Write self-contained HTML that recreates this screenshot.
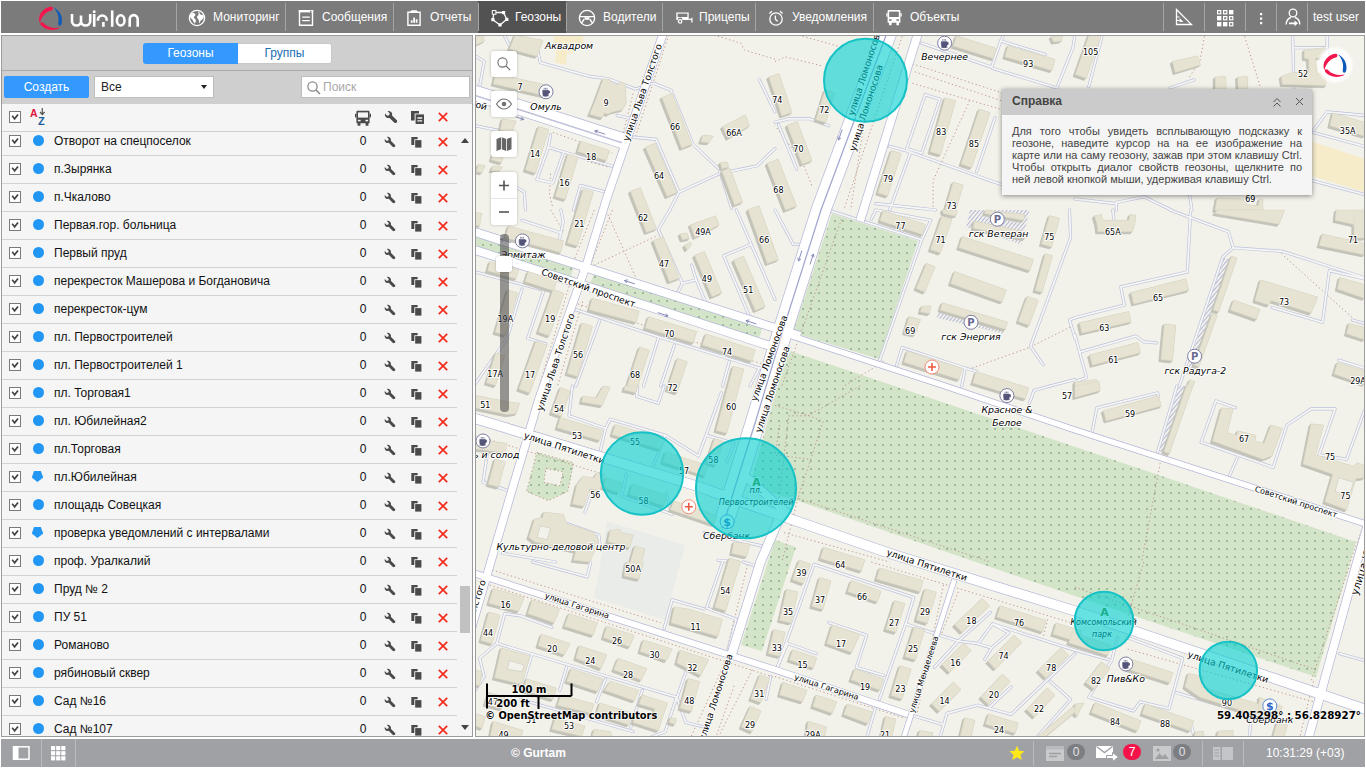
<!DOCTYPE html>
<html lang="ru">
<head>
<meta charset="utf-8">
<title>Wialon</title>
<style>
*{box-sizing:border-box;margin:0;padding:0}
html,body{width:1366px;height:768px;overflow:hidden;background:#fff;font-family:"Liberation Sans",sans-serif;font-size:13px;color:#222}
#top{position:absolute;left:1px;top:1px;width:1364px;height:32px;background:#7b7b7b;color:#fff}
#top .sep{position:absolute;top:2px;width:1px;height:28px;background:#a5a5a5}
#top .it{position:absolute;top:0;height:32px;line-height:32px;font-size:12px;color:#fff;white-space:nowrap}
#top .it svg{position:absolute;top:7.5px;left:12px}
#top .it span{position:absolute;left:37px;top:0}
#top .sel{background:#525252}
#left{position:absolute;left:1px;top:35px;width:472px;height:702px;background:#f5f5f5;border:1px solid #9b9b9b;overflow:hidden}
#lhead{position:absolute;left:0;top:0;width:470px;height:68px;background:#d0cfcf}
#lline{position:absolute;left:0;top:34px;width:470px;height:1px;background:#a9a9a9}
.tab{position:absolute;top:7px;height:21px;line-height:21px;text-align:center;font-size:12px}
#t1{left:141px;width:95px;background:#3399ff;color:#fff;border-radius:3px 0 0 3px}
#t2{left:236px;width:94px;background:#fff;color:#1a6fb5;border-radius:0 3px 3px 0;border:1px solid #c8c8c8;border-left:0;line-height:18px}
#create{position:absolute;left:2px;top:40px;width:85px;height:22px;background:#3399ff;color:#fff;border-radius:2px;text-align:center;line-height:22px;font-size:12px}
#sel{position:absolute;left:92px;top:40px;width:120px;height:22px;background:#fff;border:1px solid #bdbdbd;line-height:20px;padding-left:6px;font-size:12px;color:#222}
#sel i{position:absolute;right:6px;top:8px;border:3.5px solid transparent;border-top:4.5px solid #222;width:0;height:0}
#search{position:absolute;left:299px;top:40px;width:169px;height:22px;background:#fff;border:1px solid #bdbdbd;line-height:20px;padding-left:21px;font-size:12px;color:#a8a8a8}
#search svg{position:absolute;left:4px;top:3px}
#rows{position:absolute;left:0;top:68px;width:470px;height:633px}
.row{position:absolute;left:0;width:455px;height:28px;border-bottom:1px solid #d2d2d2}
.row .cb{position:absolute;left:7px;top:7px;width:12px;height:12px;border:1px solid #7a7a7a;background:#fff}
.row .cb svg{position:absolute;left:0;top:0}
.row .dot{position:absolute;left:31px;top:7px;width:11px;height:11px;border-radius:50%;background:#2196f3}
.row .nm{position:absolute;left:52px;top:0;line-height:27px;font-size:12px;color:#111;white-space:nowrap}
.row .z{position:absolute;left:355px;width:12px;text-align:center;top:0;line-height:27px;font-size:12px;color:#111}
.row svg.i1{position:absolute;left:381px;top:8px}
.row svg.i2{position:absolute;left:408px;top:8px}
.row svg.i3{position:absolute;left:435px;top:8px}
#map{position:absolute;left:475px;top:35px;width:890px;height:702px;border:1px solid #9b9b9b;overflow:hidden;background:#f3f2ea}
.mbtn{position:absolute;left:15px;width:26px;height:26px;background:#fff;border-radius:3px;box-shadow:0 0 3px rgba(0,0,0,.25)}
#bot{position:absolute;left:1px;top:739px;width:1364px;height:28px;background:#9fa1a5;color:#fff}
#dlg{position:absolute;left:526px;top:53px;width:310px;height:106px;background:#f5f5f5;box-shadow:0 1px 5px rgba(0,0,0,.45)}
#dlg .h{height:26px;background:#cbcbcb;font-weight:bold;font-size:12px;color:#444;line-height:25px;padding-left:10px}
#dlg .b{position:absolute;left:10px;top:36px;width:290px;font-size:11px;line-height:12px;color:#444;text-align:justify}
</style>
</head>
<body>
<div id="top">
<svg style="position:absolute;left:35px;top:3px" width="32" height="28" viewBox="36 4 32 28"><path d="M52.5 7.2C53.5 8.5 52.8 10.2 51 10.6C46 12 41.5 16.5 40 23C38.3 20 38.8 15 42 11.5C44.5 8.5 49.5 5.8 52.5 7.2Z" fill="#f5164e"/><path d="M40.2 22.8C41.5 21.8 43 22.3 44 23.5C47.5 27.5 54 28.8 60.5 27.5C57 30 50 30.8 45.5 28.6C42.5 27.2 40 25 40.2 22.8Z" fill="#f5164e"/><path d="M53.5 7.6C58 9.5 61.8 14 62 20C62 23 61.5 25.6 60 25.8C58.3 25.9 58 24 58.4 22C59.3 17 57.5 11.5 53.5 7.6Z" fill="#0f5ab8"/></svg>
<svg style="position:absolute;left:68px;top:7px" width="74" height="24" viewBox="69 8 74 24"><g fill="none" stroke="#fff" stroke-width="2.6" stroke-linejoin="round"><path d="M72 14V21.2a4.5 4.3 0 0 0 9 0V15.5M81 21.2a4.6 4.3 0 0 0 9.2 0V14"/><path d="M94.2 14V26.8M94.2 10.4V13"/><path d="M97.9 20.8V20a4.4 4.5 0 0 1 8.8 0V20.8"/><path d="M103.4 22V26.8"/><path d="M112.2 10.4V26.8"/><ellipse cx="120.7" cy="20.4" rx="3.8" ry="5.1"/><path d="M129.7 26.8V19.3a4 4.2 0 0 1 8 0V26.8"/></g></svg>
<div class="it" style="left:175px;width:109px"><svg width="18" height="18" viewBox="0 0 18 18" ><circle cx="9" cy="9" r="7.6" fill="none" stroke="#fff" stroke-width="1.4"/><path d="M4.2 4.2c1.5-.6 3 .2 3.2 1.3c.2 1.2-1.3 1.6-1.5 2.8c-.2 1.2 1.3 1.4 1.8 2.5c.5 1.2-.2 2.6-.9 3.6c-1.2-1-1.6-2.4-2.4-3.6c-.8-1.2-2.2-2-2.3-3.4c0-1.2.9-2.5 2.1-3.2z M10.5 2.2c1.4.9.8 2.3 1.8 3.1c1 .8 2.5.3 3.3 1.5c.4 1-.2 2.2-.8 3.1c-.7.9-1.7 1-2.4 2.1c-.4.8-.2 1.7-.9 2.3c-.6-1.1-.3-2.3-.8-3.4c-.5-1.1-1.8-1.6-1.7-2.9c.1-1.2 1.4-1.5 1.6-2.6c.2-1.1-.7-2.1-.1-3.2z" fill="#fff"/></svg><span>Мониторинг</span></div>
<div class="it" style="left:284px;width:108px"><svg width="18" height="18" viewBox="0 0 18 18" ><path d="M2.5 1.7h13v14.6h-13z" fill="none" stroke="#fff" stroke-width="1.4"/><rect x="1.8" y="1" width="14.4" height="2.4" fill="#fff"/><rect x="13" y="1.8" width="1.4" height="1.4" fill="#7b7b7b"/><path d="M5.2 8.2h7.6M5.2 11.6h7.6" stroke="#fff" stroke-width="1.3"/></svg><span>Сообщения</span></div>
<div class="it" style="left:392px;width:85px"><svg width="18" height="18" viewBox="0 0 18 18" ><path d="M2.9 3.2h12.2v13.1H2.9z" fill="none" stroke="#fff" stroke-width="1.4"/><path d="M5.4 3.2c0-1.4.8-2 1.8-2h3.6c1 0 1.8.6 1.8 2z" fill="#fff"/><path d="M5.8 13.8v-2.6h1.8v2.6zM8.2 13.8V8.6H10v5.2zM10.7 13.8v-3.6h1.8v3.6z" fill="#fff"/></svg><span>Отчеты</span></div>
<div class="it sel" style="left:477px;width:88px"><svg width="20" height="18" viewBox="0 0 20 18" ><path d="M4 3.5L13.5 3.5L16.8 10.3L10 16L2.8 10.7Z" fill="none" stroke="#fff" stroke-width="1.3"/><rect x="2.3" y="1.6" width="3.6" height="3.6" fill="#525252" stroke="#fff" stroke-width="1"/><rect x="12" y="2" width="3.2" height="3.2" fill="#fff"/><rect x="15.2" y="8.8" width="3.2" height="3.2" fill="#fff"/><rect x="8.4" y="14.3" width="3.2" height="3.2" fill="#fff"/><rect x="1.3" y="9" width="3.2" height="3.2" fill="#fff"/></svg><span>Геозоны</span></div>
<div class="it" style="left:565px;width:96px"><svg width="18" height="18" viewBox="0 0 18 18" ><circle cx="9" cy="9" r="7.6" fill="none" stroke="#fff" stroke-width="1.4"/><path d="M1.8 7.6h14.4M6.3 10l-2.8 4.2M11.7 10l2.8 4.2" stroke="#fff" stroke-width="1.4" fill="none"/><path d="M6.2 8.2h5.6l-1 2.6H7.2z" fill="#fff"/></svg><span>Водители</span></div>
<div class="it" style="left:661px;width:93px"><svg width="20" height="18" viewBox="0 0 20 18" ><path d="M2.3 3.4h12.4v7.6H8.5a2.4 2.4 0 0 0-4.8 0H2.3z" fill="#fff"/><rect x="3.6" y="4.6" width="9.8" height="3.4" fill="#7b7b7b"/><circle cx="6.1" cy="12.4" r="1.7" fill="none" stroke="#fff" stroke-width="1.3"/><path d="M14.7 10.3h3.2v-1.6M17.9 10.3v3.2" stroke="#fff" stroke-width="1.3" fill="none"/></svg><span>Прицепы</span></div>
<div class="it" style="left:754px;width:118px"><svg width="18" height="18" viewBox="0 0 18 18" ><circle cx="9" cy="10" r="6.2" fill="none" stroke="#fff" stroke-width="1.3"/><path d="M8.4 6.5v3.8l2.2 2M2.4 4.6l2.6-2.4M15.6 4.6L13 2.2" stroke="#fff" stroke-width="1.3" fill="none"/></svg><span>Уведомления</span></div>
<div class="it" style="left:872px;width:120px"><svg width="18" height="18" viewBox="0 0 18 18" ><path d="M2.6 2.2c0-.8.6-1.2 1.4-1.2h10c.8 0 1.4.4 1.4 1.2v11.6H14v2.4h-2.6v-2.4H6.6v2.4H4v-2.4H2.6z" fill="#fff"/><rect x="4.2" y="2.6" width="9.6" height="5.4" fill="#7b7b7b"/><rect x="4" y="10.3" width="2.6" height="1.5" fill="#7b7b7b"/><rect x="11.4" y="10.3" width="2.6" height="1.5" fill="#7b7b7b"/><rect x="1.3" y="4.2" width="1.3" height="3.4" fill="#fff"/><rect x="15.4" y="4.2" width="1.3" height="3.4" fill="#fff"/></svg><span>Объекты</span></div>
<div class="sep" style="left:175px"></div>
<div class="sep" style="left:284px"></div>
<div class="sep" style="left:392px"></div>
<div class="sep" style="left:477px"></div>
<div class="sep" style="left:565px"></div>
<div class="sep" style="left:661px"></div>
<div class="sep" style="left:754px"></div>
<div class="sep" style="left:872px"></div>
<div class="sep" style="left:1162px"></div>
<div class="sep" style="left:1203px"></div>
<div class="sep" style="left:1244px"></div>
<div class="sep" style="left:1275px"></div>
<div class="sep" style="left:1306px"></div>
<svg style="position:absolute;left:1173px;top:7px" width="20" height="18" viewBox="0 0 20 18"><path d="M2.5 1.5L17.5 16.5H2.5Z" fill="none" stroke="#fff" stroke-width="1.3"/><path d="M2.5 9h3M2.5 12.5h3" stroke="#fff" stroke-width="1"/><path d="M5.5 10l4 4h-4z" fill="#fff"/></svg>
<svg style="position:absolute;left:1215px;top:8px" width="18" height="18" viewBox="0 0 18 18"><rect x="1.6" y="1.6" width="3.2" height="3.2" fill="none" stroke="#fff" stroke-width="1.2"/><rect x="7.6" y="1.6" width="3.2" height="3.2" fill="none" stroke="#fff" stroke-width="1.2"/><rect x="13" y="1" width="4.4" height="4.4" fill="#fff"/><rect x="1" y="7" width="4.4" height="4.4" fill="#fff"/><rect x="7.6" y="7.6" width="3.2" height="3.2" fill="none" stroke="#fff" stroke-width="1.2"/><rect x="13.6" y="7.6" width="3.2" height="3.2" fill="none" stroke="#fff" stroke-width="1.2"/><rect x="1" y="13" width="4.4" height="4.4" fill="#fff"/><rect x="7" y="13" width="4.4" height="4.4" fill="#fff"/><rect x="13.6" y="13.6" width="3.2" height="3.2" fill="none" stroke="#fff" stroke-width="1.2"/></svg>
<svg style="position:absolute;left:1257px;top:11px" width="6" height="14" viewBox="0 0 6 14"><rect x="2" y="1" width="2.2" height="2.2" fill="#fff"/><rect x="2" y="5.5" width="2.2" height="2.2" fill="#fff"/><rect x="2" y="10" width="2.2" height="2.2" fill="#fff"/></svg>
<svg style="position:absolute;left:1282px;top:6px" width="20" height="20" viewBox="0 0 20 20"><circle cx="10" cy="6" r="3.8" fill="none" stroke="#fff" stroke-width="1.3"/><path d="M3.2 17.5c.2-4 2.5-6.4 4.8-7M16.8 17.5c-.2-4-2.5-6.4-4.8-7" fill="none" stroke="#fff" stroke-width="1.3"/><path d="M6 15.4h5.5v-2l3.5 2.9-3.5 2.9v-2H6z" fill="#fff"/></svg>
<div class="it" style="left:1312px"><span style="left:0">test user</span></div>
</div>
<div id="left">
<div id="lhead"></div><div id="lline"></div>
<div class="tab" id="t1">Геозоны</div><div class="tab" id="t2">Группы</div>
<div id="create">Создать</div>
<div id="sel">Все<i></i></div>
<div id="search"><svg width="16" height="16" viewBox="0 0 16 16"><circle cx="6.5" cy="6.5" r="4.6" fill="none" stroke="#8a8a8a" stroke-width="1.3"/><path d="M10 10l4 4" stroke="#8a8a8a" stroke-width="1.6"/></svg>Поиск</div>
<div id="rows">
<div class="row" style="top:24px"><div class="cb"><svg width="10" height="10" viewBox="0 0 10 10"><path d="M2.2 3.8l2.4 3L8 2.4" fill="none" stroke="#444" stroke-width="1.7"/></svg></div><div class="dot"></div><div class="nm">Отворот на спецпоселок</div><div class="z">0</div><svg class="i1" width="13" height="13" viewBox="0 0 14 14"><g transform="translate(14 0) scale(-1 1)"><path d="M9.8 1c-1.9-.6-3.9.5-4.3 2.4c-.1.6-.1 1.2.1 1.7L1.3 9.4c-.7.7-.7 1.7 0 2.3c.6.7 1.7.7 2.3 0l4.3-4.3c.6.2 1.2.2 1.8.1c1.9-.5 3-2.4 2.4-4.3L10 5.3 8.3 4.9 7.8 3.1z" fill="#4a4a4a"/></g></svg><svg class="i2" width="12.5" height="12.5" viewBox="0 0 14 14"><path d="M1.5 1h7v2.6H4.8v6.4H1.5z" fill="#4a4a4a"/><rect x="5.8" y="4.6" width="7" height="8.4" fill="#4a4a4a"/></svg><svg class="i3" width="12" height="12" viewBox="0 0 12 12"><path d="M1.8 1.8l8.4 8.4M10.2 1.8l-8.4 8.4" stroke="#f62a1c" stroke-width="1.7"/></svg></div>
<div class="row" style="top:52px"><div class="cb"><svg width="10" height="10" viewBox="0 0 10 10"><path d="M2.2 3.8l2.4 3L8 2.4" fill="none" stroke="#444" stroke-width="1.7"/></svg></div><div class="dot"></div><div class="nm">п.Зырянка</div><div class="z">0</div><svg class="i1" width="13" height="13" viewBox="0 0 14 14"><g transform="translate(14 0) scale(-1 1)"><path d="M9.8 1c-1.9-.6-3.9.5-4.3 2.4c-.1.6-.1 1.2.1 1.7L1.3 9.4c-.7.7-.7 1.7 0 2.3c.6.7 1.7.7 2.3 0l4.3-4.3c.6.2 1.2.2 1.8.1c1.9-.5 3-2.4 2.4-4.3L10 5.3 8.3 4.9 7.8 3.1z" fill="#4a4a4a"/></g></svg><svg class="i2" width="12.5" height="12.5" viewBox="0 0 14 14"><path d="M1.5 1h7v2.6H4.8v6.4H1.5z" fill="#4a4a4a"/><rect x="5.8" y="4.6" width="7" height="8.4" fill="#4a4a4a"/></svg><svg class="i3" width="12" height="12" viewBox="0 0 12 12"><path d="M1.8 1.8l8.4 8.4M10.2 1.8l-8.4 8.4" stroke="#f62a1c" stroke-width="1.7"/></svg></div>
<div class="row" style="top:80px"><div class="cb"><svg width="10" height="10" viewBox="0 0 10 10"><path d="M2.2 3.8l2.4 3L8 2.4" fill="none" stroke="#444" stroke-width="1.7"/></svg></div><div class="dot"></div><div class="nm">п.Чкалово</div><div class="z">0</div><svg class="i1" width="13" height="13" viewBox="0 0 14 14"><g transform="translate(14 0) scale(-1 1)"><path d="M9.8 1c-1.9-.6-3.9.5-4.3 2.4c-.1.6-.1 1.2.1 1.7L1.3 9.4c-.7.7-.7 1.7 0 2.3c.6.7 1.7.7 2.3 0l4.3-4.3c.6.2 1.2.2 1.8.1c1.9-.5 3-2.4 2.4-4.3L10 5.3 8.3 4.9 7.8 3.1z" fill="#4a4a4a"/></g></svg><svg class="i2" width="12.5" height="12.5" viewBox="0 0 14 14"><path d="M1.5 1h7v2.6H4.8v6.4H1.5z" fill="#4a4a4a"/><rect x="5.8" y="4.6" width="7" height="8.4" fill="#4a4a4a"/></svg><svg class="i3" width="12" height="12" viewBox="0 0 12 12"><path d="M1.8 1.8l8.4 8.4M10.2 1.8l-8.4 8.4" stroke="#f62a1c" stroke-width="1.7"/></svg></div>
<div class="row" style="top:108px"><div class="cb"><svg width="10" height="10" viewBox="0 0 10 10"><path d="M2.2 3.8l2.4 3L8 2.4" fill="none" stroke="#444" stroke-width="1.7"/></svg></div><div class="dot"></div><div class="nm">Первая.гор. больница</div><div class="z">0</div><svg class="i1" width="13" height="13" viewBox="0 0 14 14"><g transform="translate(14 0) scale(-1 1)"><path d="M9.8 1c-1.9-.6-3.9.5-4.3 2.4c-.1.6-.1 1.2.1 1.7L1.3 9.4c-.7.7-.7 1.7 0 2.3c.6.7 1.7.7 2.3 0l4.3-4.3c.6.2 1.2.2 1.8.1c1.9-.5 3-2.4 2.4-4.3L10 5.3 8.3 4.9 7.8 3.1z" fill="#4a4a4a"/></g></svg><svg class="i2" width="12.5" height="12.5" viewBox="0 0 14 14"><path d="M1.5 1h7v2.6H4.8v6.4H1.5z" fill="#4a4a4a"/><rect x="5.8" y="4.6" width="7" height="8.4" fill="#4a4a4a"/></svg><svg class="i3" width="12" height="12" viewBox="0 0 12 12"><path d="M1.8 1.8l8.4 8.4M10.2 1.8l-8.4 8.4" stroke="#f62a1c" stroke-width="1.7"/></svg></div>
<div class="row" style="top:136px"><div class="cb"><svg width="10" height="10" viewBox="0 0 10 10"><path d="M2.2 3.8l2.4 3L8 2.4" fill="none" stroke="#444" stroke-width="1.7"/></svg></div><div class="dot"></div><div class="nm">Первый пруд</div><div class="z">0</div><svg class="i1" width="13" height="13" viewBox="0 0 14 14"><g transform="translate(14 0) scale(-1 1)"><path d="M9.8 1c-1.9-.6-3.9.5-4.3 2.4c-.1.6-.1 1.2.1 1.7L1.3 9.4c-.7.7-.7 1.7 0 2.3c.6.7 1.7.7 2.3 0l4.3-4.3c.6.2 1.2.2 1.8.1c1.9-.5 3-2.4 2.4-4.3L10 5.3 8.3 4.9 7.8 3.1z" fill="#4a4a4a"/></g></svg><svg class="i2" width="12.5" height="12.5" viewBox="0 0 14 14"><path d="M1.5 1h7v2.6H4.8v6.4H1.5z" fill="#4a4a4a"/><rect x="5.8" y="4.6" width="7" height="8.4" fill="#4a4a4a"/></svg><svg class="i3" width="12" height="12" viewBox="0 0 12 12"><path d="M1.8 1.8l8.4 8.4M10.2 1.8l-8.4 8.4" stroke="#f62a1c" stroke-width="1.7"/></svg></div>
<div class="row" style="top:164px"><div class="cb"><svg width="10" height="10" viewBox="0 0 10 10"><path d="M2.2 3.8l2.4 3L8 2.4" fill="none" stroke="#444" stroke-width="1.7"/></svg></div><div class="dot"></div><div class="nm">перекресток Машерова и Богдановича</div><div class="z">0</div><svg class="i1" width="13" height="13" viewBox="0 0 14 14"><g transform="translate(14 0) scale(-1 1)"><path d="M9.8 1c-1.9-.6-3.9.5-4.3 2.4c-.1.6-.1 1.2.1 1.7L1.3 9.4c-.7.7-.7 1.7 0 2.3c.6.7 1.7.7 2.3 0l4.3-4.3c.6.2 1.2.2 1.8.1c1.9-.5 3-2.4 2.4-4.3L10 5.3 8.3 4.9 7.8 3.1z" fill="#4a4a4a"/></g></svg><svg class="i2" width="12.5" height="12.5" viewBox="0 0 14 14"><path d="M1.5 1h7v2.6H4.8v6.4H1.5z" fill="#4a4a4a"/><rect x="5.8" y="4.6" width="7" height="8.4" fill="#4a4a4a"/></svg><svg class="i3" width="12" height="12" viewBox="0 0 12 12"><path d="M1.8 1.8l8.4 8.4M10.2 1.8l-8.4 8.4" stroke="#f62a1c" stroke-width="1.7"/></svg></div>
<div class="row" style="top:192px"><div class="cb"><svg width="10" height="10" viewBox="0 0 10 10"><path d="M2.2 3.8l2.4 3L8 2.4" fill="none" stroke="#444" stroke-width="1.7"/></svg></div><div class="dot"></div><div class="nm">перекресток-цум</div><div class="z">0</div><svg class="i1" width="13" height="13" viewBox="0 0 14 14"><g transform="translate(14 0) scale(-1 1)"><path d="M9.8 1c-1.9-.6-3.9.5-4.3 2.4c-.1.6-.1 1.2.1 1.7L1.3 9.4c-.7.7-.7 1.7 0 2.3c.6.7 1.7.7 2.3 0l4.3-4.3c.6.2 1.2.2 1.8.1c1.9-.5 3-2.4 2.4-4.3L10 5.3 8.3 4.9 7.8 3.1z" fill="#4a4a4a"/></g></svg><svg class="i2" width="12.5" height="12.5" viewBox="0 0 14 14"><path d="M1.5 1h7v2.6H4.8v6.4H1.5z" fill="#4a4a4a"/><rect x="5.8" y="4.6" width="7" height="8.4" fill="#4a4a4a"/></svg><svg class="i3" width="12" height="12" viewBox="0 0 12 12"><path d="M1.8 1.8l8.4 8.4M10.2 1.8l-8.4 8.4" stroke="#f62a1c" stroke-width="1.7"/></svg></div>
<div class="row" style="top:220px"><div class="cb"><svg width="10" height="10" viewBox="0 0 10 10"><path d="M2.2 3.8l2.4 3L8 2.4" fill="none" stroke="#444" stroke-width="1.7"/></svg></div><div class="dot"></div><div class="nm">пл. Первостроителей</div><div class="z">0</div><svg class="i1" width="13" height="13" viewBox="0 0 14 14"><g transform="translate(14 0) scale(-1 1)"><path d="M9.8 1c-1.9-.6-3.9.5-4.3 2.4c-.1.6-.1 1.2.1 1.7L1.3 9.4c-.7.7-.7 1.7 0 2.3c.6.7 1.7.7 2.3 0l4.3-4.3c.6.2 1.2.2 1.8.1c1.9-.5 3-2.4 2.4-4.3L10 5.3 8.3 4.9 7.8 3.1z" fill="#4a4a4a"/></g></svg><svg class="i2" width="12.5" height="12.5" viewBox="0 0 14 14"><path d="M1.5 1h7v2.6H4.8v6.4H1.5z" fill="#4a4a4a"/><rect x="5.8" y="4.6" width="7" height="8.4" fill="#4a4a4a"/></svg><svg class="i3" width="12" height="12" viewBox="0 0 12 12"><path d="M1.8 1.8l8.4 8.4M10.2 1.8l-8.4 8.4" stroke="#f62a1c" stroke-width="1.7"/></svg></div>
<div class="row" style="top:248px"><div class="cb"><svg width="10" height="10" viewBox="0 0 10 10"><path d="M2.2 3.8l2.4 3L8 2.4" fill="none" stroke="#444" stroke-width="1.7"/></svg></div><div class="dot"></div><div class="nm">пл. Первостроителей 1</div><div class="z">0</div><svg class="i1" width="13" height="13" viewBox="0 0 14 14"><g transform="translate(14 0) scale(-1 1)"><path d="M9.8 1c-1.9-.6-3.9.5-4.3 2.4c-.1.6-.1 1.2.1 1.7L1.3 9.4c-.7.7-.7 1.7 0 2.3c.6.7 1.7.7 2.3 0l4.3-4.3c.6.2 1.2.2 1.8.1c1.9-.5 3-2.4 2.4-4.3L10 5.3 8.3 4.9 7.8 3.1z" fill="#4a4a4a"/></g></svg><svg class="i2" width="12.5" height="12.5" viewBox="0 0 14 14"><path d="M1.5 1h7v2.6H4.8v6.4H1.5z" fill="#4a4a4a"/><rect x="5.8" y="4.6" width="7" height="8.4" fill="#4a4a4a"/></svg><svg class="i3" width="12" height="12" viewBox="0 0 12 12"><path d="M1.8 1.8l8.4 8.4M10.2 1.8l-8.4 8.4" stroke="#f62a1c" stroke-width="1.7"/></svg></div>
<div class="row" style="top:276px"><div class="cb"><svg width="10" height="10" viewBox="0 0 10 10"><path d="M2.2 3.8l2.4 3L8 2.4" fill="none" stroke="#444" stroke-width="1.7"/></svg></div><div class="dot"></div><div class="nm">пл. Торговая1</div><div class="z">0</div><svg class="i1" width="13" height="13" viewBox="0 0 14 14"><g transform="translate(14 0) scale(-1 1)"><path d="M9.8 1c-1.9-.6-3.9.5-4.3 2.4c-.1.6-.1 1.2.1 1.7L1.3 9.4c-.7.7-.7 1.7 0 2.3c.6.7 1.7.7 2.3 0l4.3-4.3c.6.2 1.2.2 1.8.1c1.9-.5 3-2.4 2.4-4.3L10 5.3 8.3 4.9 7.8 3.1z" fill="#4a4a4a"/></g></svg><svg class="i2" width="12.5" height="12.5" viewBox="0 0 14 14"><path d="M1.5 1h7v2.6H4.8v6.4H1.5z" fill="#4a4a4a"/><rect x="5.8" y="4.6" width="7" height="8.4" fill="#4a4a4a"/></svg><svg class="i3" width="12" height="12" viewBox="0 0 12 12"><path d="M1.8 1.8l8.4 8.4M10.2 1.8l-8.4 8.4" stroke="#f62a1c" stroke-width="1.7"/></svg></div>
<div class="row" style="top:304px"><div class="cb"><svg width="10" height="10" viewBox="0 0 10 10"><path d="M2.2 3.8l2.4 3L8 2.4" fill="none" stroke="#444" stroke-width="1.7"/></svg></div><div class="dot"></div><div class="nm">пл. Юбилейная2</div><div class="z">0</div><svg class="i1" width="13" height="13" viewBox="0 0 14 14"><g transform="translate(14 0) scale(-1 1)"><path d="M9.8 1c-1.9-.6-3.9.5-4.3 2.4c-.1.6-.1 1.2.1 1.7L1.3 9.4c-.7.7-.7 1.7 0 2.3c.6.7 1.7.7 2.3 0l4.3-4.3c.6.2 1.2.2 1.8.1c1.9-.5 3-2.4 2.4-4.3L10 5.3 8.3 4.9 7.8 3.1z" fill="#4a4a4a"/></g></svg><svg class="i2" width="12.5" height="12.5" viewBox="0 0 14 14"><path d="M1.5 1h7v2.6H4.8v6.4H1.5z" fill="#4a4a4a"/><rect x="5.8" y="4.6" width="7" height="8.4" fill="#4a4a4a"/></svg><svg class="i3" width="12" height="12" viewBox="0 0 12 12"><path d="M1.8 1.8l8.4 8.4M10.2 1.8l-8.4 8.4" stroke="#f62a1c" stroke-width="1.7"/></svg></div>
<div class="row" style="top:332px"><div class="cb"><svg width="10" height="10" viewBox="0 0 10 10"><path d="M2.2 3.8l2.4 3L8 2.4" fill="none" stroke="#444" stroke-width="1.7"/></svg></div><div class="dot"></div><div class="nm">пл.Торговая</div><div class="z">0</div><svg class="i1" width="13" height="13" viewBox="0 0 14 14"><g transform="translate(14 0) scale(-1 1)"><path d="M9.8 1c-1.9-.6-3.9.5-4.3 2.4c-.1.6-.1 1.2.1 1.7L1.3 9.4c-.7.7-.7 1.7 0 2.3c.6.7 1.7.7 2.3 0l4.3-4.3c.6.2 1.2.2 1.8.1c1.9-.5 3-2.4 2.4-4.3L10 5.3 8.3 4.9 7.8 3.1z" fill="#4a4a4a"/></g></svg><svg class="i2" width="12.5" height="12.5" viewBox="0 0 14 14"><path d="M1.5 1h7v2.6H4.8v6.4H1.5z" fill="#4a4a4a"/><rect x="5.8" y="4.6" width="7" height="8.4" fill="#4a4a4a"/></svg><svg class="i3" width="12" height="12" viewBox="0 0 12 12"><path d="M1.8 1.8l8.4 8.4M10.2 1.8l-8.4 8.4" stroke="#f62a1c" stroke-width="1.7"/></svg></div>
<div class="row" style="top:360px"><div class="cb"><svg width="10" height="10" viewBox="0 0 10 10"><path d="M2.2 3.8l2.4 3L8 2.4" fill="none" stroke="#444" stroke-width="1.7"/></svg></div><svg style="position:absolute;left:29px;top:6px" width="13" height="13" viewBox="0 0 13 13"><path d="M3 1h6.8l2.4 6.6-5.8 4.4L0.8 7.6z" fill="#2196f3"/></svg><div class="nm">пл.Юбилейная</div><div class="z">0</div><svg class="i1" width="13" height="13" viewBox="0 0 14 14"><g transform="translate(14 0) scale(-1 1)"><path d="M9.8 1c-1.9-.6-3.9.5-4.3 2.4c-.1.6-.1 1.2.1 1.7L1.3 9.4c-.7.7-.7 1.7 0 2.3c.6.7 1.7.7 2.3 0l4.3-4.3c.6.2 1.2.2 1.8.1c1.9-.5 3-2.4 2.4-4.3L10 5.3 8.3 4.9 7.8 3.1z" fill="#4a4a4a"/></g></svg><svg class="i2" width="12.5" height="12.5" viewBox="0 0 14 14"><path d="M1.5 1h7v2.6H4.8v6.4H1.5z" fill="#4a4a4a"/><rect x="5.8" y="4.6" width="7" height="8.4" fill="#4a4a4a"/></svg><svg class="i3" width="12" height="12" viewBox="0 0 12 12"><path d="M1.8 1.8l8.4 8.4M10.2 1.8l-8.4 8.4" stroke="#f62a1c" stroke-width="1.7"/></svg></div>
<div class="row" style="top:388px"><div class="cb"><svg width="10" height="10" viewBox="0 0 10 10"><path d="M2.2 3.8l2.4 3L8 2.4" fill="none" stroke="#444" stroke-width="1.7"/></svg></div><div class="dot"></div><div class="nm">площадь Совецкая</div><div class="z">0</div><svg class="i1" width="13" height="13" viewBox="0 0 14 14"><g transform="translate(14 0) scale(-1 1)"><path d="M9.8 1c-1.9-.6-3.9.5-4.3 2.4c-.1.6-.1 1.2.1 1.7L1.3 9.4c-.7.7-.7 1.7 0 2.3c.6.7 1.7.7 2.3 0l4.3-4.3c.6.2 1.2.2 1.8.1c1.9-.5 3-2.4 2.4-4.3L10 5.3 8.3 4.9 7.8 3.1z" fill="#4a4a4a"/></g></svg><svg class="i2" width="12.5" height="12.5" viewBox="0 0 14 14"><path d="M1.5 1h7v2.6H4.8v6.4H1.5z" fill="#4a4a4a"/><rect x="5.8" y="4.6" width="7" height="8.4" fill="#4a4a4a"/></svg><svg class="i3" width="12" height="12" viewBox="0 0 12 12"><path d="M1.8 1.8l8.4 8.4M10.2 1.8l-8.4 8.4" stroke="#f62a1c" stroke-width="1.7"/></svg></div>
<div class="row" style="top:416px"><div class="cb"><svg width="10" height="10" viewBox="0 0 10 10"><path d="M2.2 3.8l2.4 3L8 2.4" fill="none" stroke="#444" stroke-width="1.7"/></svg></div><svg style="position:absolute;left:29px;top:6px" width="13" height="13" viewBox="0 0 13 13"><path d="M3 1h6.8l2.4 6.6-5.8 4.4L0.8 7.6z" fill="#2196f3"/></svg><div class="nm">проверка уведомлений с интервалами</div><div class="z">0</div><svg class="i1" width="13" height="13" viewBox="0 0 14 14"><g transform="translate(14 0) scale(-1 1)"><path d="M9.8 1c-1.9-.6-3.9.5-4.3 2.4c-.1.6-.1 1.2.1 1.7L1.3 9.4c-.7.7-.7 1.7 0 2.3c.6.7 1.7.7 2.3 0l4.3-4.3c.6.2 1.2.2 1.8.1c1.9-.5 3-2.4 2.4-4.3L10 5.3 8.3 4.9 7.8 3.1z" fill="#4a4a4a"/></g></svg><svg class="i2" width="12.5" height="12.5" viewBox="0 0 14 14"><path d="M1.5 1h7v2.6H4.8v6.4H1.5z" fill="#4a4a4a"/><rect x="5.8" y="4.6" width="7" height="8.4" fill="#4a4a4a"/></svg><svg class="i3" width="12" height="12" viewBox="0 0 12 12"><path d="M1.8 1.8l8.4 8.4M10.2 1.8l-8.4 8.4" stroke="#f62a1c" stroke-width="1.7"/></svg></div>
<div class="row" style="top:444px"><div class="cb"><svg width="10" height="10" viewBox="0 0 10 10"><path d="M2.2 3.8l2.4 3L8 2.4" fill="none" stroke="#444" stroke-width="1.7"/></svg></div><div class="dot"></div><div class="nm">проф. Уралкалий</div><div class="z">0</div><svg class="i1" width="13" height="13" viewBox="0 0 14 14"><g transform="translate(14 0) scale(-1 1)"><path d="M9.8 1c-1.9-.6-3.9.5-4.3 2.4c-.1.6-.1 1.2.1 1.7L1.3 9.4c-.7.7-.7 1.7 0 2.3c.6.7 1.7.7 2.3 0l4.3-4.3c.6.2 1.2.2 1.8.1c1.9-.5 3-2.4 2.4-4.3L10 5.3 8.3 4.9 7.8 3.1z" fill="#4a4a4a"/></g></svg><svg class="i2" width="12.5" height="12.5" viewBox="0 0 14 14"><path d="M1.5 1h7v2.6H4.8v6.4H1.5z" fill="#4a4a4a"/><rect x="5.8" y="4.6" width="7" height="8.4" fill="#4a4a4a"/></svg><svg class="i3" width="12" height="12" viewBox="0 0 12 12"><path d="M1.8 1.8l8.4 8.4M10.2 1.8l-8.4 8.4" stroke="#f62a1c" stroke-width="1.7"/></svg></div>
<div class="row" style="top:472px"><div class="cb"><svg width="10" height="10" viewBox="0 0 10 10"><path d="M2.2 3.8l2.4 3L8 2.4" fill="none" stroke="#444" stroke-width="1.7"/></svg></div><div class="dot"></div><div class="nm">Пруд № 2</div><div class="z">0</div><svg class="i1" width="13" height="13" viewBox="0 0 14 14"><g transform="translate(14 0) scale(-1 1)"><path d="M9.8 1c-1.9-.6-3.9.5-4.3 2.4c-.1.6-.1 1.2.1 1.7L1.3 9.4c-.7.7-.7 1.7 0 2.3c.6.7 1.7.7 2.3 0l4.3-4.3c.6.2 1.2.2 1.8.1c1.9-.5 3-2.4 2.4-4.3L10 5.3 8.3 4.9 7.8 3.1z" fill="#4a4a4a"/></g></svg><svg class="i2" width="12.5" height="12.5" viewBox="0 0 14 14"><path d="M1.5 1h7v2.6H4.8v6.4H1.5z" fill="#4a4a4a"/><rect x="5.8" y="4.6" width="7" height="8.4" fill="#4a4a4a"/></svg><svg class="i3" width="12" height="12" viewBox="0 0 12 12"><path d="M1.8 1.8l8.4 8.4M10.2 1.8l-8.4 8.4" stroke="#f62a1c" stroke-width="1.7"/></svg></div>
<div class="row" style="top:500px"><div class="cb"><svg width="10" height="10" viewBox="0 0 10 10"><path d="M2.2 3.8l2.4 3L8 2.4" fill="none" stroke="#444" stroke-width="1.7"/></svg></div><div class="dot"></div><div class="nm">ПУ 51</div><div class="z">0</div><svg class="i1" width="13" height="13" viewBox="0 0 14 14"><g transform="translate(14 0) scale(-1 1)"><path d="M9.8 1c-1.9-.6-3.9.5-4.3 2.4c-.1.6-.1 1.2.1 1.7L1.3 9.4c-.7.7-.7 1.7 0 2.3c.6.7 1.7.7 2.3 0l4.3-4.3c.6.2 1.2.2 1.8.1c1.9-.5 3-2.4 2.4-4.3L10 5.3 8.3 4.9 7.8 3.1z" fill="#4a4a4a"/></g></svg><svg class="i2" width="12.5" height="12.5" viewBox="0 0 14 14"><path d="M1.5 1h7v2.6H4.8v6.4H1.5z" fill="#4a4a4a"/><rect x="5.8" y="4.6" width="7" height="8.4" fill="#4a4a4a"/></svg><svg class="i3" width="12" height="12" viewBox="0 0 12 12"><path d="M1.8 1.8l8.4 8.4M10.2 1.8l-8.4 8.4" stroke="#f62a1c" stroke-width="1.7"/></svg></div>
<div class="row" style="top:528px"><div class="cb"><svg width="10" height="10" viewBox="0 0 10 10"><path d="M2.2 3.8l2.4 3L8 2.4" fill="none" stroke="#444" stroke-width="1.7"/></svg></div><div class="dot"></div><div class="nm">Романово</div><div class="z">0</div><svg class="i1" width="13" height="13" viewBox="0 0 14 14"><g transform="translate(14 0) scale(-1 1)"><path d="M9.8 1c-1.9-.6-3.9.5-4.3 2.4c-.1.6-.1 1.2.1 1.7L1.3 9.4c-.7.7-.7 1.7 0 2.3c.6.7 1.7.7 2.3 0l4.3-4.3c.6.2 1.2.2 1.8.1c1.9-.5 3-2.4 2.4-4.3L10 5.3 8.3 4.9 7.8 3.1z" fill="#4a4a4a"/></g></svg><svg class="i2" width="12.5" height="12.5" viewBox="0 0 14 14"><path d="M1.5 1h7v2.6H4.8v6.4H1.5z" fill="#4a4a4a"/><rect x="5.8" y="4.6" width="7" height="8.4" fill="#4a4a4a"/></svg><svg class="i3" width="12" height="12" viewBox="0 0 12 12"><path d="M1.8 1.8l8.4 8.4M10.2 1.8l-8.4 8.4" stroke="#f62a1c" stroke-width="1.7"/></svg></div>
<div class="row" style="top:556px"><div class="cb"><svg width="10" height="10" viewBox="0 0 10 10"><path d="M2.2 3.8l2.4 3L8 2.4" fill="none" stroke="#444" stroke-width="1.7"/></svg></div><div class="dot"></div><div class="nm">рябиновый сквер</div><div class="z">0</div><svg class="i1" width="13" height="13" viewBox="0 0 14 14"><g transform="translate(14 0) scale(-1 1)"><path d="M9.8 1c-1.9-.6-3.9.5-4.3 2.4c-.1.6-.1 1.2.1 1.7L1.3 9.4c-.7.7-.7 1.7 0 2.3c.6.7 1.7.7 2.3 0l4.3-4.3c.6.2 1.2.2 1.8.1c1.9-.5 3-2.4 2.4-4.3L10 5.3 8.3 4.9 7.8 3.1z" fill="#4a4a4a"/></g></svg><svg class="i2" width="12.5" height="12.5" viewBox="0 0 14 14"><path d="M1.5 1h7v2.6H4.8v6.4H1.5z" fill="#4a4a4a"/><rect x="5.8" y="4.6" width="7" height="8.4" fill="#4a4a4a"/></svg><svg class="i3" width="12" height="12" viewBox="0 0 12 12"><path d="M1.8 1.8l8.4 8.4M10.2 1.8l-8.4 8.4" stroke="#f62a1c" stroke-width="1.7"/></svg></div>
<div class="row" style="top:584px"><div class="cb"><svg width="10" height="10" viewBox="0 0 10 10"><path d="M2.2 3.8l2.4 3L8 2.4" fill="none" stroke="#444" stroke-width="1.7"/></svg></div><div class="dot"></div><div class="nm">Сад №16</div><div class="z">0</div><svg class="i1" width="13" height="13" viewBox="0 0 14 14"><g transform="translate(14 0) scale(-1 1)"><path d="M9.8 1c-1.9-.6-3.9.5-4.3 2.4c-.1.6-.1 1.2.1 1.7L1.3 9.4c-.7.7-.7 1.7 0 2.3c.6.7 1.7.7 2.3 0l4.3-4.3c.6.2 1.2.2 1.8.1c1.9-.5 3-2.4 2.4-4.3L10 5.3 8.3 4.9 7.8 3.1z" fill="#4a4a4a"/></g></svg><svg class="i2" width="12.5" height="12.5" viewBox="0 0 14 14"><path d="M1.5 1h7v2.6H4.8v6.4H1.5z" fill="#4a4a4a"/><rect x="5.8" y="4.6" width="7" height="8.4" fill="#4a4a4a"/></svg><svg class="i3" width="12" height="12" viewBox="0 0 12 12"><path d="M1.8 1.8l8.4 8.4M10.2 1.8l-8.4 8.4" stroke="#f62a1c" stroke-width="1.7"/></svg></div>
<div class="row" style="top:612px"><div class="cb"><svg width="10" height="10" viewBox="0 0 10 10"><path d="M2.2 3.8l2.4 3L8 2.4" fill="none" stroke="#444" stroke-width="1.7"/></svg></div><div class="dot"></div><div class="nm">Сад №107</div><div class="z">0</div><svg class="i1" width="13" height="13" viewBox="0 0 14 14"><g transform="translate(14 0) scale(-1 1)"><path d="M9.8 1c-1.9-.6-3.9.5-4.3 2.4c-.1.6-.1 1.2.1 1.7L1.3 9.4c-.7.7-.7 1.7 0 2.3c.6.7 1.7.7 2.3 0l4.3-4.3c.6.2 1.2.2 1.8.1c1.9-.5 3-2.4 2.4-4.3L10 5.3 8.3 4.9 7.8 3.1z" fill="#4a4a4a"/></g></svg><svg class="i2" width="12.5" height="12.5" viewBox="0 0 14 14"><path d="M1.5 1h7v2.6H4.8v6.4H1.5z" fill="#4a4a4a"/><rect x="5.8" y="4.6" width="7" height="8.4" fill="#4a4a4a"/></svg><svg class="i3" width="12" height="12" viewBox="0 0 12 12"><path d="M1.8 1.8l8.4 8.4M10.2 1.8l-8.4 8.4" stroke="#f62a1c" stroke-width="1.7"/></svg></div>
<div class="row" style="background:#f5f5f5;z-index:2;top:0;height:28px;width:470px;border-bottom:1px solid #d0d0d0"><div class="cb" style="top:7px"><svg width="10" height="10" viewBox="0 0 10 10"><path d="M2.2 3.8l2.4 3L8 2.4" fill="none" stroke="#444" stroke-width="1.7"/></svg></div><svg style="position:absolute;left:28px;top:3px" width="18" height="20" viewBox="0 0 18 20"><text x="0" y="10" font-family="Liberation Sans,sans-serif" font-weight="bold" font-size="10.5" fill="#e0143c">A</text><text x="8" y="18" font-family="Liberation Sans,sans-serif" font-weight="bold" font-size="11" fill="#1a5f9e">Z</text><path d="M12.3 1v6M10 5l2.3 2.6L14.6 5" fill="none" stroke="#555" stroke-width="1.2"/></svg><svg style="position:absolute;left:352px;top:6px" width="18" height="17" viewBox="0 0 18 17"><path d="M2.4 1.8c0-.7.5-1.1 1.2-1.1h10.8c.7 0 1.2.4 1.2 1.1v11.4H14.4v2.6h-2.8v-2.6H6.4v2.6H3.6v-2.6H2.4z" fill="#4a4a4a"/><rect x="4" y="2.4" width="10" height="5.2" fill="#f5f5f5"/><rect x="3.9" y="9.8" width="2.7" height="1.5" fill="#f5f5f5"/><rect x="11.4" y="9.8" width="2.7" height="1.5" fill="#f5f5f5"/><rect x="1" y="3.8" width="1.4" height="3.6" fill="#4a4a4a"/><rect x="15.6" y="3.8" width="1.4" height="3.6" fill="#4a4a4a"/></svg><svg class="i1" style="top:6px" width="15" height="15" viewBox="0 0 14 14"><g transform="translate(14 0) scale(-1 1)"><path d="M9.8 1c-1.9-.6-3.9.5-4.3 2.4c-.1.6-.1 1.2.1 1.7L1.3 9.4c-.7.7-.7 1.7 0 2.3c.6.7 1.7.7 2.3 0l4.3-4.3c.6.2 1.2.2 1.8.1c1.9-.5 3-2.4 2.4-4.3L10 5.3 8.3 4.9 7.8 3.1z" fill="#4a4a4a"/></g></svg><svg class="i2" style="top:6px" width="15" height="15" viewBox="0 0 15 15"><path d="M1 1h8v2.4H4.6v7.2H1z" fill="#4a4a4a"/><rect x="5.6" y="4.4" width="8.4" height="9.6" fill="#4a4a4a"/><path d="M7.4 8h4.8M7.4 10.8h4.8" stroke="#f5f5f5" stroke-width="1.3"/></svg><svg class="i3" style="top:7px" width="12" height="12" viewBox="0 0 12 12"><path d="M1.8 1.8l8.4 8.4M10.2 1.8l-8.4 8.4" stroke="#f62a1c" stroke-width="1.7"/></svg></div>
<div style="position:absolute;left:456px;top:28px;width:14px;height:605px;background:#f5f5f5"></div>
<div style="position:absolute;left:459px;top:34px;border:4px solid transparent;border-bottom:5px solid #444;border-top:0;width:0;height:0"></div>
<div style="position:absolute;left:459px;top:621px;border:4px solid transparent;border-top:5px solid #444;border-bottom:0;width:0;height:0"></div>
<div style="position:absolute;left:458px;top:482px;width:10px;height:47px;background:#c1c1c1"></div>
</div>
</div>
<div id="map">
<svg id="msvg" width="888" height="701" viewBox="476 36 888 701" style="position:absolute;left:0;top:0">
<defs><pattern id="dots" width="8" height="8" patternUnits="userSpaceOnUse"><rect x="2" y="4" width="2" height="2" fill="#9ebb9f"/></pattern><pattern id="hat" width="3" height="3" patternUnits="userSpaceOnUse" patternTransform="rotate(-50)"><rect width="3" height="1" fill="#b4b8d8"/></pattern></defs>
<rect x="476" y="36" width="888" height="701" fill="#f3f2ea"/>
<polygon points="554.1,35.8 583.2,35.8 583.2,43.2 574,52.8 566.7,53.7 565.8,64.9 555.2,62.6 556.4,47.8 552.9,43.2" fill="#f6ecca"/>
<polygon points="1312.4,141.7 1364.2,158.9 1364.2,192.1 1312.4,176.1" fill="#f6ecca"/>
<polygon points="607,521.5 685,545 665,620 593.6,597.7 598.7,574" fill="#e9ece8"/>
<polygon points="536.9,452.5 573.5,462.8 567.8,491.4 548.3,500.6 526.6,491.4" fill="#d3e4c9"/><polygon points="536.9,452.5 573.5,462.8 567.8,491.4 548.3,500.6 526.6,491.4" fill="url(#dots)"/>
<polygon points="787,350 1075,446.7 1356,542 1316,677 1075,596 797,500.6 750,486" fill="#d3e4c9"/><polygon points="787,350 1075,446.7 1356,542 1316,677 1075,596 797,500.6 750,486" fill="url(#dots)"/>
<polygon points="832,213.4 918,241 879,359 793,332.6" fill="#d3e4c9"/><polygon points="832,213.4 918,241 879,359 793,332.6" fill="url(#dots)"/>
<polygon points="775,540 796,547 762,651 741,645" fill="#d3e4c9"/><polygon points="775,540 796,547 762,651 741,645" fill="url(#dots)"/>
<polygon points="475,236 573,267.5 571,277.5 475,246" fill="#d3e4c9"/><polygon points="475,236 573,267.5 571,277.5 475,246" fill="url(#dots)"/>
<polygon points="594,274 762,328.5 759,338.5 590,284" fill="#d3e4c9"/><polygon points="594,274 762,328.5 759,338.5 590,284" fill="url(#dots)"/>
<polygon points="546,468.5 563.2,471.9 559.8,485.7 543.8,482.3" fill="#f3f2ea"/>
<polygon points="969.8,210 1029.4,210 1021.4,244.4 966.4,227.2" fill="url(#hat)"/>
<polygon points="938.9,312 1004.2,329.2 1003,333.8 936.6,317.7" fill="url(#hat)"/>
<polygon points="1222.8,258.1 1230.8,259.3 1194.2,375 1186.2,373.9" fill="url(#hat)"/>
<polygon points="1179.3,386 1187.3,386 1164.4,452.5 1157.5,451.3" fill="url(#hat)"/>
<g fill="none" stroke="#b98f86" stroke-width="0.9" stroke-dasharray="1.3 2.6">
<polyline points="516.3,109.6 621.7,134.8"/>
<polyline points="552.9,132.5 612.5,153.2"/>
<polyline points="633.1,93.6 603.3,210"/>
<polyline points="668.7,35.1 635.4,137.1"/>
<polyline points="717.9,36.3 740.9,43.2 744.3,50 775,59.2"/>
<polyline points="550.6,173.8 549.5,194.4 552.9,208.2"/>
<polyline points="587.3,161.2 607.9,166.9"/>
<polyline points="912.5,63.8 1004.2,93.6"/>
<polyline points="914.8,71.8 1004.2,101.6"/>
<polyline points="912.5,83.3 1001.9,109.6"/>
<polyline points="775,61.5 785.3,56.9 823.1,66.1"/>
<polyline points="802.5,36.3 843.8,47.8"/>
<polyline points="864.4,121.1 850.6,210"/>
<polyline points="902.2,36.3 843.8,210"/>
<polyline points="969.8,100.5 933.1,180.7 933.1,210"/>
<polyline points="811.7,185.3 802.5,162.3 775,125.7"/>
<polyline points="1204.5,36.3 1199.9,61.5 1188.4,78.7"/>
<polyline points="1244.6,36.3 1260.6,87.9"/>
<polyline points="607.9,214.6 635.4,276.5"/>
<polyline points="594.2,265 658.3,235.2"/>
<polyline points="550.6,210 564.4,232.9"/>
<polyline points="475,228.3 775,324.6"/>
<polyline points="578.1,304 775,368.1"/>
<polyline points="612.5,210 589.6,267.3"/>
<polyline points="594.2,210 571.3,267.3"/>
<polyline points="571.3,278.8 539.2,386"/>
<polyline points="582.7,301.7 557.5,386"/>
<polyline points="841.5,219.2 781.9,386"/>
<polyline points="882.7,362.4 843.8,386"/>
<polyline points="972.1,368.1 1029.4,347.5 1070.6,326.9"/>
<polyline points="1281.3,253.5 1352.3,317.7"/>
<polyline points="475,413.5 603.3,452.5"/>
<polyline points="475,435.3 603.3,474.2"/>
<polyline points="546,386 527.7,431.8"/>
<polyline points="523.1,461.6 493.3,562"/>
<polyline points="536.9,452.5 573.5,462.8 567.8,491.4 548.3,500.6 526.6,491.4 536.9,452.5"/>
<polyline points="546,468.5 563.2,471.9 559.8,485.7 543.8,482.3 546,468.5"/>
<polyline points="775,405.5 809.4,415.8 823.1,421.5 797.9,498.3 990.4,562"/>
<polyline points="859.8,386 808.2,415.8 788.8,415.8 775,532.7"/>
<polyline points="779.6,425 775,454.8 809.4,459.3"/>
<polyline points="797.9,498.3 781.9,562"/>
<polyline points="784.2,532.7 889.6,562"/>
<polyline points="1160.9,459.3 1141.5,562"/>
<polyline points="1364.2,523.5 1350,562"/>
<polyline points="492.2,570 660.6,622.7"/>
<polyline points="475,580.3 775,677.7"/>
<polyline points="747.7,564.3 727.1,649.1"/>
<polyline points="754.6,566.6 735.1,651.4"/>
<polyline points="726,660.5 690.4,738"/>
<polyline points="752.3,669.7 717.9,738"/>
<polyline points="734,685.8 715.6,738"/>
<polyline points="943.5,584.9 917.1,713.3"/>
<polyline points="958.3,591.8 940,637.6"/>
<polyline points="871.3,562 1075,623.9"/>
<polyline points="1047.7,619.3 1043.1,637.6"/>
<polyline points="775,676.6 903.3,717.8"/>
<polyline points="1143.8,562 1127.7,617"/>
<polyline points="1075,587.2 1315.6,669.7"/>
<polyline points="1127.7,649.1 1313.4,701.8"/>
<polyline points="1313.4,681.2 1299.6,738"/>
<polyline points="1350,564.3 1311.1,681.2"/>
</g>
<g fill="none" stroke="#bcc0dd" stroke-width="3.1" stroke-linejoin="round" stroke-linecap="round">
<polyline points="536.9,46.6 540.3,62.6 589.6,76.4 607.9,78.7 635.4,89 653.8,83.3 671,90.2 692.7,144 719.1,169.2 731.7,208.2"/>
<polyline points="633.1,137.1 656.1,139.4 679,192.1 669.8,210"/>
<polyline points="679,192.1 719.1,173.8 756.9,165.8 775,148.6"/>
<polyline points="759.2,79.8 775,111.9"/>
<polyline points="617.1,115.4 633.1,118.8"/>
<polyline points="475,55.8 484.2,61.5 479.6,86.7"/>
<polyline points="550.6,134.8 548.3,147.4 614.8,166.9"/>
<polyline points="548.3,147.4 536.9,179.5 552.9,183 563.2,153.2"/>
<polyline points="605.6,192.1 580.4,185.3 573.5,210"/>
<polyline points="475,125.7 497.9,130.3"/>
<polyline points="509.4,183 524.3,192.1 525.4,210"/>
<polyline points="503.6,34 509.4,45.5"/>
<polyline points="921.7,43.2 991.6,67.2 1000.7,40.9 1004.2,34"/>
<polyline points="992.7,68.4 1056.9,87.9 1072.9,47.8 1075,34"/>
<polyline points="1000.7,40.9 1045.4,54.6"/>
<polyline points="925.1,94.7 940,99.3 921.7,153.2 906.8,148.6 925.1,94.7"/>
<polyline points="775,122.2 788.8,118.8 809.4,118.8 828.9,125.7"/>
<polyline points="889.6,146.3 906.8,150.9 990.4,180.7 1004.2,185.3"/>
<polyline points="995,117.7 976.7,171.5"/>
<polyline points="910.2,153.2 889.6,210"/>
<polyline points="778.4,124.5 796.8,169.2"/>
<polyline points="875.8,203.6 935.4,210"/>
<polyline points="1102.5,34 1088.8,86.7"/>
<polyline points="1170.1,87.9 1194.2,79.8"/>
<polyline points="1292.7,36.3 1293.9,87.9"/>
<polyline points="1327.1,36.3 1327.1,47.8 1293.2,47.8"/>
<polyline points="1313.4,130.3 1327.1,111.9 1364.2,115.4"/>
<polyline points="1313.4,132.5 1364.2,146.3"/>
<polyline points="1312.4,180.7 1364.2,194.4"/>
<polyline points="1189.6,194.4 1191.9,210"/>
<polyline points="1075,199 1116.3,203.6 1116.3,210"/>
<polyline points="1116.3,202.5 1143.8,196.7 1171.3,210"/>
<polyline points="560.9,210 563.2,221.5 556.4,254.7"/>
<polyline points="669.8,210 658.3,229.5 682.4,283.3 676.7,294.8"/>
<polyline points="682.4,283.3 696.2,279.9 691.6,265"/>
<polyline points="696.2,279.9 705.3,301.7"/>
<polyline points="751.2,244.4 723.7,255.8 750,317.7"/>
<polyline points="736.3,210 775,299.4"/>
<polyline points="575.8,309.7 662.9,338.3 759.2,368.1 775,371.6"/>
<polyline points="599.9,320 575.8,386"/>
<polyline points="658.3,338.3 643.5,386"/>
<polyline points="674.4,345.2 660.6,386"/>
<polyline points="729.4,361.3 722.5,386"/>
<polyline points="759.2,368.1 750,386"/>
<polyline points="475,271.9 543.8,290.2 527.7,338.3 546,344.1"/>
<polyline points="522,289.1 507.1,338.3 475,384.2"/>
<polyline points="522,220.3 560.9,232.9"/>
<polyline points="831.2,211.1 921.7,239.8 879.3,361.3 882.7,362.4"/>
<polyline points="871.3,219.2 875.8,210 930.8,220.3 921.7,239.8"/>
<polyline points="1069.5,210 1070.6,237.5 1030.5,346.4 1043.1,364.7"/>
<polyline points="896.5,365.8 902.2,347.5 965.2,368.1 961.8,386"/>
<polyline points="965.2,368.1 976.7,371.6"/>
<polyline points="1075,317.7 1069.5,320 1075,338.3"/>
<polyline points="1050,386 1075,379.6"/>
<polyline points="775,210 793.3,244.4 800.2,244.4"/>
<polyline points="1112.8,210 1114,220.3"/>
<polyline points="1170.1,210 1228.6,231.8 1233.1,247.8 1222.8,257 1179.3,386"/>
<polyline points="1190.7,210 1187.3,271.9 1120.8,286.8 1124.3,305.1 1075,317.7"/>
<polyline points="1233.1,247.8 1282.4,251.3 1364.2,277.6"/>
<polyline points="1364.2,278.8 1329.4,270.7 1322.5,322.3 1272.1,307.4"/>
<polyline points="1075,334.9 1079.6,352.1 1135.7,336.1 1143.8,341.8 1156.4,342.9"/>
<polyline points="1079.6,352.1 1086.5,377.3 1075,381.9"/>
<polyline points="1352.3,320 1364.2,323.4"/>
<polyline points="1338.6,360.1 1364.2,368.1"/>
<polyline points="572.4,386 569,415.8 605.6,428.4 610.2,419.2 665.2,435.3 651.5,470.8 603.3,457"/>
<polyline points="605.6,428.4 599.9,452.5"/>
<polyline points="698.5,455.9 721.4,392.9"/>
<polyline points="665.2,435.3 698.5,455.9"/>
<polyline points="706.5,435.3 734,443.3 727.1,461.6"/>
<polyline points="637.7,386 636.6,396.3 658.3,403.2 664.1,386"/>
<polyline points="626.3,474.2 621.7,496 672.1,514.3 666.4,493.7"/>
<polyline points="475,438.7 488.8,443.3 483,482.3 507.1,490.3"/>
<polyline points="585,512.1 591.9,492.6"/>
<polyline points="502.5,553.3 555.2,562"/>
<polyline points="566.7,523.5 598.8,535 599.9,544.1"/>
<polyline points="717.9,560.2 738.6,562"/>
<polyline points="704.2,532.7 763.8,546.4"/>
<polyline points="1034,390.6 1029.4,403.2"/>
<polyline points="1034,390.6 1050,386"/>
<polyline points="1092.2,431.8 1096.8,407.8 1157.5,392.9 1158.7,396.3"/>
<polyline points="1177,386 1157.5,452.5"/>
<polyline points="1235.4,407.8 1215.9,400.9 1201.1,442.2 1273.2,467.4 1287,425 1311.1,408.9 1335.1,408.9 1319.1,454.8 1346.6,459.3 1364.2,411.2"/>
<polyline points="1237.7,457 1229.7,475.4"/>
<polyline points="532.3,562 587.3,576.9 590.7,562"/>
<polyline points="722.5,562 706.5,607.8 736.3,619.3 728.2,650.2"/>
<polyline points="704.2,609 672.1,599.8 664.1,628.5"/>
<polyline points="743.1,562 754.6,565.4"/>
<polyline points="551.8,627.3 520.8,615.9 504.8,613.6 496.8,643.4 676.7,697.2 685.8,722.4 704.2,727"/>
<polyline points="496.8,643.4 479.6,658.3 484.2,676.6 475,690.3"/>
<polyline points="532.3,653.7 524.3,678.9"/>
<polyline points="566.7,666.3 559.8,690.3"/>
<polyline points="605.6,678.9 596.5,701.8"/>
<polyline points="642.3,690.3 630.8,727"/>
<polyline points="676.7,697.2 665.2,731.6 649.2,738"/>
<polyline points="687,668.6 675.5,701.8"/>
<polyline points="520.8,699.5 633.1,731.6"/>
<polyline points="770.6,676.6 766.1,699.5"/>
<polyline points="777.3,667.4 814,564.3 913.7,597.5 905.6,623.9 879.3,699.5"/>
<polyline points="777.3,667.4 787.6,643.4 816.3,653.7"/>
<polyline points="828.9,622.7 866.7,635.3 856.4,667.4 883.9,675.4"/>
<polyline points="905.6,623.9 926.3,630.8 958.3,641.1 990.4,612.4"/>
<polyline points="958.3,641.1 976.7,643.4 991.6,647.9 1008.8,633 992.7,623.9 979,642.2"/>
<polyline points="991.6,647.9 984.7,659.4"/>
<polyline points="992.7,623.9 1075,650.2"/>
<polyline points="958.3,641.1 934.3,667.4"/>
<polyline points="1075,653.7 1011.1,714.4 977.8,705.2 946.9,713.3 940,738"/>
<polyline points="1011.1,686.9 989.3,707.5"/>
<polyline points="1050,681.2 1070.6,699.5 1036.3,738"/>
<polyline points="912.5,715.6 943.5,724.7"/>
<polyline points="875.8,706.4 866.7,738"/>
<polyline points="1075,650.2 1111.7,660.5 1117.4,637.6"/>
<polyline points="1111.7,660.5 1088.8,697.2 1133.4,711 1140.3,701.8 1169,708.7 1182.7,658.3 1127.7,637.6"/>
<polyline points="1175.8,692.6 1251.5,714.4 1256.1,706.4"/>
<polyline points="1251.5,714.4 1249.2,738"/>
<polyline points="1191.9,727 1194.2,738"/>
<polyline points="1327.1,694.9 1364.2,705.2"/>
<polyline points="1339.7,653.7 1364.2,660.5"/>
</g><g fill="none" stroke="#f6f6f2" stroke-width="1.8" stroke-linejoin="round" stroke-linecap="round">
<polyline points="536.9,46.6 540.3,62.6 589.6,76.4 607.9,78.7 635.4,89 653.8,83.3 671,90.2 692.7,144 719.1,169.2 731.7,208.2"/>
<polyline points="633.1,137.1 656.1,139.4 679,192.1 669.8,210"/>
<polyline points="679,192.1 719.1,173.8 756.9,165.8 775,148.6"/>
<polyline points="759.2,79.8 775,111.9"/>
<polyline points="617.1,115.4 633.1,118.8"/>
<polyline points="475,55.8 484.2,61.5 479.6,86.7"/>
<polyline points="550.6,134.8 548.3,147.4 614.8,166.9"/>
<polyline points="548.3,147.4 536.9,179.5 552.9,183 563.2,153.2"/>
<polyline points="605.6,192.1 580.4,185.3 573.5,210"/>
<polyline points="475,125.7 497.9,130.3"/>
<polyline points="509.4,183 524.3,192.1 525.4,210"/>
<polyline points="503.6,34 509.4,45.5"/>
<polyline points="921.7,43.2 991.6,67.2 1000.7,40.9 1004.2,34"/>
<polyline points="992.7,68.4 1056.9,87.9 1072.9,47.8 1075,34"/>
<polyline points="1000.7,40.9 1045.4,54.6"/>
<polyline points="925.1,94.7 940,99.3 921.7,153.2 906.8,148.6 925.1,94.7"/>
<polyline points="775,122.2 788.8,118.8 809.4,118.8 828.9,125.7"/>
<polyline points="889.6,146.3 906.8,150.9 990.4,180.7 1004.2,185.3"/>
<polyline points="995,117.7 976.7,171.5"/>
<polyline points="910.2,153.2 889.6,210"/>
<polyline points="778.4,124.5 796.8,169.2"/>
<polyline points="875.8,203.6 935.4,210"/>
<polyline points="1102.5,34 1088.8,86.7"/>
<polyline points="1170.1,87.9 1194.2,79.8"/>
<polyline points="1292.7,36.3 1293.9,87.9"/>
<polyline points="1327.1,36.3 1327.1,47.8 1293.2,47.8"/>
<polyline points="1313.4,130.3 1327.1,111.9 1364.2,115.4"/>
<polyline points="1313.4,132.5 1364.2,146.3"/>
<polyline points="1312.4,180.7 1364.2,194.4"/>
<polyline points="1189.6,194.4 1191.9,210"/>
<polyline points="1075,199 1116.3,203.6 1116.3,210"/>
<polyline points="1116.3,202.5 1143.8,196.7 1171.3,210"/>
<polyline points="560.9,210 563.2,221.5 556.4,254.7"/>
<polyline points="669.8,210 658.3,229.5 682.4,283.3 676.7,294.8"/>
<polyline points="682.4,283.3 696.2,279.9 691.6,265"/>
<polyline points="696.2,279.9 705.3,301.7"/>
<polyline points="751.2,244.4 723.7,255.8 750,317.7"/>
<polyline points="736.3,210 775,299.4"/>
<polyline points="575.8,309.7 662.9,338.3 759.2,368.1 775,371.6"/>
<polyline points="599.9,320 575.8,386"/>
<polyline points="658.3,338.3 643.5,386"/>
<polyline points="674.4,345.2 660.6,386"/>
<polyline points="729.4,361.3 722.5,386"/>
<polyline points="759.2,368.1 750,386"/>
<polyline points="475,271.9 543.8,290.2 527.7,338.3 546,344.1"/>
<polyline points="522,289.1 507.1,338.3 475,384.2"/>
<polyline points="522,220.3 560.9,232.9"/>
<polyline points="831.2,211.1 921.7,239.8 879.3,361.3 882.7,362.4"/>
<polyline points="871.3,219.2 875.8,210 930.8,220.3 921.7,239.8"/>
<polyline points="1069.5,210 1070.6,237.5 1030.5,346.4 1043.1,364.7"/>
<polyline points="896.5,365.8 902.2,347.5 965.2,368.1 961.8,386"/>
<polyline points="965.2,368.1 976.7,371.6"/>
<polyline points="1075,317.7 1069.5,320 1075,338.3"/>
<polyline points="1050,386 1075,379.6"/>
<polyline points="775,210 793.3,244.4 800.2,244.4"/>
<polyline points="1112.8,210 1114,220.3"/>
<polyline points="1170.1,210 1228.6,231.8 1233.1,247.8 1222.8,257 1179.3,386"/>
<polyline points="1190.7,210 1187.3,271.9 1120.8,286.8 1124.3,305.1 1075,317.7"/>
<polyline points="1233.1,247.8 1282.4,251.3 1364.2,277.6"/>
<polyline points="1364.2,278.8 1329.4,270.7 1322.5,322.3 1272.1,307.4"/>
<polyline points="1075,334.9 1079.6,352.1 1135.7,336.1 1143.8,341.8 1156.4,342.9"/>
<polyline points="1079.6,352.1 1086.5,377.3 1075,381.9"/>
<polyline points="1352.3,320 1364.2,323.4"/>
<polyline points="1338.6,360.1 1364.2,368.1"/>
<polyline points="572.4,386 569,415.8 605.6,428.4 610.2,419.2 665.2,435.3 651.5,470.8 603.3,457"/>
<polyline points="605.6,428.4 599.9,452.5"/>
<polyline points="698.5,455.9 721.4,392.9"/>
<polyline points="665.2,435.3 698.5,455.9"/>
<polyline points="706.5,435.3 734,443.3 727.1,461.6"/>
<polyline points="637.7,386 636.6,396.3 658.3,403.2 664.1,386"/>
<polyline points="626.3,474.2 621.7,496 672.1,514.3 666.4,493.7"/>
<polyline points="475,438.7 488.8,443.3 483,482.3 507.1,490.3"/>
<polyline points="585,512.1 591.9,492.6"/>
<polyline points="502.5,553.3 555.2,562"/>
<polyline points="566.7,523.5 598.8,535 599.9,544.1"/>
<polyline points="717.9,560.2 738.6,562"/>
<polyline points="704.2,532.7 763.8,546.4"/>
<polyline points="1034,390.6 1029.4,403.2"/>
<polyline points="1034,390.6 1050,386"/>
<polyline points="1092.2,431.8 1096.8,407.8 1157.5,392.9 1158.7,396.3"/>
<polyline points="1177,386 1157.5,452.5"/>
<polyline points="1235.4,407.8 1215.9,400.9 1201.1,442.2 1273.2,467.4 1287,425 1311.1,408.9 1335.1,408.9 1319.1,454.8 1346.6,459.3 1364.2,411.2"/>
<polyline points="1237.7,457 1229.7,475.4"/>
<polyline points="532.3,562 587.3,576.9 590.7,562"/>
<polyline points="722.5,562 706.5,607.8 736.3,619.3 728.2,650.2"/>
<polyline points="704.2,609 672.1,599.8 664.1,628.5"/>
<polyline points="743.1,562 754.6,565.4"/>
<polyline points="551.8,627.3 520.8,615.9 504.8,613.6 496.8,643.4 676.7,697.2 685.8,722.4 704.2,727"/>
<polyline points="496.8,643.4 479.6,658.3 484.2,676.6 475,690.3"/>
<polyline points="532.3,653.7 524.3,678.9"/>
<polyline points="566.7,666.3 559.8,690.3"/>
<polyline points="605.6,678.9 596.5,701.8"/>
<polyline points="642.3,690.3 630.8,727"/>
<polyline points="676.7,697.2 665.2,731.6 649.2,738"/>
<polyline points="687,668.6 675.5,701.8"/>
<polyline points="520.8,699.5 633.1,731.6"/>
<polyline points="770.6,676.6 766.1,699.5"/>
<polyline points="777.3,667.4 814,564.3 913.7,597.5 905.6,623.9 879.3,699.5"/>
<polyline points="777.3,667.4 787.6,643.4 816.3,653.7"/>
<polyline points="828.9,622.7 866.7,635.3 856.4,667.4 883.9,675.4"/>
<polyline points="905.6,623.9 926.3,630.8 958.3,641.1 990.4,612.4"/>
<polyline points="958.3,641.1 976.7,643.4 991.6,647.9 1008.8,633 992.7,623.9 979,642.2"/>
<polyline points="991.6,647.9 984.7,659.4"/>
<polyline points="992.7,623.9 1075,650.2"/>
<polyline points="958.3,641.1 934.3,667.4"/>
<polyline points="1075,653.7 1011.1,714.4 977.8,705.2 946.9,713.3 940,738"/>
<polyline points="1011.1,686.9 989.3,707.5"/>
<polyline points="1050,681.2 1070.6,699.5 1036.3,738"/>
<polyline points="912.5,715.6 943.5,724.7"/>
<polyline points="875.8,706.4 866.7,738"/>
<polyline points="1075,650.2 1111.7,660.5 1117.4,637.6"/>
<polyline points="1111.7,660.5 1088.8,697.2 1133.4,711 1140.3,701.8 1169,708.7 1182.7,658.3 1127.7,637.6"/>
<polyline points="1175.8,692.6 1251.5,714.4 1256.1,706.4"/>
<polyline points="1251.5,714.4 1249.2,738"/>
<polyline points="1191.9,727 1194.2,738"/>
<polyline points="1327.1,694.9 1364.2,705.2"/>
<polyline points="1339.7,653.7 1364.2,660.5"/>
</g>
<g fill="none" stroke="#b3b6d6" stroke-linejoin="round">
<polyline points="475,98.5 622,146" stroke-width="6"/>
<polyline points="475,90 624,138" stroke-width="10.4"/>
<polyline points="475,232 775,328 800,336" stroke-width="9.4"/>
<polyline points="475,250 775,347.5 790,352" stroke-width="9.4"/>
<polyline points="786,334 945,386 1075,430 1366,524" stroke-width="6.9"/>
<polyline points="919,30 860,221" stroke-width="9.4"/>
<polyline points="475,418.5 695,485.5 789,518.5 890,553.5 1075,611 1366,709.5" stroke-width="10.700000000000001"/>
<polyline points="778.5,520 760.5,562 730.5,658" stroke-width="10"/>
<polyline points="475,573.5 775,669.7 908,714.4" stroke-width="7.4"/>
<polyline points="954.3,580 903,740" stroke-width="6"/>
<polyline points="1368,524 1357,562 1308,740" stroke-width="9.4"/>
<polyline points="665,28 606.2,200 587,263 538.6,400 512,490 490.8,562 468,640" stroke-width="8.9"/>
<polyline points="745,476 789,515" stroke-width="9.4"/>
<polyline points="888,30 821,210 783,330 756,420 731,500 722,528" stroke-width="20.4"/>
</g><g fill="none" stroke="#ffffff" stroke-linejoin="round">
<polyline points="475,98.5 622,146" stroke-width="4.6"/>
<polyline points="475,90 624,138" stroke-width="9"/>
<polyline points="475,232 775,328 800,336" stroke-width="8"/>
<polyline points="475,250 775,347.5 790,352" stroke-width="8"/>
<polyline points="786,334 945,386 1075,430 1366,524" stroke-width="5.5"/>
<polyline points="919,30 860,221" stroke-width="8"/>
<polyline points="475,418.5 695,485.5 789,518.5 890,553.5 1075,611 1366,709.5" stroke-width="9.3"/>
<polyline points="778.5,520 760.5,562 730.5,658" stroke-width="8.6"/>
<polyline points="475,573.5 775,669.7 908,714.4" stroke-width="6"/>
<polyline points="954.3,580 903,740" stroke-width="4.6"/>
<polyline points="1368,524 1357,562 1308,740" stroke-width="8"/>
<polyline points="665,28 606.2,200 587,263 538.6,400 512,490 490.8,562 468,640" stroke-width="7.5"/>
<polyline points="745,476 789,515" stroke-width="8"/>
<polyline points="888,30 821,210 783,330 756,420 731,500 722,528" stroke-width="19"/>
</g><g fill="none" stroke="#a4a8d0" stroke-width="1.3">
<polyline points="888,30 821,210 783,330 756,420 731,500 722,528"/>
</g>
<g fill="none" stroke="#7b7fb0" stroke-width="0.9">
<path d="M605.1 134.2L594.7 130.8M598 130.1L594.7 130.8L596.9 133.3"/>
<path d="M513.3 116L523.7 119.4M520.4 120.1L523.7 119.4L521.5 116.9"/>
<path d="M842.1 129.6L838.5 140M837.9 136.7L838.5 140L841.1 137.8"/>
<path d="M511.1 242.6L500.7 239.2M504 238.5L500.7 239.2L502.9 241.7"/>
<path d="M634.9 283.9L624.5 280.5M627.8 279.8L624.5 280.5L626.7 283"/>
<path d="M657.7 312.6L668.1 316M664.8 316.7L668.1 316L665.9 313.5"/>
<path d="M756.4 324L746 320.6M749.3 319.9L746 320.6L748.2 323.1"/>
<path d="M801.9 250.6L798.5 261M797.8 257.7L798.5 261L801 258.8"/>
<path d="M810 264.5L813.4 254.1M814.1 257.4L813.4 254.1L810.9 256.3"/>
</g>
<g fill="#c4c3b9">
<polygon points="512.9,37.3 540.9,42.4 534.7,58.4 507.2,51.1" stroke="#c4c3b9" stroke-width="0.5"/>
<polygon points="515.1,35.1 543.1,40.2 540.9,42.4 512.9,37.3"/>
<polygon points="543.1,40.2 536.9,56.2 534.7,58.4 540.9,42.4"/>
<polygon points="536.9,56.2 509.4,48.9 507.2,51.1 534.7,58.4"/>
<polygon points="509.4,48.9 515.1,35.1 512.9,37.3 507.2,51.1"/>
<polygon points="472.8,39.6 480.8,37.3 482.4,43.1 472.8,47.7" stroke="#c4c3b9" stroke-width="0.5"/>
<polygon points="475,37.4 483,35.1 480.8,37.3 472.8,39.6"/>
<polygon points="483,35.1 484.6,40.9 482.4,43.1 480.8,37.3"/>
<polygon points="484.6,40.9 475,45.5 472.8,47.7 482.4,43.1"/>
<polygon points="475,45.5 475,37.4 472.8,39.6 472.8,47.7"/>
<polygon points="491.1,86.1 546.1,98.7 548.5,88.3 493.5,75.7" stroke="#c4c3b9" stroke-width="0.5"/>
<polygon points="493.3,83.9 548.3,96.5 546.1,98.7 491.1,86.1"/>
<polygon points="548.3,96.5 550.7,86.1 548.5,88.3 546.1,98.7"/>
<polygon points="550.7,86.1 495.7,73.5 493.5,75.7 548.5,88.3"/>
<polygon points="495.7,73.5 493.3,83.9 491.1,86.1 493.5,75.7"/>
<polygon points="601.1,80.9 608,82 609.2,85.5 616,87.1 618.3,84.3 622.9,85.5 624.1,105 620.6,111.8 610.3,114.1 605.7,116.4 602.3,115.3 600,119.9 587.4,116.4 593.1,102.7 597.7,90.1" stroke="#c4c3b9" stroke-width="0.5"/>
<polygon points="603.3,78.7 610.2,79.8 608,82 601.1,80.9"/>
<polygon points="610.2,79.8 611.4,83.3 609.2,85.5 608,82"/>
<polygon points="611.4,83.3 618.2,84.9 616,87.1 609.2,85.5"/>
<polygon points="618.2,84.9 620.5,82.1 618.3,84.3 616,87.1"/>
<polygon points="620.5,82.1 625.1,83.3 622.9,85.5 618.3,84.3"/>
<polygon points="625.1,83.3 626.3,102.8 624.1,105 622.9,85.5"/>
<polygon points="626.3,102.8 622.8,109.6 620.6,111.8 624.1,105"/>
<polygon points="622.8,109.6 612.5,111.9 610.3,114.1 620.6,111.8"/>
<polygon points="612.5,111.9 607.9,114.2 605.7,116.4 610.3,114.1"/>
<polygon points="607.9,114.2 604.5,113.1 602.3,115.3 605.7,116.4"/>
<polygon points="604.5,113.1 602.2,117.7 600,119.9 602.3,115.3"/>
<polygon points="602.2,117.7 589.6,114.2 587.4,116.4 600,119.9"/>
<polygon points="589.6,114.2 595.3,100.5 593.1,102.7 587.4,116.4"/>
<polygon points="595.3,100.5 599.9,87.9 597.7,90.1 593.1,102.7"/>
<polygon points="599.9,87.9 603.3,78.7 601.1,80.9 597.7,90.1"/>
<polygon points="659.7,99.6 679.6,150.5 690,146.5 670.1,95.6" stroke="#c4c3b9" stroke-width="0.5"/>
<polygon points="661.9,97.4 681.8,148.3 679.6,150.5 659.7,99.6"/>
<polygon points="681.8,148.3 692.2,144.3 690,146.5 679.6,150.5"/>
<polygon points="692.2,144.3 672.3,93.4 670.1,95.6 690,146.5"/>
<polygon points="672.3,93.4 661.9,97.4 659.7,99.6 670.1,95.6"/>
<polygon points="720.3,129 743.2,116.9 747.4,127.9 726,140.5" stroke="#c4c3b9" stroke-width="0.5"/>
<polygon points="722.5,126.8 745.4,114.7 743.2,116.9 720.3,129"/>
<polygon points="745.4,114.7 749.6,125.7 747.4,127.9 743.2,116.9"/>
<polygon points="749.6,125.7 728.2,138.3 726,140.5 747.4,127.9"/>
<polygon points="728.2,138.3 722.5,126.8 720.3,129 726,140.5"/>
<polygon points="700.8,137.5 711.2,138.2 706.6,145.1 698.5,143.9" stroke="#c4c3b9" stroke-width="0.5"/>
<polygon points="703,135.3 713.4,136 711.2,138.2 700.8,137.5"/>
<polygon points="713.4,136 708.8,142.9 706.6,145.1 711.2,138.2"/>
<polygon points="708.8,142.9 700.7,141.7 698.5,143.9 706.6,145.1"/>
<polygon points="700.7,141.7 703,135.3 700.8,137.5 698.5,143.9"/>
<polygon points="643.2,149.6 665,198.8 674.8,194.4 653,145.2" stroke="#c4c3b9" stroke-width="0.5"/>
<polygon points="645.4,147.4 667.2,196.6 665,198.8 643.2,149.6"/>
<polygon points="667.2,196.6 677,192.2 674.8,194.4 665,198.8"/>
<polygon points="677,192.2 655.2,143 653,145.2 674.8,194.4"/>
<polygon points="655.2,143 645.4,147.4 643.2,149.6 653,145.2"/>
<polygon points="536.5,128.6 523.2,172.1 533.4,175.3 546.7,131.8" stroke="#c4c3b9" stroke-width="0.5"/>
<polygon points="538.7,126.4 525.4,169.9 523.2,172.1 536.5,128.6"/>
<polygon points="525.4,169.9 535.6,173.1 533.4,175.3 523.2,172.1"/>
<polygon points="535.6,173.1 548.9,129.6 546.7,131.8 533.4,175.3"/>
<polygon points="548.9,129.6 538.7,126.4 536.5,128.6 546.7,131.8"/>
<polygon points="575.5,153.6 604.1,162.8 607.3,152.6 578.7,143.4" stroke="#c4c3b9" stroke-width="0.5"/>
<polygon points="577.7,151.4 606.3,160.6 604.1,162.8 575.5,153.6"/>
<polygon points="606.3,160.6 609.5,150.4 607.3,152.6 604.1,162.8"/>
<polygon points="609.5,150.4 580.9,141.2 578.7,143.4 607.3,152.6"/>
<polygon points="580.9,141.2 577.7,151.4 575.5,153.6 578.7,143.4"/>
<polygon points="565.8,156.2 553,198.6 563.2,201.6 576,159.2" stroke="#c4c3b9" stroke-width="0.5"/>
<polygon points="568,154 555.2,196.4 553,198.6 565.8,156.2"/>
<polygon points="555.2,196.4 565.4,199.4 563.2,201.6 553,198.6"/>
<polygon points="565.4,199.4 578.2,157 576,159.2 563.2,201.6"/>
<polygon points="578.2,157 568,154 565.8,156.2 576,159.2"/>
<polygon points="718,165 724.9,164.1 726.7,169.1 719.9,171" stroke="#c4c3b9" stroke-width="0.5"/>
<polygon points="720.2,162.8 727.1,161.9 724.9,164.1 718,165"/>
<polygon points="727.1,161.9 728.9,166.9 726.7,169.1 724.9,164.1"/>
<polygon points="728.9,166.9 722.1,168.8 719.9,171 726.7,169.1"/>
<polygon points="722.1,168.8 720.2,162.8 718,165 719.9,171"/>
<polygon points="719.8,173.4 732.4,207.3 740.4,204.3 727.8,170.4" stroke="#c4c3b9" stroke-width="0.5"/>
<polygon points="722,171.2 734.6,205.1 732.4,207.3 719.8,173.4"/>
<polygon points="734.6,205.1 742.6,202.1 740.4,204.3 732.4,207.3"/>
<polygon points="742.6,202.1 730,168.2 727.8,170.4 740.4,204.3"/>
<polygon points="730,168.2 722,171.2 719.8,173.4 727.8,170.4"/>
<polygon points="500.3,121 514.1,123.3 509.5,134.7 498,132.5" stroke="#c4c3b9" stroke-width="0.5"/>
<polygon points="502.5,118.8 516.3,121.1 514.1,123.3 500.3,121"/>
<polygon points="516.3,121.1 511.7,132.5 509.5,134.7 514.1,123.3"/>
<polygon points="511.7,132.5 500.2,130.3 498,132.5 509.5,134.7"/>
<polygon points="500.2,130.3 502.5,118.8 500.3,121 498,132.5"/>
<polygon points="476.2,166.8 483.1,168 479.7,174.9 473.9,173.7" stroke="#c4c3b9" stroke-width="0.5"/>
<polygon points="478.4,164.6 485.3,165.8 483.1,168 476.2,166.8"/>
<polygon points="485.3,165.8 481.9,172.7 479.7,174.9 483.1,168"/>
<polygon points="481.9,172.7 476.1,171.5 473.9,173.7 479.7,174.9"/>
<polygon points="476.1,171.5 478.4,164.6 476.2,166.8 473.9,173.7"/>
<polygon points="491.1,168 500.3,169.1 496.9,173.7 488.8,172.6" stroke="#c4c3b9" stroke-width="0.5"/>
<polygon points="493.3,165.8 502.5,166.9 500.3,169.1 491.1,168"/>
<polygon points="502.5,166.9 499.1,171.5 496.9,173.7 500.3,169.1"/>
<polygon points="499.1,171.5 491,170.4 488.8,172.6 496.9,173.7"/>
<polygon points="491,170.4 493.3,165.8 491.1,168 488.8,172.6"/>
<polygon points="489.1,161.9 499.4,164.9 501.2,158.7 490.9,155.7" stroke="#c4c3b9" stroke-width="0.5"/>
<polygon points="491.3,159.7 501.6,162.7 499.4,164.9 489.1,161.9"/>
<polygon points="501.6,162.7 503.4,156.5 501.2,158.7 499.4,164.9"/>
<polygon points="503.4,156.5 493.1,153.5 490.9,155.7 501.2,158.7"/>
<polygon points="493.1,153.5 491.3,159.7 489.1,161.9 490.9,155.7"/>
<polygon points="766.6,79.2 779.6,118.1 789.8,114.7 776.8,75.8" stroke="#c4c3b9" stroke-width="0.5"/>
<polygon points="768.8,77 781.8,115.9 779.6,118.1 766.6,79.2"/>
<polygon points="781.8,115.9 792,112.5 789.8,114.7 779.6,118.1"/>
<polygon points="792,112.5 779,73.6 776.8,75.8 789.8,114.7"/>
<polygon points="779,73.6 768.8,77 766.6,79.2 776.8,75.8"/>
<polygon points="822.9,92 813.7,121.8 823.5,124.8 832.7,95" stroke="#c4c3b9" stroke-width="0.5"/>
<polygon points="825.1,89.8 815.9,119.6 813.7,121.8 822.9,92"/>
<polygon points="815.9,119.6 825.7,122.6 823.5,124.8 813.7,121.8"/>
<polygon points="825.7,122.6 834.9,92.8 832.7,95 823.5,124.8"/>
<polygon points="834.9,92.8 825.1,89.8 822.9,92 832.7,95"/>
<polygon points="785,127.5 799.9,166.4 809.9,162.6 795,123.7" stroke="#c4c3b9" stroke-width="0.5"/>
<polygon points="787.2,125.3 802.1,164.2 799.9,166.4 785,127.5"/>
<polygon points="802.1,164.2 812.1,160.4 809.9,162.6 799.9,166.4"/>
<polygon points="812.1,160.4 797.2,121.5 795,123.7 809.9,162.6"/>
<polygon points="797.2,121.5 787.2,125.3 785,127.5 795,123.7"/>
<polygon points="765,165.5 783.3,212.5 794.3,208.3 776,161.3" stroke="#c4c3b9" stroke-width="0.5"/>
<polygon points="767.2,163.3 785.5,210.3 783.3,212.5 765,165.5"/>
<polygon points="785.5,210.3 796.5,206.1 794.3,208.3 783.3,212.5"/>
<polygon points="796.5,206.1 778.2,159.1 776,161.3 794.3,208.3"/>
<polygon points="778.2,159.1 767.2,163.3 765,165.5 776,161.3"/>
<polygon points="942.8,100 927.9,153.9 938.5,156.9 953.4,103" stroke="#c4c3b9" stroke-width="0.5"/>
<polygon points="945,97.8 930.1,151.7 927.9,153.9 942.8,100"/>
<polygon points="930.1,151.7 940.7,154.7 938.5,156.9 927.9,153.9"/>
<polygon points="940.7,154.7 955.6,100.8 953.4,103 938.5,156.9"/>
<polygon points="955.6,100.8 945,97.8 942.8,100 953.4,103"/>
<polygon points="977.2,111.3 958.9,166.3 969.5,169.7 987.8,114.7" stroke="#c4c3b9" stroke-width="0.5"/>
<polygon points="979.4,109.1 961.1,164.1 958.9,166.3 977.2,111.3"/>
<polygon points="961.1,164.1 971.7,167.5 969.5,169.7 958.9,166.3"/>
<polygon points="971.7,167.5 990,112.5 987.8,114.7 969.5,169.7"/>
<polygon points="990,112.5 979.4,109.1 977.2,111.3 987.8,114.7"/>
<polygon points="889.4,152.6 875.6,195 885.4,198.2 899.2,155.8" stroke="#c4c3b9" stroke-width="0.5"/>
<polygon points="891.6,150.4 877.8,192.8 875.6,195 889.4,152.6"/>
<polygon points="877.8,192.8 887.6,196 885.4,198.2 875.6,195"/>
<polygon points="887.6,196 901.4,153.6 899.2,155.8 885.4,198.2"/>
<polygon points="901.4,153.6 891.6,150.4 889.4,152.6 899.2,155.8"/>
<polygon points="951.1,48.2 991.2,60.8 994.4,50.6 954.3,38" stroke="#c4c3b9" stroke-width="0.5"/>
<polygon points="953.3,46 993.4,58.6 991.2,60.8 951.1,48.2"/>
<polygon points="993.4,58.6 996.6,48.4 994.4,50.6 991.2,60.8"/>
<polygon points="996.6,48.4 956.5,35.8 954.3,38 994.4,50.6"/>
<polygon points="956.5,35.8 953.3,46 951.1,48.2 954.3,38"/>
<polygon points="1002.7,59 1049.7,72.7 1052.9,61.5 1005.9,47.8" stroke="#c4c3b9" stroke-width="0.5"/>
<polygon points="1004.9,56.8 1051.9,70.5 1049.7,72.7 1002.7,59"/>
<polygon points="1051.9,70.5 1055.1,59.3 1052.9,61.5 1049.7,72.7"/>
<polygon points="1055.1,59.3 1008.1,45.6 1005.9,47.8 1052.9,61.5"/>
<polygon points="1008.1,45.6 1004.9,56.8 1002.7,59 1005.9,47.8"/>
<polygon points="1049,39 1060.4,37.3 1059.3,43.1 1051.3,44.2" stroke="#c4c3b9" stroke-width="0.5"/>
<polygon points="1051.2,36.8 1062.6,35.1 1060.4,37.3 1049,39"/>
<polygon points="1062.6,35.1 1061.5,40.9 1059.3,43.1 1060.4,37.3"/>
<polygon points="1061.5,40.9 1053.5,42 1051.3,44.2 1059.3,43.1"/>
<polygon points="1053.5,42 1051.2,36.8 1049,39 1051.3,44.2"/>
<polygon points="951.1,184.2 941.8,215.5 951.8,218.5 961.1,187.2" stroke="#c4c3b9" stroke-width="0.5"/>
<polygon points="953.3,182 944,213.3 941.8,215.5 951.1,184.2"/>
<polygon points="944,213.3 954,216.3 951.8,218.5 941.8,215.5"/>
<polygon points="954,216.3 963.3,185 961.1,187.2 951.8,218.5"/>
<polygon points="963.3,185 953.3,182 951.1,184.2 961.1,187.2"/>
<polygon points="1087.9,34.3 1073,76.7 1084,80.5 1098.9,38.1" stroke="#c4c3b9" stroke-width="0.5"/>
<polygon points="1090.1,32.1 1075.2,74.5 1073,76.7 1087.9,34.3"/>
<polygon points="1075.2,74.5 1086.2,78.3 1084,80.5 1073,76.7"/>
<polygon points="1086.2,78.3 1101.1,35.9 1098.9,38.1 1084,80.5"/>
<polygon points="1101.1,35.9 1090.1,32.1 1087.9,34.3 1098.9,38.1"/>
<polygon points="1170.2,63.7 1195.4,58 1198.4,67.1 1173,74.7" stroke="#c4c3b9" stroke-width="0.5"/>
<polygon points="1172.4,61.5 1197.6,55.8 1195.4,58 1170.2,63.7"/>
<polygon points="1197.6,55.8 1200.6,64.9 1198.4,67.1 1195.4,58"/>
<polygon points="1200.6,64.9 1175.2,72.5 1173,74.7 1198.4,67.1"/>
<polygon points="1175.2,72.5 1172.4,61.5 1170.2,63.7 1173,74.7"/>
<polygon points="1213.1,79.3 1223.6,78.6 1224.1,91.2 1213.1,91.2" stroke="#c4c3b9" stroke-width="0.5"/>
<polygon points="1215.3,77.1 1225.8,76.4 1223.6,78.6 1213.1,79.3"/>
<polygon points="1225.8,76.4 1226.3,89 1224.1,91.2 1223.6,78.6"/>
<polygon points="1226.3,89 1215.3,89 1213.1,91.2 1224.1,91.2"/>
<polygon points="1215.3,89 1215.3,77.1 1213.1,79.3 1213.1,91.2"/>
<polygon points="1235.5,79.3 1245.1,78.6 1245.8,91.2 1236,91.2" stroke="#c4c3b9" stroke-width="0.5"/>
<polygon points="1237.7,77.1 1247.3,76.4 1245.1,78.6 1235.5,79.3"/>
<polygon points="1247.3,76.4 1248,89 1245.8,91.2 1245.1,78.6"/>
<polygon points="1248,89 1238.2,89 1236,91.2 1245.8,91.2"/>
<polygon points="1238.2,89 1237.7,77.1 1235.5,79.3 1236,91.2"/>
<polygon points="1302,52.2 1322.6,50 1323.8,59.1 1313.4,60.3 1314.6,75.2 1323.8,76.3 1323.8,87.8 1280.2,86.6 1279.1,78.6 1288.2,75.2 1306.6,74 1306.6,61.4 1302,60.3" stroke="#c4c3b9" stroke-width="0.5"/>
<polygon points="1304.2,50 1324.8,47.8 1322.6,50 1302,52.2"/>
<polygon points="1324.8,47.8 1326,56.9 1323.8,59.1 1322.6,50"/>
<polygon points="1326,56.9 1315.6,58.1 1313.4,60.3 1323.8,59.1"/>
<polygon points="1315.6,58.1 1316.8,73 1314.6,75.2 1313.4,60.3"/>
<polygon points="1316.8,73 1326,74.1 1323.8,76.3 1314.6,75.2"/>
<polygon points="1326,74.1 1326,85.6 1323.8,87.8 1323.8,76.3"/>
<polygon points="1326,85.6 1282.4,84.4 1280.2,86.6 1323.8,87.8"/>
<polygon points="1282.4,84.4 1281.3,76.4 1279.1,78.6 1280.2,86.6"/>
<polygon points="1281.3,76.4 1290.4,73 1288.2,75.2 1279.1,78.6"/>
<polygon points="1290.4,73 1308.8,71.8 1306.6,74 1288.2,75.2"/>
<polygon points="1308.8,71.8 1308.8,59.2 1306.6,61.4 1306.6,74"/>
<polygon points="1308.8,59.2 1304.2,58.1 1302,60.3 1306.6,61.4"/>
<polygon points="1304.2,58.1 1304.2,50 1302,52.2 1302,60.3"/>
<polygon points="1330.6,115.3 1362,124.4 1362,138.2 1327.7,127.9" stroke="#c4c3b9" stroke-width="0.5"/>
<polygon points="1332.8,113.1 1364.2,122.2 1362,124.4 1330.6,115.3"/>
<polygon points="1364.2,122.2 1364.2,136 1362,138.2 1362,124.4"/>
<polygon points="1364.2,136 1329.9,125.7 1327.7,127.9 1362,138.2"/>
<polygon points="1329.9,125.7 1332.8,113.1 1330.6,115.3 1327.7,127.9"/>
<polygon points="1214.9,200.1 1243.5,201.2 1244.7,206.9 1256.1,207.6 1257.3,201.2 1260.7,201.2 1260.7,212.2 1212.6,212.2" stroke="#c4c3b9" stroke-width="0.5"/>
<polygon points="1217.1,197.9 1245.7,199 1243.5,201.2 1214.9,200.1"/>
<polygon points="1245.7,199 1246.9,204.7 1244.7,206.9 1243.5,201.2"/>
<polygon points="1246.9,204.7 1258.3,205.4 1256.1,207.6 1244.7,206.9"/>
<polygon points="1258.3,205.4 1259.5,199 1257.3,201.2 1256.1,207.6"/>
<polygon points="1259.5,199 1262.9,199 1260.7,201.2 1257.3,201.2"/>
<polygon points="1262.9,199 1262.9,210 1260.7,212.2 1260.7,201.2"/>
<polygon points="1262.9,210 1214.8,210 1212.6,212.2 1260.7,212.2"/>
<polygon points="1214.8,210 1217.1,197.9 1214.9,200.1 1212.6,212.2"/>
<polygon points="581.1,191.2 565.1,245.1 575.3,248.1 591.3,194.2" stroke="#c4c3b9" stroke-width="0.5"/>
<polygon points="583.3,189 567.3,242.9 565.1,245.1 581.1,191.2"/>
<polygon points="567.3,242.9 577.5,245.9 575.3,248.1 565.1,245.1"/>
<polygon points="577.5,245.9 593.5,192 591.3,194.2 575.3,248.1"/>
<polygon points="593.5,192 583.3,189 581.1,191.2 591.3,194.2"/>
<polygon points="628.2,193.5 644.3,234.7 654.3,230.9 638.2,189.7" stroke="#c4c3b9" stroke-width="0.5"/>
<polygon points="630.4,191.3 646.5,232.5 644.3,234.7 628.2,193.5"/>
<polygon points="646.5,232.5 656.5,228.7 654.3,230.9 644.3,234.7"/>
<polygon points="656.5,228.7 640.4,187.5 638.2,189.7 654.3,230.9"/>
<polygon points="640.4,187.5 630.4,191.3 628.2,193.5 638.2,189.7"/>
<polygon points="651.1,242.7 667.2,284 677.2,280.2 661.1,238.9" stroke="#c4c3b9" stroke-width="0.5"/>
<polygon points="653.3,240.5 669.4,281.8 667.2,284 651.1,242.7"/>
<polygon points="669.4,281.8 679.4,278 677.2,280.2 667.2,284"/>
<polygon points="679.4,278 663.3,236.7 661.1,238.9 677.2,280.2"/>
<polygon points="663.3,236.7 653.3,240.5 651.1,242.7 661.1,238.9"/>
<polygon points="688.2,227.1 713.4,217.9 716.9,227.1 692.8,239.7" stroke="#c4c3b9" stroke-width="0.5"/>
<polygon points="690.4,224.9 715.6,215.7 713.4,217.9 688.2,227.1"/>
<polygon points="715.6,215.7 719.1,224.9 716.9,227.1 713.4,217.9"/>
<polygon points="719.1,224.9 695,237.5 692.8,239.7 716.9,227.1"/>
<polygon points="695,237.5 690.4,224.9 688.2,227.1 692.8,239.7"/>
<polygon points="677.9,236.3 684.8,235.1 687.1,240.8 680.2,242" stroke="#c4c3b9" stroke-width="0.5"/>
<polygon points="680.1,234.1 687,232.9 684.8,235.1 677.9,236.3"/>
<polygon points="687,232.9 689.3,238.6 687.1,240.8 684.8,235.1"/>
<polygon points="689.3,238.6 682.4,239.8 680.2,242 687.1,240.8"/>
<polygon points="682.4,239.8 680.1,234.1 677.9,236.3 680.2,242"/>
<polygon points="682.5,247.7 688.2,244.3 689.4,246.6 684.8,252.3" stroke="#c4c3b9" stroke-width="0.5"/>
<polygon points="684.7,245.5 690.4,242.1 688.2,244.3 682.5,247.7"/>
<polygon points="690.4,242.1 691.6,244.4 689.4,246.6 688.2,244.3"/>
<polygon points="691.6,244.4 687,250.1 684.8,252.3 689.4,246.6"/>
<polygon points="687,250.1 684.7,245.5 682.5,247.7 684.8,252.3"/>
<polygon points="692.5,257.7 709.7,299 719.5,295 702.3,253.7" stroke="#c4c3b9" stroke-width="0.5"/>
<polygon points="694.7,255.5 711.9,296.8 709.7,299 692.5,257.7"/>
<polygon points="711.9,296.8 721.7,292.8 719.5,295 709.7,299"/>
<polygon points="721.7,292.8 704.5,251.5 702.3,253.7 719.5,295"/>
<polygon points="704.5,251.5 694.7,255.5 692.5,257.7 702.3,253.7"/>
<polygon points="731.5,262.4 753.2,312.8 763,308.6 741.3,258.2" stroke="#c4c3b9" stroke-width="0.5"/>
<polygon points="733.7,260.2 755.4,310.6 753.2,312.8 731.5,262.4"/>
<polygon points="755.4,310.6 765.2,306.4 763,308.6 753.2,312.8"/>
<polygon points="765.2,306.4 743.5,256 741.3,258.2 763,308.6"/>
<polygon points="743.5,256 733.7,260.2 731.5,262.4 741.3,258.2"/>
<polygon points="745.8,211.9 765.2,265.8 776.2,261.8 756.8,207.9" stroke="#c4c3b9" stroke-width="0.5"/>
<polygon points="748,209.7 767.4,263.6 765.2,265.8 745.8,211.9"/>
<polygon points="767.4,263.6 778.4,259.6 776.2,261.8 765.2,265.8"/>
<polygon points="778.4,259.6 759,205.7 756.8,207.9 776.2,261.8"/>
<polygon points="759,205.7 748,209.7 745.8,211.9 756.8,207.9"/>
<polygon points="503.4,239.7 558.4,254.6 561.4,243.2 506.4,228.3" stroke="#c4c3b9" stroke-width="0.5"/>
<polygon points="505.6,237.5 560.6,252.4 558.4,254.6 503.4,239.7"/>
<polygon points="560.6,252.4 563.6,241 561.4,243.2 558.4,254.6"/>
<polygon points="563.6,241 508.6,226.1 506.4,228.3 561.4,243.2"/>
<polygon points="508.6,226.1 505.6,237.5 503.4,239.7 506.4,228.3"/>
<polygon points="472.8,214.5 479.7,215.6 477.4,228.2 472.8,227.1" stroke="#c4c3b9" stroke-width="0.5"/>
<polygon points="475,212.3 481.9,213.4 479.7,215.6 472.8,214.5"/>
<polygon points="481.9,213.4 479.6,226 477.4,228.2 479.7,215.6"/>
<polygon points="479.6,226 475,224.9 472.8,227.1 477.4,228.2"/>
<polygon points="475,224.9 475,212.3 472.8,214.5 472.8,227.1"/>
<polygon points="485.3,273 513.9,281 516.5,271.8 487.9,263.8" stroke="#c4c3b9" stroke-width="0.5"/>
<polygon points="487.5,270.8 516.1,278.8 513.9,281 485.3,273"/>
<polygon points="516.1,278.8 518.7,269.6 516.5,271.8 513.9,281"/>
<polygon points="518.7,269.6 490.1,261.6 487.9,263.8 516.5,271.8"/>
<polygon points="490.1,261.6 487.5,270.8 485.3,273 487.9,263.8"/>
<polygon points="522.8,283.8 551.4,292.9 554.6,282.7 526,273.6" stroke="#c4c3b9" stroke-width="0.5"/>
<polygon points="525,281.6 553.6,290.7 551.4,292.9 522.8,283.8"/>
<polygon points="553.6,290.7 556.8,280.5 554.6,282.7 551.4,292.9"/>
<polygon points="556.8,280.5 528.2,271.4 526,273.6 554.6,282.7"/>
<polygon points="528.2,271.4 525,281.6 522.8,283.8 526,273.6"/>
<polygon points="551,291.7 536.1,334.1 547.1,337.9 562,295.5" stroke="#c4c3b9" stroke-width="0.5"/>
<polygon points="553.2,289.5 538.3,331.9 536.1,334.1 551,291.7"/>
<polygon points="538.3,331.9 549.3,335.7 547.1,337.9 536.1,334.1"/>
<polygon points="549.3,335.7 564.2,293.3 562,295.5 547.1,337.9"/>
<polygon points="564.2,293.3 553.2,289.5 551,291.7 562,295.5"/>
<polygon points="505.5,292.1 492.9,334.5 503.1,337.5 515.7,295.1" stroke="#c4c3b9" stroke-width="0.5"/>
<polygon points="507.7,289.9 495.1,332.3 492.9,334.5 505.5,292.1"/>
<polygon points="495.1,332.3 505.3,335.3 503.1,337.5 492.9,334.5"/>
<polygon points="505.3,335.3 517.9,292.9 515.7,295.1 503.1,337.5"/>
<polygon points="517.9,292.9 507.7,289.9 505.5,292.1 515.7,295.1"/>
<polygon points="533.8,343.1 516.6,391.3 527.6,395.3 544.8,347.1" stroke="#c4c3b9" stroke-width="0.5"/>
<polygon points="536,340.9 518.8,389.1 516.6,391.3 533.8,343.1"/>
<polygon points="518.8,389.1 529.8,393.1 527.6,395.3 516.6,391.3"/>
<polygon points="529.8,393.1 547,344.9 544.8,347.1 527.6,395.3"/>
<polygon points="547,344.9 536,340.9 533.8,343.1 544.8,347.1"/>
<polygon points="493.4,355.2 484.2,385 493.4,387.8 502.6,358" stroke="#c4c3b9" stroke-width="0.5"/>
<polygon points="495.6,353 486.4,382.8 484.2,385 493.4,355.2"/>
<polygon points="486.4,382.8 495.6,385.6 493.4,387.8 484.2,385"/>
<polygon points="495.6,385.6 504.8,355.8 502.6,358 493.4,387.8"/>
<polygon points="504.8,355.8 495.6,353 493.4,355.2 502.6,358"/>
<polygon points="587,311.9 634,324.5 637,313.1 590,300.5" stroke="#c4c3b9" stroke-width="0.5"/>
<polygon points="589.2,309.7 636.2,322.3 634,324.5 587,311.9"/>
<polygon points="636.2,322.3 639.2,310.9 637,313.1 634,324.5"/>
<polygon points="639.2,310.9 592.2,298.3 590,300.5 637,313.1"/>
<polygon points="592.2,298.3 589.2,309.7 587,311.9 590,300.5"/>
<polygon points="643,330.1 691.1,345 694.5,333.8 646.4,318.9" stroke="#c4c3b9" stroke-width="0.5"/>
<polygon points="645.2,327.9 693.3,342.8 691.1,345 643,330.1"/>
<polygon points="693.3,342.8 696.7,331.6 694.5,333.8 691.1,345"/>
<polygon points="696.7,331.6 648.6,316.7 646.4,318.9 694.5,333.8"/>
<polygon points="648.6,316.7 645.2,327.9 643,330.1 646.4,318.9"/>
<polygon points="700.2,347.3 749.5,363.3 753.1,352.1 703.8,336.1" stroke="#c4c3b9" stroke-width="0.5"/>
<polygon points="702.4,345.1 751.7,361.1 749.5,363.3 700.2,347.3"/>
<polygon points="751.7,361.1 755.3,349.9 753.1,352.1 749.5,363.3"/>
<polygon points="755.3,349.9 706,333.9 703.8,336.1 753.1,352.1"/>
<polygon points="706,333.9 702.4,345.1 700.2,347.3 703.8,336.1"/>
<polygon points="579.8,325.2 564.9,375.6 575.5,378.8 590.4,328.4" stroke="#c4c3b9" stroke-width="0.5"/>
<polygon points="582,323 567.1,373.4 564.9,375.6 579.8,325.2"/>
<polygon points="567.1,373.4 577.7,376.6 575.5,378.8 564.9,375.6"/>
<polygon points="577.7,376.6 592.6,326.2 590.4,328.4 575.5,378.8"/>
<polygon points="592.6,326.2 582,323 579.8,325.2 590.4,328.4"/>
<polygon points="637.5,349.3 623.7,391.7 633.5,394.9 647.3,352.5" stroke="#c4c3b9" stroke-width="0.5"/>
<polygon points="639.7,347.1 625.9,389.5 623.7,391.7 637.5,349.3"/>
<polygon points="625.9,389.5 635.7,392.7 633.5,394.9 623.7,391.7"/>
<polygon points="635.7,392.7 649.5,350.3 647.3,352.5 633.5,394.9"/>
<polygon points="649.5,350.3 639.7,347.1 637.5,349.3 647.3,352.5"/>
<polygon points="675.3,360.7 665,391.7 674.8,394.9 685.1,363.9" stroke="#c4c3b9" stroke-width="0.5"/>
<polygon points="677.5,358.5 667.2,389.5 665,391.7 675.3,360.7"/>
<polygon points="667.2,389.5 677,392.7 674.8,394.9 665,391.7"/>
<polygon points="677,392.7 687.3,361.7 685.1,363.9 674.8,394.9"/>
<polygon points="687.3,361.7 677.5,358.5 675.3,360.7 685.1,363.9"/>
<polygon points="877.8,223 920.2,236.8 923.4,226.6 881,212.8" stroke="#c4c3b9" stroke-width="0.5"/>
<polygon points="880,220.8 922.4,234.6 920.2,236.8 877.8,223"/>
<polygon points="922.4,234.6 925.6,224.4 923.4,226.6 920.2,236.8"/>
<polygon points="925.6,224.4 883.2,210.6 881,212.8 923.4,226.6"/>
<polygon points="883.2,210.6 880,220.8 877.8,223 881,212.8"/>
<polygon points="940.1,212.2 955,212.2 953.9,217.9 941.3,215.6" stroke="#c4c3b9" stroke-width="0.5"/>
<polygon points="942.3,210 957.2,210 955,212.2 940.1,212.2"/>
<polygon points="957.2,210 956.1,215.7 953.9,217.9 955,212.2"/>
<polygon points="956.1,215.7 943.5,213.4 941.3,215.6 953.9,217.9"/>
<polygon points="943.5,213.4 942.3,210 940.1,212.2 941.3,215.6"/>
<polygon points="939.7,218.5 928.2,251.8 938.2,255.2 949.7,221.9" stroke="#c4c3b9" stroke-width="0.5"/>
<polygon points="941.9,216.3 930.4,249.6 928.2,251.8 939.7,218.5"/>
<polygon points="930.4,249.6 940.4,253 938.2,255.2 928.2,251.8"/>
<polygon points="940.4,253 951.9,219.7 949.7,221.9 938.2,255.2"/>
<polygon points="951.9,219.7 941.9,216.3 939.7,218.5 949.7,221.9"/>
<polygon points="924.2,265.4 913.9,290.6 922.7,294.2 933,269" stroke="#c4c3b9" stroke-width="0.5"/>
<polygon points="926.4,263.2 916.1,288.4 913.9,290.6 924.2,265.4"/>
<polygon points="916.1,288.4 924.9,292 922.7,294.2 913.9,290.6"/>
<polygon points="924.9,292 935.2,266.8 933,269 922.7,294.2"/>
<polygon points="935.2,266.8 926.4,263.2 924.2,265.4 933,269"/>
<polygon points="919.5,308.5 928.6,308 927.5,315.8 918.3,314.2" stroke="#c4c3b9" stroke-width="0.5"/>
<polygon points="921.7,306.3 930.8,305.8 928.6,308 919.5,308.5"/>
<polygon points="930.8,305.8 929.7,313.6 927.5,315.8 928.6,308"/>
<polygon points="929.7,313.6 920.5,312 918.3,314.2 927.5,315.8"/>
<polygon points="920.5,312 921.7,306.3 919.5,308.5 918.3,314.2"/>
<polygon points="906.9,318.8 918.3,321.8 912.6,337.1 902.3,334.8" stroke="#c4c3b9" stroke-width="0.5"/>
<polygon points="909.1,316.6 920.5,319.6 918.3,321.8 906.9,318.8"/>
<polygon points="920.5,319.6 914.8,334.9 912.6,337.1 918.3,321.8"/>
<polygon points="914.8,334.9 904.5,332.6 902.3,334.8 912.6,337.1"/>
<polygon points="904.5,332.6 909.1,316.6 906.9,318.8 902.3,334.8"/>
<polygon points="972.2,223.2 1023.8,234 1022.6,240.8 971,230.5" stroke="#c4c3b9" stroke-width="0.5"/>
<polygon points="974.4,221 1026,231.8 1023.8,234 972.2,223.2"/>
<polygon points="1026,231.8 1024.8,238.6 1022.6,240.8 1023.8,234"/>
<polygon points="1024.8,238.6 973.2,228.3 971,230.5 1022.6,240.8"/>
<polygon points="973.2,228.3 974.4,221 972.2,223.2 971,230.5"/>
<polygon points="983.6,212.2 1022.6,216.8 1021.5,222.5 982.5,215.6" stroke="#c4c3b9" stroke-width="0.5"/>
<polygon points="985.8,210 1024.8,214.6 1022.6,216.8 983.6,212.2"/>
<polygon points="1024.8,214.6 1023.7,220.3 1021.5,222.5 1022.6,216.8"/>
<polygon points="1023.7,220.3 984.7,213.4 982.5,215.6 1021.5,222.5"/>
<polygon points="984.7,213.4 985.8,210 983.6,212.2 982.5,215.6"/>
<polygon points="956.6,249.9 1027.7,272.8 1031.3,261.6 960.2,238.7" stroke="#c4c3b9" stroke-width="0.5"/>
<polygon points="958.8,247.7 1029.9,270.6 1027.7,272.8 956.6,249.9"/>
<polygon points="1029.9,270.6 1033.5,259.4 1031.3,261.6 1027.7,272.8"/>
<polygon points="1033.5,259.4 962.4,236.5 960.2,238.7 1031.3,261.6"/>
<polygon points="962.4,236.5 958.8,247.7 956.6,249.9 960.2,238.7"/>
<polygon points="948.3,285.8 999.9,304.1 1004.1,292.1 952.5,273.8" stroke="#c4c3b9" stroke-width="0.5"/>
<polygon points="950.5,283.6 1002.1,301.9 999.9,304.1 948.3,285.8"/>
<polygon points="1002.1,301.9 1006.3,289.9 1004.1,292.1 999.9,304.1"/>
<polygon points="1006.3,289.9 954.7,271.6 952.5,273.8 1004.1,292.1"/>
<polygon points="954.7,271.6 950.5,283.6 948.3,285.8 952.5,273.8"/>
<polygon points="937.9,312.1 1003.2,331.5 1005.4,324.3 940.1,304.9" stroke="#c4c3b9" stroke-width="0.5"/>
<polygon points="940.1,309.9 1005.4,329.3 1003.2,331.5 937.9,312.1"/>
<polygon points="1005.4,329.3 1007.6,322.1 1005.4,324.3 1003.2,331.5"/>
<polygon points="1007.6,322.1 942.3,302.7 940.1,304.9 1005.4,324.3"/>
<polygon points="942.3,302.7 940.1,309.9 937.9,312.1 940.1,304.9"/>
<polygon points="1047.3,217.7 1039.3,246.3 1049.5,249.1 1057.5,220.5" stroke="#c4c3b9" stroke-width="0.5"/>
<polygon points="1049.5,215.5 1041.5,244.1 1039.3,246.3 1047.3,217.7"/>
<polygon points="1041.5,244.1 1051.7,246.9 1049.5,249.1 1039.3,246.3"/>
<polygon points="1051.7,246.9 1059.7,218.3 1057.5,220.5 1049.5,249.1"/>
<polygon points="1059.7,218.3 1049.5,215.5 1047.3,217.7 1057.5,220.5"/>
<polygon points="1043.1,255.9 1032.8,292.6 1040,294.6 1050.3,257.9" stroke="#c4c3b9" stroke-width="0.5"/>
<polygon points="1045.3,253.7 1035,290.4 1032.8,292.6 1043.1,255.9"/>
<polygon points="1035,290.4 1042.2,292.4 1040,294.6 1032.8,292.6"/>
<polygon points="1042.2,292.4 1052.5,255.7 1050.3,257.9 1040,294.6"/>
<polygon points="1052.5,255.7 1045.3,253.7 1043.1,255.9 1050.3,257.9"/>
<polygon points="1025.1,298.4 1016,323.6 1027,327.6 1036.1,302.4" stroke="#c4c3b9" stroke-width="0.5"/>
<polygon points="1027.3,296.2 1018.2,321.4 1016,323.6 1025.1,298.4"/>
<polygon points="1018.2,321.4 1029.2,325.4 1027,327.6 1016,323.6"/>
<polygon points="1029.2,325.4 1038.3,300.2 1036.1,302.4 1027,327.6"/>
<polygon points="1038.3,300.2 1027.3,296.2 1025.1,298.4 1036.1,302.4"/>
<polygon points="901.7,364.5 956.7,381.7 960.1,370.5 905.1,353.3" stroke="#c4c3b9" stroke-width="0.5"/>
<polygon points="903.9,362.3 958.9,379.5 956.7,381.7 901.7,364.5"/>
<polygon points="958.9,379.5 962.3,368.3 960.1,370.5 956.7,381.7"/>
<polygon points="962.3,368.3 907.3,351.1 905.1,353.3 960.1,370.5"/>
<polygon points="907.3,351.1 903.9,362.3 901.7,364.5 905.1,353.3"/>
<polygon points="970.5,385.1 1023.2,401.1 1026.6,389.9 973.9,373.9" stroke="#c4c3b9" stroke-width="0.5"/>
<polygon points="972.7,382.9 1025.4,398.9 1023.2,401.1 970.5,385.1"/>
<polygon points="1025.4,398.9 1028.8,387.7 1026.6,389.9 1023.2,401.1"/>
<polygon points="1028.8,387.7 976.1,371.7 973.9,373.9 1026.6,389.9"/>
<polygon points="976.1,371.7 972.7,382.9 970.5,385.1 973.9,373.9"/>
<polygon points="1092.3,217.9 1099.2,216.8 1100.3,222.5 1126.7,222.5 1127.8,216.8 1133.5,217.2 1132.8,226 1130.1,234 1095.7,234 1094.6,226" stroke="#c4c3b9" stroke-width="0.5"/>
<polygon points="1094.5,215.7 1101.4,214.6 1099.2,216.8 1092.3,217.9"/>
<polygon points="1101.4,214.6 1102.5,220.3 1100.3,222.5 1099.2,216.8"/>
<polygon points="1102.5,220.3 1128.9,220.3 1126.7,222.5 1100.3,222.5"/>
<polygon points="1128.9,220.3 1130,214.6 1127.8,216.8 1126.7,222.5"/>
<polygon points="1130,214.6 1135.7,215 1133.5,217.2 1127.8,216.8"/>
<polygon points="1135.7,215 1135,223.8 1132.8,226 1133.5,217.2"/>
<polygon points="1135,223.8 1132.3,231.8 1130.1,234 1132.8,226"/>
<polygon points="1132.3,231.8 1097.9,231.8 1095.7,234 1130.1,234"/>
<polygon points="1097.9,231.8 1096.8,223.8 1094.6,226 1095.7,234"/>
<polygon points="1096.8,223.8 1094.5,215.7 1092.3,217.9 1094.6,226"/>
<polygon points="1214.9,212.2 1282.5,212.2 1276.8,226.4 1212.6,215.6" stroke="#c4c3b9" stroke-width="0.5"/>
<polygon points="1217.1,210 1284.7,210 1282.5,212.2 1214.9,212.2"/>
<polygon points="1284.7,210 1279,224.2 1276.8,226.4 1282.5,212.2"/>
<polygon points="1279,224.2 1214.8,213.4 1212.6,215.6 1276.8,226.4"/>
<polygon points="1214.8,213.4 1217.1,210 1214.9,212.2 1212.6,215.6"/>
<polygon points="1334.1,212.2 1362,212.2 1362,224.8 1353.6,227.1 1332.9,222.5" stroke="#c4c3b9" stroke-width="0.5"/>
<polygon points="1336.3,210 1364.2,210 1362,212.2 1334.1,212.2"/>
<polygon points="1364.2,210 1364.2,222.6 1362,224.8 1362,212.2"/>
<polygon points="1364.2,222.6 1355.8,224.9 1353.6,227.1 1362,224.8"/>
<polygon points="1355.8,224.9 1335.1,220.3 1332.9,222.5 1353.6,227.1"/>
<polygon points="1335.1,220.3 1336.3,210 1334.1,212.2 1332.9,222.5"/>
<polygon points="1320.3,236.3 1362,245.4 1362,256.9 1316.9,247.7" stroke="#c4c3b9" stroke-width="0.5"/>
<polygon points="1322.5,234.1 1364.2,243.2 1362,245.4 1320.3,236.3"/>
<polygon points="1364.2,243.2 1364.2,254.7 1362,256.9 1362,245.4"/>
<polygon points="1364.2,254.7 1319.1,245.5 1316.9,247.7 1362,256.9"/>
<polygon points="1319.1,245.5 1322.5,234.1 1320.3,236.3 1316.9,247.7"/>
<polygon points="1131.5,306.1 1186.5,292.4 1183.7,281 1128.7,294.7" stroke="#c4c3b9" stroke-width="0.5"/>
<polygon points="1133.7,303.9 1188.7,290.2 1186.5,292.4 1131.5,306.1"/>
<polygon points="1188.7,290.2 1185.9,278.8 1183.7,281 1186.5,292.4"/>
<polygon points="1185.9,278.8 1130.9,292.5 1128.7,294.7 1183.7,281"/>
<polygon points="1130.9,292.5 1133.7,303.9 1131.5,306.1 1128.7,294.7"/>
<polygon points="1079.7,335.4 1129,324 1126.6,313.6 1077.3,325" stroke="#c4c3b9" stroke-width="0.5"/>
<polygon points="1081.9,333.2 1131.2,321.8 1129,324 1079.7,335.4"/>
<polygon points="1131.2,321.8 1128.8,311.4 1126.6,313.6 1129,324"/>
<polygon points="1128.8,311.4 1079.5,322.8 1077.3,325 1126.6,313.6"/>
<polygon points="1079.5,322.8 1081.9,333.2 1079.7,335.4 1077.3,325"/>
<polygon points="1090.1,367.5 1138.3,354.9 1135.7,344.5 1087.5,357.1" stroke="#c4c3b9" stroke-width="0.5"/>
<polygon points="1092.3,365.3 1140.5,352.7 1138.3,354.9 1090.1,367.5"/>
<polygon points="1140.5,352.7 1137.9,342.3 1135.7,344.5 1138.3,354.9"/>
<polygon points="1137.9,342.3 1089.7,354.9 1087.5,357.1 1135.7,344.5"/>
<polygon points="1089.7,354.9 1092.3,365.3 1090.1,367.5 1087.5,357.1"/>
<polygon points="1162.1,326.2 1158.7,361.7 1170.3,362.9 1173.7,327.4" stroke="#c4c3b9" stroke-width="0.5"/>
<polygon points="1164.3,324 1160.9,359.5 1158.7,361.7 1162.1,326.2"/>
<polygon points="1160.9,359.5 1172.5,360.7 1170.3,362.9 1158.7,361.7"/>
<polygon points="1172.5,360.7 1175.9,325.2 1173.7,327.4 1170.3,362.9"/>
<polygon points="1175.9,325.2 1164.3,324 1162.1,326.2 1173.7,327.4"/>
<polygon points="1229.3,258.2 1210.9,312 1216.5,314 1234.9,260.2" stroke="#c4c3b9" stroke-width="0.5"/>
<polygon points="1231.5,256 1213.1,309.8 1210.9,312 1229.3,258.2"/>
<polygon points="1213.1,309.8 1218.7,311.8 1216.5,314 1210.9,312"/>
<polygon points="1218.7,311.8 1237.1,258 1234.9,260.2 1216.5,314"/>
<polygon points="1237.1,258 1231.5,256 1229.3,258.2 1234.9,260.2"/>
<polygon points="1210.1,315.6 1191.8,367.1 1196.8,368.9 1215.1,317.4" stroke="#c4c3b9" stroke-width="0.5"/>
<polygon points="1212.3,313.4 1194,364.9 1191.8,367.1 1210.1,315.6"/>
<polygon points="1194,364.9 1199,366.7 1196.8,368.9 1191.8,367.1"/>
<polygon points="1199,366.7 1217.3,315.2 1215.1,317.4 1196.8,368.9"/>
<polygon points="1217.3,315.2 1212.3,313.4 1210.1,315.6 1215.1,317.4"/>
<polygon points="1187.6,381.9 1182.6,394.5 1187.6,396.5 1192.6,383.9" stroke="#c4c3b9" stroke-width="0.5"/>
<polygon points="1189.8,379.7 1184.8,392.3 1182.6,394.5 1187.6,381.9"/>
<polygon points="1184.8,392.3 1189.8,394.3 1187.6,396.5 1182.6,394.5"/>
<polygon points="1189.8,394.3 1194.8,381.7 1192.6,383.9 1187.6,396.5"/>
<polygon points="1194.8,381.7 1189.8,379.7 1187.6,381.9 1192.6,383.9"/>
<polygon points="1258.4,282.1 1315.7,299.3 1308.9,315.3 1268.8,302.7 1266.5,307.3 1252.7,302.7" stroke="#c4c3b9" stroke-width="0.5"/>
<polygon points="1260.6,279.9 1317.9,297.1 1315.7,299.3 1258.4,282.1"/>
<polygon points="1317.9,297.1 1311.1,313.1 1308.9,315.3 1315.7,299.3"/>
<polygon points="1311.1,313.1 1271,300.5 1268.8,302.7 1308.9,315.3"/>
<polygon points="1271,300.5 1268.7,305.1 1266.5,307.3 1268.8,302.7"/>
<polygon points="1268.7,305.1 1254.9,300.5 1252.7,302.7 1266.5,307.3"/>
<polygon points="1254.9,300.5 1260.6,279.9 1258.4,282.1 1252.7,302.7"/>
<polygon points="1228,312.3 1254.3,321.5 1257.9,311.5 1231.6,302.3" stroke="#c4c3b9" stroke-width="0.5"/>
<polygon points="1230.2,310.1 1256.5,319.3 1254.3,321.5 1228,312.3"/>
<polygon points="1256.5,319.3 1260.1,309.3 1257.9,311.5 1254.3,321.5"/>
<polygon points="1260.1,309.3 1233.8,300.1 1231.6,302.3 1257.9,311.5"/>
<polygon points="1233.8,300.1 1230.2,310.1 1228,312.3 1231.6,302.3"/>
<polygon points="1337.5,279.8 1362,286.7 1362,300.4 1335.2,291.3" stroke="#c4c3b9" stroke-width="0.5"/>
<polygon points="1339.7,277.6 1364.2,284.5 1362,286.7 1337.5,279.8"/>
<polygon points="1364.2,284.5 1364.2,298.2 1362,300.4 1362,286.7"/>
<polygon points="1364.2,298.2 1337.4,289.1 1335.2,291.3 1362,300.4"/>
<polygon points="1337.4,289.1 1339.7,277.6 1337.5,279.8 1335.2,291.3"/>
<polygon points="1346.7,325.6 1362,329.5 1362,341.7 1344.4,336" stroke="#c4c3b9" stroke-width="0.5"/>
<polygon points="1348.9,323.4 1364.2,327.3 1362,329.5 1346.7,325.6"/>
<polygon points="1364.2,327.3 1364.2,339.5 1362,341.7 1362,329.5"/>
<polygon points="1364.2,339.5 1346.6,333.8 1344.4,336 1362,341.7"/>
<polygon points="1346.6,333.8 1348.9,323.4 1346.7,325.6 1344.4,336"/>
<polygon points="1335.2,364.6 1362,372.6 1362,386.4 1331.8,376.1" stroke="#c4c3b9" stroke-width="0.5"/>
<polygon points="1337.4,362.4 1364.2,370.4 1362,372.6 1335.2,364.6"/>
<polygon points="1364.2,370.4 1364.2,384.2 1362,386.4 1362,372.6"/>
<polygon points="1364.2,384.2 1334,373.9 1331.8,376.1 1362,386.4"/>
<polygon points="1334,373.9 1337.4,362.4 1335.2,364.6 1331.8,376.1"/>
<polygon points="1072.8,384.1 1094.6,381.8 1095.7,388.2 1072.8,388.2" stroke="#c4c3b9" stroke-width="0.5"/>
<polygon points="1075,381.9 1096.8,379.6 1094.6,381.8 1072.8,384.1"/>
<polygon points="1096.8,379.6 1097.9,386 1095.7,388.2 1094.6,381.8"/>
<polygon points="1097.9,386 1075,386 1072.8,388.2 1095.7,388.2"/>
<polygon points="1075,386 1075,381.9 1072.8,384.1 1072.8,388.2"/>
<polygon points="1351.8,214.2 1351.8,240.2 1362.8,240.2 1362.8,214.2" stroke="#c4c3b9" stroke-width="0.5"/>
<polygon points="1354,212 1354,238 1351.8,240.2 1351.8,214.2"/>
<polygon points="1354,238 1365,238 1362.8,240.2 1351.8,240.2"/>
<polygon points="1365,238 1365,212 1362.8,214.2 1362.8,240.2"/>
<polygon points="1365,212 1354,212 1351.8,214.2 1362.8,214.2"/>
<polygon points="472.8,397.4 507.2,404.2 517.5,405.4 514.1,415.7 504.9,416.8 472.8,410" stroke="#c4c3b9" stroke-width="0.5"/>
<polygon points="475,395.2 509.4,402 507.2,404.2 472.8,397.4"/>
<polygon points="509.4,402 519.7,403.2 517.5,405.4 507.2,404.2"/>
<polygon points="519.7,403.2 516.3,413.5 514.1,415.7 517.5,405.4"/>
<polygon points="516.3,413.5 507.1,414.6 504.9,416.8 514.1,415.7"/>
<polygon points="507.1,414.6 475,407.8 472.8,410 504.9,416.8"/>
<polygon points="475,407.8 475,395.2 472.8,397.4 472.8,410"/>
<polygon points="558.3,389.8 549.2,415 559.2,418.6 568.3,393.4" stroke="#c4c3b9" stroke-width="0.5"/>
<polygon points="560.5,387.6 551.4,412.8 549.2,415 558.3,389.8"/>
<polygon points="551.4,412.8 561.4,416.4 559.2,418.6 549.2,415"/>
<polygon points="561.4,416.4 570.5,391.2 568.3,393.4 559.2,418.6"/>
<polygon points="570.5,391.2 560.5,387.6 558.3,389.8 568.3,393.4"/>
<polygon points="555,430 597.4,442.6 600.4,432.4 558,419.8" stroke="#c4c3b9" stroke-width="0.5"/>
<polygon points="557.2,427.8 599.6,440.4 597.4,442.6 555,430"/>
<polygon points="599.6,440.4 602.6,430.2 600.4,432.4 597.4,442.6"/>
<polygon points="602.6,430.2 560.2,417.6 558,419.8 600.4,432.4"/>
<polygon points="560.2,417.6 557.2,427.8 555,430 558,419.8"/>
<polygon points="601.1,388.2 608,389.3 600,407.7 579.4,404.2 580.5,398.5 594.3,399.7" stroke="#c4c3b9" stroke-width="0.5"/>
<polygon points="603.3,386 610.2,387.1 608,389.3 601.1,388.2"/>
<polygon points="610.2,387.1 602.2,405.5 600,407.7 608,389.3"/>
<polygon points="602.2,405.5 581.6,402 579.4,404.2 600,407.7"/>
<polygon points="581.6,402 582.7,396.3 580.5,398.5 579.4,404.2"/>
<polygon points="582.7,396.3 596.5,397.5 594.3,399.7 580.5,398.5"/>
<polygon points="596.5,397.5 603.3,386 601.1,388.2 594.3,399.7"/>
<polygon points="622.9,388.2 635.5,388.2 633.2,394.6 621.8,392.3" stroke="#c4c3b9" stroke-width="0.5"/>
<polygon points="625.1,386 637.7,386 635.5,388.2 622.9,388.2"/>
<polygon points="637.7,386 635.4,392.4 633.2,394.6 635.5,388.2"/>
<polygon points="635.4,392.4 624,390.1 621.8,392.3 633.2,394.6"/>
<polygon points="624,390.1 625.1,386 622.9,388.2 621.8,392.3"/>
<polygon points="731,368.5 713.8,432.6 724.6,435.4 741.8,371.3" stroke="#c4c3b9" stroke-width="0.5"/>
<polygon points="733.2,366.3 716,430.4 713.8,432.6 731,368.5"/>
<polygon points="716,430.4 726.8,433.2 724.6,435.4 713.8,432.6"/>
<polygon points="726.8,433.2 744,369.1 741.8,371.3 724.6,435.4"/>
<polygon points="744,369.1 733.2,366.3 731,368.5 741.8,371.3"/>
<polygon points="609.9,436.8 658,451.7 661.2,441.5 613.1,426.6" stroke="#c4c3b9" stroke-width="0.5"/>
<polygon points="612.1,434.6 660.2,449.5 658,451.7 609.9,436.8"/>
<polygon points="660.2,449.5 663.4,439.3 661.2,441.5 658,451.7"/>
<polygon points="663.4,439.3 615.3,424.4 613.1,426.6 661.2,441.5"/>
<polygon points="615.3,424.4 612.1,434.6 609.9,436.8 613.1,426.6"/>
<polygon points="660.3,464.3 702.7,478.1 705.9,467.9 663.5,454.1" stroke="#c4c3b9" stroke-width="0.5"/>
<polygon points="662.5,462.1 704.9,475.9 702.7,478.1 660.3,464.3"/>
<polygon points="704.9,475.9 708.1,465.7 705.9,467.9 702.7,478.1"/>
<polygon points="708.1,465.7 665.7,451.9 663.5,454.1 705.9,467.9"/>
<polygon points="665.7,451.9 662.5,462.1 660.3,464.3 663.5,454.1"/>
<polygon points="712.4,440.6 704.4,464.6 713.4,467.6 721.4,443.6" stroke="#c4c3b9" stroke-width="0.5"/>
<polygon points="714.6,438.4 706.6,462.4 704.4,464.6 712.4,440.6"/>
<polygon points="706.6,462.4 715.6,465.4 713.4,467.6 704.4,464.6"/>
<polygon points="715.6,465.4 723.6,441.4 721.4,443.6 713.4,467.6"/>
<polygon points="723.6,441.4 714.6,438.4 712.4,440.6 721.4,443.6"/>
<polygon points="580.5,478.7 592,479.9 594.3,475.3 602.3,476.4 597.7,492.5 587.4,491.3 581.7,508.5 570.2,506.2 574.8,486.7" stroke="#c4c3b9" stroke-width="0.5"/>
<polygon points="582.7,476.5 594.2,477.7 592,479.9 580.5,478.7"/>
<polygon points="594.2,477.7 596.5,473.1 594.3,475.3 592,479.9"/>
<polygon points="596.5,473.1 604.5,474.2 602.3,476.4 594.3,475.3"/>
<polygon points="604.5,474.2 599.9,490.3 597.7,492.5 602.3,476.4"/>
<polygon points="599.9,490.3 589.6,489.1 587.4,491.3 597.7,492.5"/>
<polygon points="589.6,489.1 583.9,506.3 581.7,508.5 587.4,491.3"/>
<polygon points="583.9,506.3 572.4,504 570.2,506.2 581.7,508.5"/>
<polygon points="572.4,504 577,484.5 574.8,486.7 570.2,506.2"/>
<polygon points="577,484.5 582.7,476.5 580.5,478.7 574.8,486.7"/>
<polygon points="600.5,489.5 616.5,495.2 620.1,485.2 604.1,479.5" stroke="#c4c3b9" stroke-width="0.5"/>
<polygon points="602.7,487.3 618.7,493 616.5,495.2 600.5,489.5"/>
<polygon points="618.7,493 622.3,483 620.1,485.2 616.5,495.2"/>
<polygon points="622.3,483 606.3,477.3 604.1,479.5 620.1,485.2"/>
<polygon points="606.3,477.3 602.7,487.3 600.5,489.5 604.1,479.5"/>
<polygon points="626.9,496.4 661.3,507.9 664.7,497.7 630.3,486.2" stroke="#c4c3b9" stroke-width="0.5"/>
<polygon points="629.1,494.2 663.5,505.7 661.3,507.9 626.9,496.4"/>
<polygon points="663.5,505.7 666.9,495.5 664.7,497.7 661.3,507.9"/>
<polygon points="666.9,495.5 632.5,484 630.3,486.2 664.7,497.7"/>
<polygon points="632.5,484 629.1,494.2 626.9,496.4 630.3,486.2"/>
<polygon points="668.3,511.9 711.8,526.8 715,517.8 671.5,502.9" stroke="#c4c3b9" stroke-width="0.5"/>
<polygon points="670.5,509.7 714,524.6 711.8,526.8 668.3,511.9"/>
<polygon points="714,524.6 717.2,515.6 715,517.8 711.8,526.8"/>
<polygon points="717.2,515.6 673.7,500.7 671.5,502.9 715,517.8"/>
<polygon points="673.7,500.7 670.5,509.7 668.3,511.9 671.5,502.9"/>
<polygon points="475.1,442.1 504.9,445.5 502.6,454.7 472.8,451.2" stroke="#c4c3b9" stroke-width="0.5"/>
<polygon points="477.3,439.9 507.1,443.3 504.9,445.5 475.1,442.1"/>
<polygon points="507.1,443.3 504.8,452.5 502.6,454.7 504.9,445.5"/>
<polygon points="504.8,452.5 475,449 472.8,451.2 502.6,454.7"/>
<polygon points="475,449 477.3,439.9 475.1,442.1 472.8,451.2"/>
<polygon points="492.9,461.3 486,486.5 496.2,489.3 503.1,464.1" stroke="#c4c3b9" stroke-width="0.5"/>
<polygon points="495.1,459.1 488.2,484.3 486,486.5 492.9,461.3"/>
<polygon points="488.2,484.3 498.4,487.1 496.2,489.3 486,486.5"/>
<polygon points="498.4,487.1 505.3,461.9 503.1,464.1 496.2,489.3"/>
<polygon points="505.3,461.9 495.1,459.1 492.9,461.3 503.1,464.1"/>
<polygon points="541.6,514.3 561,516.5 564.5,525.7 592,534.9 596.6,544 587.4,564.2 571.3,562.4 573.6,553.2 532.4,544 526.7,539.5 532.4,521.1 540.4,520" stroke="#c4c3b9" stroke-width="0.5"/>
<polygon points="543.8,512.1 563.2,514.3 561,516.5 541.6,514.3"/>
<polygon points="563.2,514.3 566.7,523.5 564.5,525.7 561,516.5"/>
<polygon points="566.7,523.5 594.2,532.7 592,534.9 564.5,525.7"/>
<polygon points="594.2,532.7 598.8,541.8 596.6,544 592,534.9"/>
<polygon points="598.8,541.8 589.6,562 587.4,564.2 596.6,544"/>
<polygon points="589.6,562 573.5,560.2 571.3,562.4 587.4,564.2"/>
<polygon points="573.5,560.2 575.8,551 573.6,553.2 571.3,562.4"/>
<polygon points="575.8,551 534.6,541.8 532.4,544 573.6,553.2"/>
<polygon points="534.6,541.8 528.9,537.3 526.7,539.5 532.4,544"/>
<polygon points="528.9,537.3 534.6,518.9 532.4,521.1 526.7,539.5"/>
<polygon points="534.6,518.9 542.6,517.8 540.4,520 532.4,521.1"/>
<polygon points="542.6,517.8 543.8,512.1 541.6,514.3 540.4,520"/>
<polygon points="608,532.6 617.2,531.4 619.5,534.9 630.9,537.2 627.5,549.8 605.7,544" stroke="#c4c3b9" stroke-width="0.5"/>
<polygon points="610.2,530.4 619.4,529.2 617.2,531.4 608,532.6"/>
<polygon points="619.4,529.2 621.7,532.7 619.5,534.9 617.2,531.4"/>
<polygon points="621.7,532.7 633.1,535 630.9,537.2 619.5,534.9"/>
<polygon points="633.1,535 629.7,547.6 627.5,549.8 630.9,537.2"/>
<polygon points="629.7,547.6 607.9,541.8 605.7,544 627.5,549.8"/>
<polygon points="607.9,541.8 610.2,530.4 608,532.6 605.7,544"/>
<polygon points="632.7,548.3 627,567.8 637.2,570.8 642.9,551.3" stroke="#c4c3b9" stroke-width="0.5"/>
<polygon points="634.9,546.1 629.2,565.6 627,567.8 632.7,548.3"/>
<polygon points="629.2,565.6 639.4,568.6 637.2,570.8 627,567.8"/>
<polygon points="639.4,568.6 645.1,549.1 642.9,551.3 637.2,570.8"/>
<polygon points="645.1,549.1 634.9,546.1 632.7,548.3 642.9,551.3"/>
<polygon points="731.8,544 747.8,546.3 744.4,558.9 729.5,555.5" stroke="#c4c3b9" stroke-width="0.5"/>
<polygon points="734,541.8 750,544.1 747.8,546.3 731.8,544"/>
<polygon points="750,544.1 746.6,556.7 744.4,558.9 747.8,546.3"/>
<polygon points="746.6,556.7 731.7,553.3 729.5,555.5 744.4,558.9"/>
<polygon points="731.7,553.3 734,541.8 731.8,544 729.5,555.5"/>
<polygon points="1072.8,388.2 1096.9,383.6 1098,392.8 1072.8,399.7" stroke="#c4c3b9" stroke-width="0.5"/>
<polygon points="1075,386 1099.1,381.4 1096.9,383.6 1072.8,388.2"/>
<polygon points="1099.1,381.4 1100.2,390.6 1098,392.8 1096.9,383.6"/>
<polygon points="1100.2,390.6 1075,397.5 1072.8,399.7 1098,392.8"/>
<polygon points="1075,397.5 1075,386 1072.8,388.2 1072.8,399.7"/>
<polygon points="1104,423.1 1159,408.2 1156.2,398 1101.2,412.9" stroke="#c4c3b9" stroke-width="0.5"/>
<polygon points="1106.2,420.9 1161.2,406 1159,408.2 1104,423.1"/>
<polygon points="1161.2,406 1158.4,395.8 1156.2,398 1159,408.2"/>
<polygon points="1158.4,395.8 1103.4,410.7 1101.2,412.9 1156.2,398"/>
<polygon points="1103.4,410.7 1106.2,420.9 1104,423.1 1101.2,412.9"/>
<polygon points="1184.6,387.2 1161.7,453.7 1167.3,455.7 1190.2,389.2" stroke="#c4c3b9" stroke-width="0.5"/>
<polygon points="1186.8,385 1163.9,451.5 1161.7,453.7 1184.6,387.2"/>
<polygon points="1163.9,451.5 1169.5,453.5 1167.3,455.7 1161.7,453.7"/>
<polygon points="1169.5,453.5 1192.4,387 1190.2,389.2 1167.3,455.7"/>
<polygon points="1192.4,387 1186.8,385 1184.6,387.2 1190.2,389.2"/>
<polygon points="1219.5,410 1230.9,411.1 1225.2,435.2 1234.4,437.5 1235.5,432.9 1253.9,437.5 1252.7,443.2 1261.9,445.5 1268.8,427.2 1280.2,430.6 1269.9,458.1 1260.7,461.5 1210.3,443.2" stroke="#c4c3b9" stroke-width="0.5"/>
<polygon points="1221.7,407.8 1233.1,408.9 1230.9,411.1 1219.5,410"/>
<polygon points="1233.1,408.9 1227.4,433 1225.2,435.2 1230.9,411.1"/>
<polygon points="1227.4,433 1236.6,435.3 1234.4,437.5 1225.2,435.2"/>
<polygon points="1236.6,435.3 1237.7,430.7 1235.5,432.9 1234.4,437.5"/>
<polygon points="1237.7,430.7 1256.1,435.3 1253.9,437.5 1235.5,432.9"/>
<polygon points="1256.1,435.3 1254.9,441 1252.7,443.2 1253.9,437.5"/>
<polygon points="1254.9,441 1264.1,443.3 1261.9,445.5 1252.7,443.2"/>
<polygon points="1264.1,443.3 1271,425 1268.8,427.2 1261.9,445.5"/>
<polygon points="1271,425 1282.4,428.4 1280.2,430.6 1268.8,427.2"/>
<polygon points="1282.4,428.4 1272.1,455.9 1269.9,458.1 1280.2,430.6"/>
<polygon points="1272.1,455.9 1262.9,459.3 1260.7,461.5 1269.9,458.1"/>
<polygon points="1262.9,459.3 1212.5,441 1210.3,443.2 1260.7,461.5"/>
<polygon points="1212.5,441 1221.7,407.8 1219.5,410 1210.3,443.2"/>
<polygon points="1308.9,426 1321.5,427.2 1313.4,457 1351.3,468.4 1354.7,465 1362,467.3 1362,479.9 1353.6,481 1344.4,512 1322.6,503.9 1330.6,476.4 1300.8,466.1" stroke="#c4c3b9" stroke-width="0.5"/>
<polygon points="1311.1,423.8 1323.7,425 1321.5,427.2 1308.9,426"/>
<polygon points="1323.7,425 1315.6,454.8 1313.4,457 1321.5,427.2"/>
<polygon points="1315.6,454.8 1353.5,466.2 1351.3,468.4 1313.4,457"/>
<polygon points="1353.5,466.2 1356.9,462.8 1354.7,465 1351.3,468.4"/>
<polygon points="1356.9,462.8 1364.2,465.1 1362,467.3 1354.7,465"/>
<polygon points="1364.2,465.1 1364.2,477.7 1362,479.9 1362,467.3"/>
<polygon points="1364.2,477.7 1355.8,478.8 1353.6,481 1362,479.9"/>
<polygon points="1355.8,478.8 1346.6,509.8 1344.4,512 1353.6,481"/>
<polygon points="1346.6,509.8 1324.8,501.7 1322.6,503.9 1344.4,512"/>
<polygon points="1324.8,501.7 1332.8,474.2 1330.6,476.4 1322.6,503.9"/>
<polygon points="1332.8,474.2 1303,463.9 1300.8,466.1 1330.6,476.4"/>
<polygon points="1303,463.9 1311.1,423.8 1308.9,426 1300.8,466.1"/>
<polygon points="624.1,564.2 641.3,564.2 636.7,581.4 621.8,578" stroke="#c4c3b9" stroke-width="0.5"/>
<polygon points="626.3,562 643.5,562 641.3,564.2 624.1,564.2"/>
<polygon points="643.5,562 638.9,579.2 636.7,581.4 641.3,564.2"/>
<polygon points="638.9,579.2 624,575.8 621.8,578 636.7,581.4"/>
<polygon points="624,575.8 626.3,562 624.1,564.2 621.8,578"/>
<polygon points="727.3,560.2 712.4,609.5 723.6,612.9 738.5,563.6" stroke="#c4c3b9" stroke-width="0.5"/>
<polygon points="729.5,558 714.6,607.3 712.4,609.5 727.3,560.2"/>
<polygon points="714.6,607.3 725.8,610.7 723.6,612.9 712.4,609.5"/>
<polygon points="725.8,610.7 740.7,561.4 738.5,563.6 723.6,612.9"/>
<polygon points="740.7,561.4 729.5,558 727.3,560.2 738.5,563.6"/>
<polygon points="672.2,608.9 685.9,611.2 720.3,621.5 715.7,638.7 668.8,624.9" stroke="#c4c3b9" stroke-width="0.5"/>
<polygon points="674.4,606.7 688.1,609 685.9,611.2 672.2,608.9"/>
<polygon points="688.1,609 722.5,619.3 720.3,621.5 685.9,611.2"/>
<polygon points="722.5,619.3 717.9,636.5 715.7,638.7 720.3,621.5"/>
<polygon points="717.9,636.5 671,622.7 668.8,624.9 715.7,638.7"/>
<polygon points="671,622.7 674.4,606.7 672.2,608.9 668.8,624.9"/>
<polygon points="491.1,590.6 522.1,599.7 516.3,613.5 486.6,605.5" stroke="#c4c3b9" stroke-width="0.5"/>
<polygon points="493.3,588.4 524.3,597.5 522.1,599.7 491.1,590.6"/>
<polygon points="524.3,597.5 518.5,611.3 516.3,613.5 522.1,599.7"/>
<polygon points="518.5,611.3 488.8,603.3 486.6,605.5 516.3,613.5"/>
<polygon points="488.8,603.3 493.3,588.4 491.1,590.6 486.6,605.5"/>
<polygon points="486.7,614.2 478.7,642.8 489.9,646 497.9,617.4" stroke="#c4c3b9" stroke-width="0.5"/>
<polygon points="488.9,612 480.9,640.6 478.7,642.8 486.7,614.2"/>
<polygon points="480.9,640.6 492.1,643.8 489.9,646 478.7,642.8"/>
<polygon points="492.1,643.8 500.1,615.2 497.9,617.4 489.9,646"/>
<polygon points="500.1,615.2 488.9,612 486.7,614.2 497.9,617.4"/>
<polygon points="530.1,602 557.6,611.2 551.9,624.9 525.5,615.8" stroke="#c4c3b9" stroke-width="0.5"/>
<polygon points="532.3,599.8 559.8,609 557.6,611.2 530.1,602"/>
<polygon points="559.8,609 554.1,622.7 551.9,624.9 557.6,611.2"/>
<polygon points="554.1,622.7 527.7,613.6 525.5,615.8 551.9,624.9"/>
<polygon points="527.7,613.6 532.3,599.8 530.1,602 525.5,615.8"/>
<polygon points="566.8,615.8 595.4,624.9 590.8,637.5 562.2,628.4" stroke="#c4c3b9" stroke-width="0.5"/>
<polygon points="569,613.6 597.6,622.7 595.4,624.9 566.8,615.8"/>
<polygon points="597.6,622.7 593,635.3 590.8,637.5 595.4,624.9"/>
<polygon points="593,635.3 564.4,626.2 562.2,628.4 590.8,637.5"/>
<polygon points="564.4,626.2 569,613.6 566.8,615.8 562.2,628.4"/>
<polygon points="604.6,628.4 632.1,637.5 627.5,649 601.1,639.8" stroke="#c4c3b9" stroke-width="0.5"/>
<polygon points="606.8,626.2 634.3,635.3 632.1,637.5 604.6,628.4"/>
<polygon points="634.3,635.3 629.7,646.8 627.5,649 632.1,637.5"/>
<polygon points="629.7,646.8 603.3,637.6 601.1,639.8 627.5,649"/>
<polygon points="603.3,637.6 606.8,626.2 604.6,628.4 601.1,639.8"/>
<polygon points="641.3,642.1 669.9,651.3 664.2,662.7 637.8,653.6" stroke="#c4c3b9" stroke-width="0.5"/>
<polygon points="643.5,639.9 672.1,649.1 669.9,651.3 641.3,642.1"/>
<polygon points="672.1,649.1 666.4,660.5 664.2,662.7 669.9,651.3"/>
<polygon points="666.4,660.5 640,651.4 637.8,653.6 664.2,662.7"/>
<polygon points="640,651.4 643.5,639.9 641.3,642.1 637.8,653.6"/>
<polygon points="677.9,652.4 706.6,661.6 698.5,677.6 674.5,665" stroke="#c4c3b9" stroke-width="0.5"/>
<polygon points="680.1,650.2 708.8,659.4 706.6,661.6 677.9,652.4"/>
<polygon points="708.8,659.4 700.7,675.4 698.5,677.6 706.6,661.6"/>
<polygon points="700.7,675.4 676.7,662.8 674.5,665 698.5,677.6"/>
<polygon points="676.7,662.8 680.1,650.2 677.9,652.4 674.5,665"/>
<polygon points="539.3,636.4 567.9,645.6 562.2,657 535.8,647.9" stroke="#c4c3b9" stroke-width="0.5"/>
<polygon points="541.5,634.2 570.1,643.4 567.9,645.6 539.3,636.4"/>
<polygon points="570.1,643.4 564.4,654.8 562.2,657 567.9,645.6"/>
<polygon points="564.4,654.8 538,645.7 535.8,647.9 562.2,657"/>
<polygon points="538,645.7 541.5,634.2 539.3,636.4 535.8,647.9"/>
<polygon points="577.1,647.9 604.6,657 598.9,670.8 573.6,660.5" stroke="#c4c3b9" stroke-width="0.5"/>
<polygon points="579.3,645.7 606.8,654.8 604.6,657 577.1,647.9"/>
<polygon points="606.8,654.8 601.1,668.6 598.9,670.8 604.6,657"/>
<polygon points="601.1,668.6 575.8,658.3 573.6,660.5 598.9,670.8"/>
<polygon points="575.8,658.3 579.3,645.7 577.1,647.9 573.6,660.5"/>
<polygon points="616,660.5 644.7,670.8 639,682.2 611.5,671.9" stroke="#c4c3b9" stroke-width="0.5"/>
<polygon points="618.2,658.3 646.9,668.6 644.7,670.8 616,660.5"/>
<polygon points="646.9,668.6 641.2,680 639,682.2 644.7,670.8"/>
<polygon points="641.2,680 613.7,669.7 611.5,671.9 639,682.2"/>
<polygon points="613.7,669.7 618.2,658.3 616,660.5 611.5,671.9"/>
<polygon points="499.2,650.1 527.8,658.2 519.8,686.8 492.3,679.9" stroke="#c4c3b9" stroke-width="0.5"/>
<polygon points="501.4,647.9 530,656 527.8,658.2 499.2,650.1"/>
<polygon points="530,656 522,684.6 519.8,686.8 527.8,658.2"/>
<polygon points="522,684.6 494.5,677.7 492.3,679.9 519.8,686.8"/>
<polygon points="494.5,677.7 501.4,647.9 499.2,650.1 492.3,679.9"/>
<polygon points="524.4,681.1 554.2,690.3 550.7,701.7 520.9,692.5" stroke="#c4c3b9" stroke-width="0.5"/>
<polygon points="526.6,678.9 556.4,688.1 554.2,690.3 524.4,681.1"/>
<polygon points="556.4,688.1 552.9,699.5 550.7,701.7 554.2,690.3"/>
<polygon points="552.9,699.5 523.1,690.3 520.9,692.5 550.7,701.7"/>
<polygon points="523.1,690.3 526.6,678.9 524.4,681.1 520.9,692.5"/>
<polygon points="569.1,670.8 601.1,681.1 595.4,693.7 564.5,683.4" stroke="#c4c3b9" stroke-width="0.5"/>
<polygon points="571.3,668.6 603.3,678.9 601.1,681.1 569.1,670.8"/>
<polygon points="603.3,678.9 597.6,691.5 595.4,693.7 601.1,681.1"/>
<polygon points="597.6,691.5 566.7,681.2 564.5,683.4 595.4,693.7"/>
<polygon points="566.7,681.2 571.3,668.6 569.1,670.8 564.5,683.4"/>
<polygon points="608,683.4 636.7,692.5 632.1,702.9 602.3,692.5" stroke="#c4c3b9" stroke-width="0.5"/>
<polygon points="610.2,681.2 638.9,690.3 636.7,692.5 608,683.4"/>
<polygon points="638.9,690.3 634.3,700.7 632.1,702.9 636.7,692.5"/>
<polygon points="634.3,700.7 604.5,690.3 602.3,692.5 632.1,702.9"/>
<polygon points="604.5,690.3 610.2,681.2 608,683.4 602.3,692.5"/>
<polygon points="558.7,697.1 592,706.3 588.5,715.5 555.3,707.4" stroke="#c4c3b9" stroke-width="0.5"/>
<polygon points="560.9,694.9 594.2,704.1 592,706.3 558.7,697.1"/>
<polygon points="594.2,704.1 590.7,713.3 588.5,715.5 592,706.3"/>
<polygon points="590.7,713.3 557.5,705.2 555.3,707.4 588.5,715.5"/>
<polygon points="557.5,705.2 560.9,694.9 558.7,697.1 555.3,707.4"/>
<polygon points="597.7,705.1 630.9,715.5 626.4,726.9 594.3,716.6" stroke="#c4c3b9" stroke-width="0.5"/>
<polygon points="599.9,702.9 633.1,713.3 630.9,715.5 597.7,705.1"/>
<polygon points="633.1,713.3 628.6,724.7 626.4,726.9 630.9,715.5"/>
<polygon points="628.6,724.7 596.5,714.4 594.3,716.6 626.4,726.9"/>
<polygon points="596.5,714.4 599.9,702.9 597.7,705.1 594.3,716.6"/>
<polygon points="640.1,697.1 665.3,705.1 656.1,732.7 630.9,724.6 633.2,716.6 649.3,721.2 652.7,710.9 636.7,706.3" stroke="#c4c3b9" stroke-width="0.5"/>
<polygon points="642.3,694.9 667.5,702.9 665.3,705.1 640.1,697.1"/>
<polygon points="667.5,702.9 658.3,730.5 656.1,732.7 665.3,705.1"/>
<polygon points="658.3,730.5 633.1,722.4 630.9,724.6 656.1,732.7"/>
<polygon points="633.1,722.4 635.4,714.4 633.2,716.6 630.9,724.6"/>
<polygon points="635.4,714.4 651.5,719 649.3,721.2 633.2,716.6"/>
<polygon points="651.5,719 654.9,708.7 652.7,710.9 649.3,721.2"/>
<polygon points="654.9,708.7 638.9,704.1 636.7,706.3 652.7,710.9"/>
<polygon points="638.9,704.1 642.3,694.9 640.1,697.1 636.7,706.3"/>
<polygon points="668.1,719.6 674.5,721.2 672.6,726.5 667.1,724.6" stroke="#c4c3b9" stroke-width="0.5"/>
<polygon points="670.3,717.4 676.7,719 674.5,721.2 668.1,719.6"/>
<polygon points="676.7,719 674.8,724.3 672.6,726.5 674.5,721.2"/>
<polygon points="674.8,724.3 669.3,722.4 667.1,724.6 672.6,726.5"/>
<polygon points="669.3,722.4 670.3,717.4 668.1,719.6 667.1,724.6"/>
<polygon points="486.6,694.8 502.6,699.4 499.2,710.9 483.1,706.3" stroke="#c4c3b9" stroke-width="0.5"/>
<polygon points="488.8,692.6 504.8,697.2 502.6,699.4 486.6,694.8"/>
<polygon points="504.8,697.2 501.4,708.7 499.2,710.9 502.6,699.4"/>
<polygon points="501.4,708.7 485.3,704.1 483.1,706.3 499.2,710.9"/>
<polygon points="485.3,704.1 488.8,692.6 486.6,694.8 483.1,706.3"/>
<polygon points="553,720 582.8,728.1 579.4,738.4 549.6,731.5" stroke="#c4c3b9" stroke-width="0.5"/>
<polygon points="555.2,717.8 585,725.9 582.8,728.1 553,720"/>
<polygon points="585,725.9 581.6,736.2 579.4,738.4 582.8,728.1"/>
<polygon points="581.6,736.2 551.8,729.3 549.6,731.5 579.4,738.4"/>
<polygon points="551.8,729.3 555.2,717.8 553,720 549.6,731.5"/>
<polygon points="491.1,723.5 520.9,732.7 518.6,740.2 487.7,740.2" stroke="#c4c3b9" stroke-width="0.5"/>
<polygon points="493.3,721.3 523.1,730.5 520.9,732.7 491.1,723.5"/>
<polygon points="523.1,730.5 520.8,738 518.6,740.2 520.9,732.7"/>
<polygon points="520.8,738 489.9,738 487.7,740.2 518.6,740.2"/>
<polygon points="489.9,738 493.3,721.3 491.1,723.5 487.7,740.2"/>
<polygon points="472.8,671.9 479.7,674.2 477.4,688 472.8,686.8" stroke="#c4c3b9" stroke-width="0.5"/>
<polygon points="475,669.7 481.9,672 479.7,674.2 472.8,671.9"/>
<polygon points="481.9,672 479.6,685.8 477.4,688 479.7,674.2"/>
<polygon points="479.6,685.8 475,684.6 472.8,686.8 477.4,688"/>
<polygon points="475,684.6 475,669.7 472.8,671.9 472.8,686.8"/>
<polygon points="472.8,715.5 483.1,718.9 479.7,730.4 472.8,728.1" stroke="#c4c3b9" stroke-width="0.5"/>
<polygon points="475,713.3 485.3,716.7 483.1,718.9 472.8,715.5"/>
<polygon points="485.3,716.7 481.9,728.2 479.7,730.4 483.1,718.9"/>
<polygon points="481.9,728.2 475,725.9 472.8,728.1 479.7,730.4"/>
<polygon points="475,725.9 475,713.3 472.8,715.5 472.8,728.1"/>
<polygon points="592,731.5 608,733.8 610.3,740.2 589.7,740.2" stroke="#c4c3b9" stroke-width="0.5"/>
<polygon points="594.2,729.3 610.2,731.6 608,733.8 592,731.5"/>
<polygon points="610.2,731.6 612.5,738 610.3,740.2 608,733.8"/>
<polygon points="612.5,738 591.9,738 589.7,740.2 610.3,740.2"/>
<polygon points="591.9,738 594.2,729.3 592,731.5 589.7,740.2"/>
<polygon points="686,680.7 677.9,710.5 689.3,713.5 697.4,683.7" stroke="#c4c3b9" stroke-width="0.5"/>
<polygon points="688.2,678.5 680.1,708.3 677.9,710.5 686,680.7"/>
<polygon points="680.1,708.3 691.5,711.3 689.3,713.5 677.9,710.5"/>
<polygon points="691.5,711.3 699.6,681.5 697.4,683.7 689.3,713.5"/>
<polygon points="699.6,681.5 688.2,678.5 686,680.7 697.4,683.7"/>
<polygon points="757.7,676.9 748.6,701 758.6,704.8 767.7,680.7" stroke="#c4c3b9" stroke-width="0.5"/>
<polygon points="759.9,674.7 750.8,698.8 748.6,701 757.7,676.9"/>
<polygon points="750.8,698.8 760.8,702.6 758.6,704.8 748.6,701"/>
<polygon points="760.8,702.6 769.9,678.5 767.7,680.7 758.6,704.8"/>
<polygon points="769.9,678.5 759.9,674.7 757.7,676.9 767.7,680.7"/>
<polygon points="748.2,708.5 739,729.1 749.8,733.9 759,713.3" stroke="#c4c3b9" stroke-width="0.5"/>
<polygon points="750.4,706.3 741.2,726.9 739,729.1 748.2,708.5"/>
<polygon points="741.2,726.9 752,731.7 749.8,733.9 739,729.1"/>
<polygon points="752,731.7 761.2,711.1 759,713.3 749.8,733.9"/>
<polygon points="761.2,711.1 750.4,706.3 748.2,708.5 759,713.3"/>
<polygon points="797.1,562.2 790.2,581.7 801.2,585.7 808.1,566.2" stroke="#c4c3b9" stroke-width="0.5"/>
<polygon points="799.3,560 792.4,579.5 790.2,581.7 797.1,562.2"/>
<polygon points="792.4,579.5 803.4,583.5 801.2,585.7 790.2,581.7"/>
<polygon points="803.4,583.5 810.3,564 808.1,566.2 801.2,585.7"/>
<polygon points="810.3,564 799.3,560 797.1,562.2 808.1,566.2"/>
<polygon points="817.6,579.8 809.6,608.4 820.8,611.6 828.8,583" stroke="#c4c3b9" stroke-width="0.5"/>
<polygon points="819.8,577.6 811.8,606.2 809.6,608.4 817.6,579.8"/>
<polygon points="811.8,606.2 823,609.4 820.8,611.6 809.6,608.4"/>
<polygon points="823,609.4 831,580.8 828.8,583 820.8,611.6"/>
<polygon points="831,580.8 819.8,577.6 817.6,579.8 828.8,583"/>
<polygon points="784.3,591.5 777.4,622.5 788.8,625.1 795.7,594.1" stroke="#c4c3b9" stroke-width="0.5"/>
<polygon points="786.5,589.3 779.6,620.3 777.4,622.5 784.3,591.5"/>
<polygon points="779.6,620.3 791,622.9 788.8,625.1 777.4,622.5"/>
<polygon points="791,622.9 797.9,591.9 795.7,594.1 788.8,625.1"/>
<polygon points="797.9,591.9 786.5,589.3 784.3,591.5 795.7,594.1"/>
<polygon points="771.7,631.6 766,655.6 777.4,658.4 783.1,634.4" stroke="#c4c3b9" stroke-width="0.5"/>
<polygon points="773.9,629.4 768.2,653.4 766,655.6 771.7,631.6"/>
<polygon points="768.2,653.4 779.6,656.2 777.4,658.4 766,655.6"/>
<polygon points="779.6,656.2 785.3,632.2 783.1,634.4 777.4,658.4"/>
<polygon points="785.3,632.2 773.9,629.4 771.7,631.6 783.1,634.4"/>
<polygon points="818.1,560.6 859.3,573.2 862.7,562 821.5,549.4" stroke="#c4c3b9" stroke-width="0.5"/>
<polygon points="820.3,558.4 861.5,571 859.3,573.2 818.1,560.6"/>
<polygon points="861.5,571 864.9,559.8 862.7,562 859.3,573.2"/>
<polygon points="864.9,559.8 823.7,547.2 821.5,549.4 862.7,562"/>
<polygon points="823.7,547.2 820.3,558.4 818.1,560.6 821.5,549.4"/>
<polygon points="874.3,581.3 917.9,593.9 921.1,582.7 877.5,570.1" stroke="#c4c3b9" stroke-width="0.5"/>
<polygon points="876.5,579.1 920.1,591.7 917.9,593.9 874.3,581.3"/>
<polygon points="920.1,591.7 923.3,580.5 921.1,582.7 917.9,593.9"/>
<polygon points="923.3,580.5 879.7,567.9 877.5,570.1 921.1,582.7"/>
<polygon points="879.7,567.9 876.5,579.1 874.3,581.3 877.5,570.1"/>
<polygon points="845.4,593.8 875.2,604.1 879,593.1 849.2,582.8" stroke="#c4c3b9" stroke-width="0.5"/>
<polygon points="847.6,591.6 877.4,601.9 875.2,604.1 845.4,593.8"/>
<polygon points="877.4,601.9 881.2,590.9 879,593.1 875.2,604.1"/>
<polygon points="881.2,590.9 851.4,580.6 849.2,582.8 879,593.1"/>
<polygon points="851.4,580.6 847.6,591.6 845.4,593.8 849.2,582.8"/>
<polygon points="923,591.1 913.9,622.1 925.1,625.5 934.2,594.5" stroke="#c4c3b9" stroke-width="0.5"/>
<polygon points="925.2,588.9 916.1,619.9 913.9,622.1 923,591.1"/>
<polygon points="916.1,619.9 927.3,623.3 925.1,625.5 913.9,622.1"/>
<polygon points="927.3,623.3 936.4,592.3 934.2,594.5 925.1,625.5"/>
<polygon points="936.4,592.3 925.2,588.9 923,591.1 934.2,594.5"/>
<polygon points="892.6,602.7 883.4,631.4 893.6,634.6 902.8,605.9" stroke="#c4c3b9" stroke-width="0.5"/>
<polygon points="894.8,600.5 885.6,629.2 883.4,631.4 892.6,602.7"/>
<polygon points="885.6,629.2 895.8,632.4 893.6,634.6 883.4,631.4"/>
<polygon points="895.8,632.4 905,603.7 902.8,605.9 893.6,634.6"/>
<polygon points="905,603.7 894.8,600.5 892.6,602.7 902.8,605.9"/>
<polygon points="911.9,629.1 902.7,658.9 913.3,662.1 922.5,632.3" stroke="#c4c3b9" stroke-width="0.5"/>
<polygon points="914.1,626.9 904.9,656.7 902.7,658.9 911.9,629.1"/>
<polygon points="904.9,656.7 915.5,659.9 913.3,662.1 902.7,658.9"/>
<polygon points="915.5,659.9 924.7,630.1 922.5,632.3 913.3,662.1"/>
<polygon points="924.7,630.1 914.1,626.9 911.9,629.1 922.5,632.3"/>
<polygon points="897.8,667.9 888.7,697.7 899.9,701.1 909,671.3" stroke="#c4c3b9" stroke-width="0.5"/>
<polygon points="900,665.7 890.9,695.5 888.7,697.7 897.8,667.9"/>
<polygon points="890.9,695.5 902.1,698.9 899.9,701.1 888.7,697.7"/>
<polygon points="902.1,698.9 911.2,669.1 909,671.3 899.9,701.1"/>
<polygon points="911.2,669.1 900,665.7 897.8,667.9 909,671.3"/>
<polygon points="787.1,662.1 811.2,670.1 814.6,659.9 790.5,651.9" stroke="#c4c3b9" stroke-width="0.5"/>
<polygon points="789.3,659.9 813.4,667.9 811.2,670.1 787.1,662.1"/>
<polygon points="813.4,667.9 816.8,657.7 814.6,659.9 811.2,670.1"/>
<polygon points="816.8,657.7 792.7,649.7 790.5,651.9 814.6,659.9"/>
<polygon points="792.7,649.7 789.3,659.9 787.1,662.1 790.5,651.9"/>
<polygon points="848.7,682 877.4,692.3 881.4,681.3 852.7,671" stroke="#c4c3b9" stroke-width="0.5"/>
<polygon points="850.9,679.8 879.6,690.1 877.4,692.3 848.7,682"/>
<polygon points="879.6,690.1 883.6,679.1 881.4,681.3 877.4,692.3"/>
<polygon points="883.6,679.1 854.9,668.8 852.7,671 881.4,681.3"/>
<polygon points="854.9,668.8 850.9,679.8 848.7,682 852.7,671"/>
<polygon points="979.9,600.5 952.4,626.9 959.8,634.5 987.3,608.1" stroke="#c4c3b9" stroke-width="0.5"/>
<polygon points="982.1,598.3 954.6,624.7 952.4,626.9 979.9,600.5"/>
<polygon points="954.6,624.7 962,632.3 959.8,634.5 952.4,626.9"/>
<polygon points="962,632.3 989.5,605.9 987.3,608.1 959.8,634.5"/>
<polygon points="989.5,605.9 982.1,598.3 979.9,600.5 987.3,608.1"/>
<polygon points="961.5,645.2 939.7,667 947.3,674.6 969.1,652.8" stroke="#c4c3b9" stroke-width="0.5"/>
<polygon points="963.7,643 941.9,664.8 939.7,667 961.5,645.2"/>
<polygon points="941.9,664.8 949.5,672.4 947.3,674.6 939.7,667"/>
<polygon points="949.5,672.4 971.3,650.6 969.1,652.8 947.3,674.6"/>
<polygon points="971.3,650.6 963.7,643 961.5,645.2 969.1,652.8"/>
<polygon points="951.2,684.2 929.4,705.9 937,713.5 958.8,691.8" stroke="#c4c3b9" stroke-width="0.5"/>
<polygon points="953.4,682 931.6,703.7 929.4,705.9 951.2,684.2"/>
<polygon points="931.6,703.7 939.2,711.3 937,713.5 929.4,705.9"/>
<polygon points="939.2,711.3 961,689.6 958.8,691.8 937,713.5"/>
<polygon points="961,689.6 953.4,682 951.2,684.2 958.8,691.8"/>
<polygon points="994.5,619.1 1040.3,634 1043.9,622.8 998.1,607.9" stroke="#c4c3b9" stroke-width="0.5"/>
<polygon points="996.7,616.9 1042.5,631.8 1040.3,634 994.5,619.1"/>
<polygon points="1042.5,631.8 1046.1,620.6 1043.9,622.8 1040.3,634"/>
<polygon points="1046.1,620.6 1000.3,605.7 998.1,607.9 1043.9,622.8"/>
<polygon points="1000.3,605.7 996.7,616.9 994.5,619.1 998.1,607.9"/>
<polygon points="1050.6,636.3 1075.8,644.3 1079.4,633.1 1054.2,625.1" stroke="#c4c3b9" stroke-width="0.5"/>
<polygon points="1052.8,634.1 1078,642.1 1075.8,644.3 1050.6,636.3"/>
<polygon points="1078,642.1 1081.6,630.9 1079.4,633.1 1075.8,644.3"/>
<polygon points="1081.6,630.9 1056.4,622.9 1054.2,625.1 1079.4,633.1"/>
<polygon points="1056.4,622.9 1052.8,634.1 1050.6,636.3 1054.2,625.1"/>
<polygon points="1011.9,637.2 985.6,663.5 993.2,671.1 1019.5,644.8" stroke="#c4c3b9" stroke-width="0.5"/>
<polygon points="1014.1,635 987.8,661.3 985.6,663.5 1011.9,637.2"/>
<polygon points="987.8,661.3 995.4,668.9 993.2,671.1 985.6,663.5"/>
<polygon points="995.4,668.9 1021.7,642.6 1019.5,644.8 993.2,671.1"/>
<polygon points="1021.7,642.6 1014.1,635 1011.9,637.2 1019.5,644.8"/>
<polygon points="1000.4,676.2 978.6,699.2 986.4,706.6 1008.2,683.6" stroke="#c4c3b9" stroke-width="0.5"/>
<polygon points="1002.6,674 980.8,697 978.6,699.2 1000.4,676.2"/>
<polygon points="980.8,697 988.6,704.4 986.4,706.6 978.6,699.2"/>
<polygon points="988.6,704.4 1010.4,681.4 1008.2,683.6 986.4,706.6"/>
<polygon points="1010.4,681.4 1002.6,674 1000.4,676.2 1008.2,683.6"/>
<polygon points="1058.9,649.8 1036,672.7 1043.6,680.3 1066.5,657.4" stroke="#c4c3b9" stroke-width="0.5"/>
<polygon points="1061.1,647.6 1038.2,670.5 1036,672.7 1058.9,649.8"/>
<polygon points="1038.2,670.5 1045.8,678.1 1043.6,680.3 1036,672.7"/>
<polygon points="1045.8,678.1 1068.7,655.2 1066.5,657.4 1043.6,680.3"/>
<polygon points="1068.7,655.2 1061.1,647.6 1058.9,649.8 1066.5,657.4"/>
<polygon points="1045.1,690 1024.4,711.8 1032.2,719.2 1052.9,697.4" stroke="#c4c3b9" stroke-width="0.5"/>
<polygon points="1047.3,687.8 1026.6,709.6 1024.4,711.8 1045.1,690"/>
<polygon points="1026.6,709.6 1034.4,717 1032.2,719.2 1024.4,711.8"/>
<polygon points="1034.4,717 1055.1,695.2 1052.9,697.4 1032.2,719.2"/>
<polygon points="1055.1,695.2 1047.3,687.8 1045.1,690 1052.9,697.4"/>
<polygon points="983.2,726.3 1013,735.5 1016.2,725.3 986.4,716.1" stroke="#c4c3b9" stroke-width="0.5"/>
<polygon points="985.4,724.1 1015.2,733.3 1013,735.5 983.2,726.3"/>
<polygon points="1015.2,733.3 1018.4,723.1 1016.2,725.3 1013,735.5"/>
<polygon points="1018.4,723.1 988.6,713.9 986.4,716.1 1016.2,725.3"/>
<polygon points="988.6,713.9 985.4,724.1 983.2,726.3 986.4,716.1"/>
<polygon points="962.4,720 956.7,744.1 967.1,746.5 972.8,722.4" stroke="#c4c3b9" stroke-width="0.5"/>
<polygon points="964.6,717.8 958.9,741.9 956.7,744.1 962.4,720"/>
<polygon points="958.9,741.9 969.3,744.3 967.1,746.5 956.7,744.1"/>
<polygon points="969.3,744.3 975,720.2 972.8,722.4 967.1,746.5"/>
<polygon points="975,720.2 964.6,717.8 962.4,720 972.8,722.4"/>
<polygon points="883.3,718.8 877.6,744.1 888,746.5 893.7,721.2" stroke="#c4c3b9" stroke-width="0.5"/>
<polygon points="885.5,716.6 879.8,741.9 877.6,744.1 883.3,718.8"/>
<polygon points="879.8,741.9 890.2,744.3 888,746.5 877.6,744.1"/>
<polygon points="890.2,744.3 895.9,719 893.7,721.2 888,746.5"/>
<polygon points="895.9,719 885.5,716.6 883.3,718.8 893.7,721.2"/>
<polygon points="1071.1,708.8 1032.4,740.9 1035.8,745.1 1074.5,713" stroke="#c4c3b9" stroke-width="0.5"/>
<polygon points="1073.3,706.6 1034.6,738.7 1032.4,740.9 1071.1,708.8"/>
<polygon points="1034.6,738.7 1038,742.9 1035.8,745.1 1032.4,740.9"/>
<polygon points="1038,742.9 1076.7,710.8 1074.5,713 1035.8,745.1"/>
<polygon points="1076.7,710.8 1073.3,706.6 1071.1,708.8 1074.5,713"/>
<polygon points="830.1,627.2 857.6,636.4 849.6,654.7 824.4,645.6" stroke="#c4c3b9" stroke-width="0.5"/>
<polygon points="832.3,625 859.8,634.2 857.6,636.4 830.1,627.2"/>
<polygon points="859.8,634.2 851.8,652.5 849.6,654.7 857.6,636.4"/>
<polygon points="851.8,652.5 826.6,643.4 824.4,645.6 849.6,654.7"/>
<polygon points="826.6,643.4 832.3,625 830.1,627.2 824.4,645.6"/>
<polygon points="780.8,684.5 804.9,692.5 800.3,704 777.4,697.1" stroke="#c4c3b9" stroke-width="0.5"/>
<polygon points="783,682.3 807.1,690.3 804.9,692.5 780.8,684.5"/>
<polygon points="807.1,690.3 802.5,701.8 800.3,704 804.9,692.5"/>
<polygon points="802.5,701.8 779.6,694.9 777.4,697.1 800.3,704"/>
<polygon points="779.6,694.9 783,682.3 780.8,684.5 777.4,697.1"/>
<polygon points="814.1,697.1 834.7,704 830.1,715.5 810.6,708.6" stroke="#c4c3b9" stroke-width="0.5"/>
<polygon points="816.3,694.9 836.9,701.8 834.7,704 814.1,697.1"/>
<polygon points="836.9,701.8 832.3,713.3 830.1,715.5 834.7,704"/>
<polygon points="832.3,713.3 812.8,706.4 810.6,708.6 830.1,715.5"/>
<polygon points="812.8,706.4 816.3,694.9 814.1,697.1 810.6,708.6"/>
<polygon points="845,706.3 870.2,714.3 865.6,725.8 841.6,716.6" stroke="#c4c3b9" stroke-width="0.5"/>
<polygon points="847.2,704.1 872.4,712.1 870.2,714.3 845,706.3"/>
<polygon points="872.4,712.1 867.8,723.6 865.6,725.8 870.2,714.3"/>
<polygon points="867.8,723.6 843.8,714.4 841.6,716.6 865.6,725.8"/>
<polygon points="843.8,714.4 847.2,704.1 845,706.3 841.6,716.6"/>
<polygon points="806,723.5 824.4,729.2 822.1,740.2 803.7,740.2" stroke="#c4c3b9" stroke-width="0.5"/>
<polygon points="808.2,721.3 826.6,727 824.4,729.2 806,723.5"/>
<polygon points="826.6,727 824.3,738 822.1,740.2 824.4,729.2"/>
<polygon points="824.3,738 805.9,738 803.7,740.2 822.1,740.2"/>
<polygon points="805.9,738 808.2,721.3 806,723.5 803.7,740.2"/>
<polygon points="917.2,732.7 930.9,734.9 929.8,740.2 916,740.2" stroke="#c4c3b9" stroke-width="0.5"/>
<polygon points="919.4,730.5 933.1,732.7 930.9,734.9 917.2,732.7"/>
<polygon points="933.1,732.7 932,738 929.8,740.2 930.9,734.9"/>
<polygon points="932,738 918.2,738 916,740.2 929.8,740.2"/>
<polygon points="918.2,738 919.4,730.5 917.2,732.7 916,740.2"/>
<polygon points="1066.6,644.9 1105.6,657.5 1108.8,647.3 1069.8,634.7" stroke="#c4c3b9" stroke-width="0.5"/>
<polygon points="1068.8,642.7 1107.8,655.3 1105.6,657.5 1066.6,644.9"/>
<polygon points="1107.8,655.3 1111,645.1 1108.8,647.3 1105.6,657.5"/>
<polygon points="1111,645.1 1072,632.5 1069.8,634.7 1108.8,647.3"/>
<polygon points="1072,632.5 1068.8,642.7 1066.6,644.9 1069.8,634.7"/>
<polygon points="1099.5,664 1083.5,684.7 1091.9,691.3 1107.9,670.6" stroke="#c4c3b9" stroke-width="0.5"/>
<polygon points="1101.7,661.8 1085.7,682.5 1083.5,684.7 1099.5,664"/>
<polygon points="1085.7,682.5 1094.1,689.1 1091.9,691.3 1083.5,684.7"/>
<polygon points="1094.1,689.1 1110.1,668.4 1107.9,670.6 1091.9,691.3"/>
<polygon points="1110.1,668.4 1101.7,661.8 1099.5,664 1107.9,670.6"/>
<polygon points="1125.1,671.3 1167.5,685 1170.7,674.8 1128.3,661.1" stroke="#c4c3b9" stroke-width="0.5"/>
<polygon points="1127.3,669.1 1169.7,682.8 1167.5,685 1125.1,671.3"/>
<polygon points="1169.7,682.8 1172.9,672.6 1170.7,674.8 1167.5,685"/>
<polygon points="1172.9,672.6 1130.5,658.9 1128.3,661.1 1170.7,674.8"/>
<polygon points="1130.5,658.9 1127.3,669.1 1125.1,671.3 1128.3,661.1"/>
<polygon points="1186.2,675.4 1201.1,678.8 1198.9,689.1 1265.3,708.6 1261.9,720 1197.7,699.4 1182.8,689.1" stroke="#c4c3b9" stroke-width="0.5"/>
<polygon points="1188.4,673.2 1203.3,676.6 1201.1,678.8 1186.2,675.4"/>
<polygon points="1203.3,676.6 1201.1,686.9 1198.9,689.1 1201.1,678.8"/>
<polygon points="1201.1,686.9 1267.5,706.4 1265.3,708.6 1198.9,689.1"/>
<polygon points="1267.5,706.4 1264.1,717.8 1261.9,720 1265.3,708.6"/>
<polygon points="1264.1,717.8 1199.9,697.2 1197.7,699.4 1261.9,720"/>
<polygon points="1199.9,697.2 1185,686.9 1182.8,689.1 1197.7,699.4"/>
<polygon points="1185,686.9 1188.4,673.2 1186.2,675.4 1182.8,689.1"/>
<polygon points="1257.3,699.4 1280.2,708.6 1276.8,717.8 1256.1,712" stroke="#c4c3b9" stroke-width="0.5"/>
<polygon points="1259.5,697.2 1282.4,706.4 1280.2,708.6 1257.3,699.4"/>
<polygon points="1282.4,706.4 1279,715.6 1276.8,717.8 1280.2,708.6"/>
<polygon points="1279,715.6 1258.3,709.8 1256.1,712 1276.8,717.8"/>
<polygon points="1258.3,709.8 1259.5,697.2 1257.3,699.4 1256.1,712"/>
<polygon points="1089.1,714.6 1135,733 1139,723.2 1093.1,704.8" stroke="#c4c3b9" stroke-width="0.5"/>
<polygon points="1091.3,712.4 1137.2,730.8 1135,733 1089.1,714.6"/>
<polygon points="1137.2,730.8 1141.2,721 1139,723.2 1135,733"/>
<polygon points="1141.2,721 1095.3,702.6 1093.1,704.8 1139,723.2"/>
<polygon points="1095.3,702.6 1091.3,712.4 1089.1,714.6 1093.1,704.8"/>
<polygon points="1139.8,715.9 1187.9,733.1 1191.5,723.1 1143.4,705.9" stroke="#c4c3b9" stroke-width="0.5"/>
<polygon points="1142,713.7 1190.1,730.9 1187.9,733.1 1139.8,715.9"/>
<polygon points="1190.1,730.9 1193.7,720.9 1191.5,723.1 1187.9,733.1"/>
<polygon points="1193.7,720.9 1145.6,703.7 1143.4,705.9 1191.5,723.1"/>
<polygon points="1145.6,703.7 1142,713.7 1139.8,715.9 1143.4,705.9"/>
<polygon points="1072.8,706.3 1082,705.1 1075.1,717.8 1072.8,716.6" stroke="#c4c3b9" stroke-width="0.5"/>
<polygon points="1075,704.1 1084.2,702.9 1082,705.1 1072.8,706.3"/>
<polygon points="1084.2,702.9 1077.3,715.6 1075.1,717.8 1082,705.1"/>
<polygon points="1077.3,715.6 1075,714.4 1072.8,716.6 1075.1,717.8"/>
<polygon points="1075,714.4 1075,704.1 1072.8,706.3 1072.8,716.6"/>
<polygon points="1275.1,724.3 1269.4,743.8 1279.6,746.8 1285.3,727.3" stroke="#c4c3b9" stroke-width="0.5"/>
<polygon points="1277.3,722.1 1271.6,741.6 1269.4,743.8 1275.1,724.3"/>
<polygon points="1271.6,741.6 1281.8,744.6 1279.6,746.8 1269.4,743.8"/>
<polygon points="1281.8,744.6 1287.5,725.1 1285.3,727.3 1279.6,746.8"/>
<polygon points="1287.5,725.1 1277.3,722.1 1275.1,724.3 1285.3,727.3"/>
<polygon points="1193.1,734.3 1201.1,733.3 1202.3,740.2 1192,740.2" stroke="#c4c3b9" stroke-width="0.5"/>
<polygon points="1195.3,732.1 1203.3,731.1 1201.1,733.3 1193.1,734.3"/>
<polygon points="1203.3,731.1 1204.5,738 1202.3,740.2 1201.1,733.3"/>
<polygon points="1204.5,738 1194.2,738 1192,740.2 1202.3,740.2"/>
<polygon points="1194.2,738 1195.3,732.1 1193.1,734.3 1192,740.2"/>
<polygon points="1216,733.3 1230.9,732.7 1230.9,740.2 1214.9,740.2" stroke="#c4c3b9" stroke-width="0.5"/>
<polygon points="1218.2,731.1 1233.1,730.5 1230.9,732.7 1216,733.3"/>
<polygon points="1233.1,730.5 1233.1,738 1230.9,740.2 1230.9,732.7"/>
<polygon points="1233.1,738 1217.1,738 1214.9,740.2 1230.9,740.2"/>
<polygon points="1217.1,738 1218.2,731.1 1216,733.3 1214.9,740.2"/>
</g><g fill="#e7e3d3" stroke="#d9d6c2" stroke-width="0.5">
<polygon points="515.1,35.1 543.1,40.2 536.9,56.2 509.4,48.9"/>
<polygon points="475,37.4 483,35.1 484.6,40.9 475,45.5"/>
<polygon points="493.3,83.9 548.3,96.5 550.7,86.1 495.7,73.5"/>
<polygon points="603.3,78.7 610.2,79.8 611.4,83.3 618.2,84.9 620.5,82.1 625.1,83.3 626.3,102.8 622.8,109.6 612.5,111.9 607.9,114.2 604.5,113.1 602.2,117.7 589.6,114.2 595.3,100.5 599.9,87.9"/>
<polygon points="661.9,97.4 681.8,148.3 692.2,144.3 672.3,93.4"/>
<polygon points="722.5,126.8 745.4,114.7 749.6,125.7 728.2,138.3"/>
<polygon points="703,135.3 713.4,136 708.8,142.9 700.7,141.7"/>
<polygon points="645.4,147.4 667.2,196.6 677,192.2 655.2,143"/>
<polygon points="538.7,126.4 525.4,169.9 535.6,173.1 548.9,129.6"/>
<polygon points="577.7,151.4 606.3,160.6 609.5,150.4 580.9,141.2"/>
<polygon points="568,154 555.2,196.4 565.4,199.4 578.2,157"/>
<polygon points="720.2,162.8 727.1,161.9 728.9,166.9 722.1,168.8"/>
<polygon points="722,171.2 734.6,205.1 742.6,202.1 730,168.2"/>
<polygon points="502.5,118.8 516.3,121.1 511.7,132.5 500.2,130.3"/>
<polygon points="478.4,164.6 485.3,165.8 481.9,172.7 476.1,171.5"/>
<polygon points="493.3,165.8 502.5,166.9 499.1,171.5 491,170.4"/>
<polygon points="491.3,159.7 501.6,162.7 503.4,156.5 493.1,153.5"/>
<polygon points="768.8,77 781.8,115.9 792,112.5 779,73.6"/>
<polygon points="825.1,89.8 815.9,119.6 825.7,122.6 834.9,92.8"/>
<polygon points="787.2,125.3 802.1,164.2 812.1,160.4 797.2,121.5"/>
<polygon points="767.2,163.3 785.5,210.3 796.5,206.1 778.2,159.1"/>
<polygon points="945,97.8 930.1,151.7 940.7,154.7 955.6,100.8"/>
<polygon points="979.4,109.1 961.1,164.1 971.7,167.5 990,112.5"/>
<polygon points="891.6,150.4 877.8,192.8 887.6,196 901.4,153.6"/>
<polygon points="953.3,46 993.4,58.6 996.6,48.4 956.5,35.8"/>
<polygon points="1004.9,56.8 1051.9,70.5 1055.1,59.3 1008.1,45.6"/>
<polygon points="1051.2,36.8 1062.6,35.1 1061.5,40.9 1053.5,42"/>
<polygon points="953.3,182 944,213.3 954,216.3 963.3,185"/>
<polygon points="1090.1,32.1 1075.2,74.5 1086.2,78.3 1101.1,35.9"/>
<polygon points="1172.4,61.5 1197.6,55.8 1200.6,64.9 1175.2,72.5"/>
<polygon points="1215.3,77.1 1225.8,76.4 1226.3,89 1215.3,89"/>
<polygon points="1237.7,77.1 1247.3,76.4 1248,89 1238.2,89"/>
<polygon points="1304.2,50 1324.8,47.8 1326,56.9 1315.6,58.1 1316.8,73 1326,74.1 1326,85.6 1282.4,84.4 1281.3,76.4 1290.4,73 1308.8,71.8 1308.8,59.2 1304.2,58.1"/>
<polygon points="1332.8,113.1 1364.2,122.2 1364.2,136 1329.9,125.7"/>
<polygon points="1217.1,197.9 1245.7,199 1246.9,204.7 1258.3,205.4 1259.5,199 1262.9,199 1262.9,210 1214.8,210"/>
<polygon points="583.3,189 567.3,242.9 577.5,245.9 593.5,192"/>
<polygon points="630.4,191.3 646.5,232.5 656.5,228.7 640.4,187.5"/>
<polygon points="653.3,240.5 669.4,281.8 679.4,278 663.3,236.7"/>
<polygon points="690.4,224.9 715.6,215.7 719.1,224.9 695,237.5"/>
<polygon points="680.1,234.1 687,232.9 689.3,238.6 682.4,239.8"/>
<polygon points="684.7,245.5 690.4,242.1 691.6,244.4 687,250.1"/>
<polygon points="694.7,255.5 711.9,296.8 721.7,292.8 704.5,251.5"/>
<polygon points="733.7,260.2 755.4,310.6 765.2,306.4 743.5,256"/>
<polygon points="748,209.7 767.4,263.6 778.4,259.6 759,205.7"/>
<polygon points="505.6,237.5 560.6,252.4 563.6,241 508.6,226.1"/>
<polygon points="475,212.3 481.9,213.4 479.6,226 475,224.9"/>
<polygon points="487.5,270.8 516.1,278.8 518.7,269.6 490.1,261.6"/>
<polygon points="525,281.6 553.6,290.7 556.8,280.5 528.2,271.4"/>
<polygon points="553.2,289.5 538.3,331.9 549.3,335.7 564.2,293.3"/>
<polygon points="507.7,289.9 495.1,332.3 505.3,335.3 517.9,292.9"/>
<polygon points="536,340.9 518.8,389.1 529.8,393.1 547,344.9"/>
<polygon points="495.6,353 486.4,382.8 495.6,385.6 504.8,355.8"/>
<polygon points="589.2,309.7 636.2,322.3 639.2,310.9 592.2,298.3"/>
<polygon points="645.2,327.9 693.3,342.8 696.7,331.6 648.6,316.7"/>
<polygon points="702.4,345.1 751.7,361.1 755.3,349.9 706,333.9"/>
<polygon points="582,323 567.1,373.4 577.7,376.6 592.6,326.2"/>
<polygon points="639.7,347.1 625.9,389.5 635.7,392.7 649.5,350.3"/>
<polygon points="677.5,358.5 667.2,389.5 677,392.7 687.3,361.7"/>
<polygon points="880,220.8 922.4,234.6 925.6,224.4 883.2,210.6"/>
<polygon points="942.3,210 957.2,210 956.1,215.7 943.5,213.4"/>
<polygon points="941.9,216.3 930.4,249.6 940.4,253 951.9,219.7"/>
<polygon points="926.4,263.2 916.1,288.4 924.9,292 935.2,266.8"/>
<polygon points="921.7,306.3 930.8,305.8 929.7,313.6 920.5,312"/>
<polygon points="909.1,316.6 920.5,319.6 914.8,334.9 904.5,332.6"/>
<polygon points="974.4,221 1026,231.8 1024.8,238.6 973.2,228.3"/>
<polygon points="985.8,210 1024.8,214.6 1023.7,220.3 984.7,213.4"/>
<polygon points="958.8,247.7 1029.9,270.6 1033.5,259.4 962.4,236.5"/>
<polygon points="950.5,283.6 1002.1,301.9 1006.3,289.9 954.7,271.6"/>
<polygon points="940.1,309.9 1005.4,329.3 1007.6,322.1 942.3,302.7"/>
<polygon points="1049.5,215.5 1041.5,244.1 1051.7,246.9 1059.7,218.3"/>
<polygon points="1045.3,253.7 1035,290.4 1042.2,292.4 1052.5,255.7"/>
<polygon points="1027.3,296.2 1018.2,321.4 1029.2,325.4 1038.3,300.2"/>
<polygon points="903.9,362.3 958.9,379.5 962.3,368.3 907.3,351.1"/>
<polygon points="972.7,382.9 1025.4,398.9 1028.8,387.7 976.1,371.7"/>
<polygon points="1094.5,215.7 1101.4,214.6 1102.5,220.3 1128.9,220.3 1130,214.6 1135.7,215 1135,223.8 1132.3,231.8 1097.9,231.8 1096.8,223.8"/>
<polygon points="1217.1,210 1284.7,210 1279,224.2 1214.8,213.4"/>
<polygon points="1336.3,210 1364.2,210 1364.2,222.6 1355.8,224.9 1335.1,220.3"/>
<polygon points="1322.5,234.1 1364.2,243.2 1364.2,254.7 1319.1,245.5"/>
<polygon points="1133.7,303.9 1188.7,290.2 1185.9,278.8 1130.9,292.5"/>
<polygon points="1081.9,333.2 1131.2,321.8 1128.8,311.4 1079.5,322.8"/>
<polygon points="1092.3,365.3 1140.5,352.7 1137.9,342.3 1089.7,354.9"/>
<polygon points="1164.3,324 1160.9,359.5 1172.5,360.7 1175.9,325.2"/>
<polygon points="1231.5,256 1213.1,309.8 1218.7,311.8 1237.1,258"/>
<polygon points="1212.3,313.4 1194,364.9 1199,366.7 1217.3,315.2"/>
<polygon points="1189.8,379.7 1184.8,392.3 1189.8,394.3 1194.8,381.7"/>
<polygon points="1260.6,279.9 1317.9,297.1 1311.1,313.1 1271,300.5 1268.7,305.1 1254.9,300.5"/>
<polygon points="1230.2,310.1 1256.5,319.3 1260.1,309.3 1233.8,300.1"/>
<polygon points="1339.7,277.6 1364.2,284.5 1364.2,298.2 1337.4,289.1"/>
<polygon points="1348.9,323.4 1364.2,327.3 1364.2,339.5 1346.6,333.8"/>
<polygon points="1337.4,362.4 1364.2,370.4 1364.2,384.2 1334,373.9"/>
<polygon points="1075,381.9 1096.8,379.6 1097.9,386 1075,386"/>
<polygon points="1354,212 1354,238 1365,238 1365,212"/>
<polygon points="475,395.2 509.4,402 519.7,403.2 516.3,413.5 507.1,414.6 475,407.8"/>
<polygon points="560.5,387.6 551.4,412.8 561.4,416.4 570.5,391.2"/>
<polygon points="557.2,427.8 599.6,440.4 602.6,430.2 560.2,417.6"/>
<polygon points="603.3,386 610.2,387.1 602.2,405.5 581.6,402 582.7,396.3 596.5,397.5"/>
<polygon points="625.1,386 637.7,386 635.4,392.4 624,390.1"/>
<polygon points="733.2,366.3 716,430.4 726.8,433.2 744,369.1"/>
<polygon points="612.1,434.6 660.2,449.5 663.4,439.3 615.3,424.4"/>
<polygon points="662.5,462.1 704.9,475.9 708.1,465.7 665.7,451.9"/>
<polygon points="714.6,438.4 706.6,462.4 715.6,465.4 723.6,441.4"/>
<polygon points="582.7,476.5 594.2,477.7 596.5,473.1 604.5,474.2 599.9,490.3 589.6,489.1 583.9,506.3 572.4,504 577,484.5"/>
<polygon points="602.7,487.3 618.7,493 622.3,483 606.3,477.3"/>
<polygon points="629.1,494.2 663.5,505.7 666.9,495.5 632.5,484"/>
<polygon points="670.5,509.7 714,524.6 717.2,515.6 673.7,500.7"/>
<polygon points="477.3,439.9 507.1,443.3 504.8,452.5 475,449"/>
<polygon points="495.1,459.1 488.2,484.3 498.4,487.1 505.3,461.9"/>
<polygon points="543.8,512.1 563.2,514.3 566.7,523.5 594.2,532.7 598.8,541.8 589.6,562 573.5,560.2 575.8,551 534.6,541.8 528.9,537.3 534.6,518.9 542.6,517.8"/>
<polygon points="610.2,530.4 619.4,529.2 621.7,532.7 633.1,535 629.7,547.6 607.9,541.8"/>
<polygon points="634.9,546.1 629.2,565.6 639.4,568.6 645.1,549.1"/>
<polygon points="734,541.8 750,544.1 746.6,556.7 731.7,553.3"/>
<polygon points="1075,386 1099.1,381.4 1100.2,390.6 1075,397.5"/>
<polygon points="1106.2,420.9 1161.2,406 1158.4,395.8 1103.4,410.7"/>
<polygon points="1186.8,385 1163.9,451.5 1169.5,453.5 1192.4,387"/>
<polygon points="1221.7,407.8 1233.1,408.9 1227.4,433 1236.6,435.3 1237.7,430.7 1256.1,435.3 1254.9,441 1264.1,443.3 1271,425 1282.4,428.4 1272.1,455.9 1262.9,459.3 1212.5,441"/>
<polygon points="1311.1,423.8 1323.7,425 1315.6,454.8 1353.5,466.2 1356.9,462.8 1364.2,465.1 1364.2,477.7 1355.8,478.8 1346.6,509.8 1324.8,501.7 1332.8,474.2 1303,463.9"/>
<polygon points="626.3,562 643.5,562 638.9,579.2 624,575.8"/>
<polygon points="729.5,558 714.6,607.3 725.8,610.7 740.7,561.4"/>
<polygon points="674.4,606.7 688.1,609 722.5,619.3 717.9,636.5 671,622.7"/>
<polygon points="493.3,588.4 524.3,597.5 518.5,611.3 488.8,603.3"/>
<polygon points="488.9,612 480.9,640.6 492.1,643.8 500.1,615.2"/>
<polygon points="532.3,599.8 559.8,609 554.1,622.7 527.7,613.6"/>
<polygon points="569,613.6 597.6,622.7 593,635.3 564.4,626.2"/>
<polygon points="606.8,626.2 634.3,635.3 629.7,646.8 603.3,637.6"/>
<polygon points="643.5,639.9 672.1,649.1 666.4,660.5 640,651.4"/>
<polygon points="680.1,650.2 708.8,659.4 700.7,675.4 676.7,662.8"/>
<polygon points="541.5,634.2 570.1,643.4 564.4,654.8 538,645.7"/>
<polygon points="579.3,645.7 606.8,654.8 601.1,668.6 575.8,658.3"/>
<polygon points="618.2,658.3 646.9,668.6 641.2,680 613.7,669.7"/>
<polygon points="501.4,647.9 530,656 522,684.6 494.5,677.7"/>
<polygon points="526.6,678.9 556.4,688.1 552.9,699.5 523.1,690.3"/>
<polygon points="571.3,668.6 603.3,678.9 597.6,691.5 566.7,681.2"/>
<polygon points="610.2,681.2 638.9,690.3 634.3,700.7 604.5,690.3"/>
<polygon points="560.9,694.9 594.2,704.1 590.7,713.3 557.5,705.2"/>
<polygon points="599.9,702.9 633.1,713.3 628.6,724.7 596.5,714.4"/>
<polygon points="642.3,694.9 667.5,702.9 658.3,730.5 633.1,722.4 635.4,714.4 651.5,719 654.9,708.7 638.9,704.1"/>
<polygon points="670.3,717.4 676.7,719 674.8,724.3 669.3,722.4"/>
<polygon points="488.8,692.6 504.8,697.2 501.4,708.7 485.3,704.1"/>
<polygon points="555.2,717.8 585,725.9 581.6,736.2 551.8,729.3"/>
<polygon points="493.3,721.3 523.1,730.5 520.8,738 489.9,738"/>
<polygon points="475,669.7 481.9,672 479.6,685.8 475,684.6"/>
<polygon points="475,713.3 485.3,716.7 481.9,728.2 475,725.9"/>
<polygon points="594.2,729.3 610.2,731.6 612.5,738 591.9,738"/>
<polygon points="688.2,678.5 680.1,708.3 691.5,711.3 699.6,681.5"/>
<polygon points="759.9,674.7 750.8,698.8 760.8,702.6 769.9,678.5"/>
<polygon points="750.4,706.3 741.2,726.9 752,731.7 761.2,711.1"/>
<polygon points="799.3,560 792.4,579.5 803.4,583.5 810.3,564"/>
<polygon points="819.8,577.6 811.8,606.2 823,609.4 831,580.8"/>
<polygon points="786.5,589.3 779.6,620.3 791,622.9 797.9,591.9"/>
<polygon points="773.9,629.4 768.2,653.4 779.6,656.2 785.3,632.2"/>
<polygon points="820.3,558.4 861.5,571 864.9,559.8 823.7,547.2"/>
<polygon points="876.5,579.1 920.1,591.7 923.3,580.5 879.7,567.9"/>
<polygon points="847.6,591.6 877.4,601.9 881.2,590.9 851.4,580.6"/>
<polygon points="925.2,588.9 916.1,619.9 927.3,623.3 936.4,592.3"/>
<polygon points="894.8,600.5 885.6,629.2 895.8,632.4 905,603.7"/>
<polygon points="914.1,626.9 904.9,656.7 915.5,659.9 924.7,630.1"/>
<polygon points="900,665.7 890.9,695.5 902.1,698.9 911.2,669.1"/>
<polygon points="789.3,659.9 813.4,667.9 816.8,657.7 792.7,649.7"/>
<polygon points="850.9,679.8 879.6,690.1 883.6,679.1 854.9,668.8"/>
<polygon points="982.1,598.3 954.6,624.7 962,632.3 989.5,605.9"/>
<polygon points="963.7,643 941.9,664.8 949.5,672.4 971.3,650.6"/>
<polygon points="953.4,682 931.6,703.7 939.2,711.3 961,689.6"/>
<polygon points="996.7,616.9 1042.5,631.8 1046.1,620.6 1000.3,605.7"/>
<polygon points="1052.8,634.1 1078,642.1 1081.6,630.9 1056.4,622.9"/>
<polygon points="1014.1,635 987.8,661.3 995.4,668.9 1021.7,642.6"/>
<polygon points="1002.6,674 980.8,697 988.6,704.4 1010.4,681.4"/>
<polygon points="1061.1,647.6 1038.2,670.5 1045.8,678.1 1068.7,655.2"/>
<polygon points="1047.3,687.8 1026.6,709.6 1034.4,717 1055.1,695.2"/>
<polygon points="985.4,724.1 1015.2,733.3 1018.4,723.1 988.6,713.9"/>
<polygon points="964.6,717.8 958.9,741.9 969.3,744.3 975,720.2"/>
<polygon points="885.5,716.6 879.8,741.9 890.2,744.3 895.9,719"/>
<polygon points="1073.3,706.6 1034.6,738.7 1038,742.9 1076.7,710.8"/>
<polygon points="832.3,625 859.8,634.2 851.8,652.5 826.6,643.4"/>
<polygon points="783,682.3 807.1,690.3 802.5,701.8 779.6,694.9"/>
<polygon points="816.3,694.9 836.9,701.8 832.3,713.3 812.8,706.4"/>
<polygon points="847.2,704.1 872.4,712.1 867.8,723.6 843.8,714.4"/>
<polygon points="808.2,721.3 826.6,727 824.3,738 805.9,738"/>
<polygon points="919.4,730.5 933.1,732.7 932,738 918.2,738"/>
<polygon points="1068.8,642.7 1107.8,655.3 1111,645.1 1072,632.5"/>
<polygon points="1101.7,661.8 1085.7,682.5 1094.1,689.1 1110.1,668.4"/>
<polygon points="1127.3,669.1 1169.7,682.8 1172.9,672.6 1130.5,658.9"/>
<polygon points="1188.4,673.2 1203.3,676.6 1201.1,686.9 1267.5,706.4 1264.1,717.8 1199.9,697.2 1185,686.9"/>
<polygon points="1259.5,697.2 1282.4,706.4 1279,715.6 1258.3,709.8"/>
<polygon points="1091.3,712.4 1137.2,730.8 1141.2,721 1095.3,702.6"/>
<polygon points="1142,713.7 1190.1,730.9 1193.7,720.9 1145.6,703.7"/>
<polygon points="1075,704.1 1084.2,702.9 1077.3,715.6 1075,714.4"/>
<polygon points="1277.3,722.1 1271.6,741.6 1281.8,744.6 1287.5,725.1"/>
<polygon points="1195.3,732.1 1203.3,731.1 1204.5,738 1194.2,738"/>
<polygon points="1218.2,731.1 1233.1,730.5 1233.1,738 1217.1,738"/>
</g>
<polygon points="540.3,525.8 550.6,528.1 547.2,539.6 536.9,537.3" fill="#f3f2ea" stroke="#c9c8be" stroke-width="0.6"/>
<polygon points="1338.6,477.7 1353.5,482.3 1348.9,496 1335.1,491.4" fill="#f3f2ea" stroke="#c9c8be" stroke-width="0.6"/>
<polygon points="509.4,660.5 524.3,665.1 522,671.6 507.1,669.3" fill="#f3f2ea" stroke="#c9c8be" stroke-width="0.6"/>
<g font-family="'DejaVu Sans',sans-serif" text-anchor="middle" fill="#000" stroke="#fff" stroke-width="2" stroke-linejoin="round" paint-order="stroke" style="paint-order:stroke">
<text x="569" y="49.2" font-size="9.3" font-style="oblique">Аквадром</text>
<text x="520.1" y="90.3" font-size="8">7</text>
<text x="546" y="109.5" font-size="9.3" font-style="oblique">Омуль</text>
<text x="606.1" y="106.3" font-size="8">9</text>
<text x="675.1" y="129.7" font-size="8">66</text>
<text x="734" y="135.9" font-size="8">66A</text>
<text x="659" y="178.5" font-size="8">64</text>
<text x="535" y="157.2" font-size="8">14</text>
<text x="591.2" y="160" font-size="8">18</text>
<text x="564.4" y="185.9" font-size="8">16</text>
<text x="642.3" y="95.7" font-size="9.2" transform="rotate(-71 642.3 92.4)">улица Льва Толстого</text>
<text x="481.4" y="108.8" font-size="9.2" transform="rotate(15 481.4 105.5)">ой</text>
<text x="777.3" y="103.4" font-size="8">74</text>
<text x="824.3" y="113.2" font-size="8">72</text>
<text x="798.4" y="151.5" font-size="8">70</text>
<text x="778.4" y="193.4" font-size="8">68</text>
<text x="941.2" y="134.8" font-size="8">83</text>
<text x="973.9" y="146.5" font-size="8">85</text>
<text x="888" y="181.7" font-size="8">79</text>
<text x="1028.2" y="66.7" font-size="8">93</text>
<text x="944.6" y="60.2" font-size="9.3" font-style="oblique">Вечернее</text>
<text x="864.6" y="75.6" font-size="9.2" transform="rotate(-72 864.6 72.3)">улица Ломоносова</text>
<text x="866" y="111.1" font-size="9.2" transform="rotate(-72 866 107.8)">улица Ломоносова</text>
<text x="951.6" y="208.5" font-size="8">73</text>
<text x="1090.6" y="55.2" font-size="8">105</text>
<text x="1303" y="76.5" font-size="8">52</text>
<text x="1347.7" y="133.6" font-size="8">35A</text>
<text x="1250.3" y="202.4" font-size="8">69</text>
<text x="579.3" y="226.7" font-size="8">21</text>
<text x="643" y="220.9" font-size="8">62</text>
<text x="703" y="234.7" font-size="8">49A</text>
<text x="664.1" y="267.4" font-size="8">47</text>
<text x="706.9" y="282.3" font-size="8">49</text>
<text x="748.2" y="292.7" font-size="8">51</text>
<text x="764.2" y="243.4" font-size="8">66</text>
<text x="523.1" y="258.4" font-size="9.3" font-style="oblique">Эрмитаж</text>
<text x="588.4" y="291.2" font-size="9.2" transform="rotate(19.5 588.4 287.9)">Советский проспект</text>
<text x="505.3" y="321.8" font-size="8">19A</text>
<text x="550.2" y="321.8" font-size="8">19</text>
<text x="669.3" y="336.7" font-size="8">70</text>
<text x="727.1" y="355" font-size="8">74</text>
<text x="578.1" y="358.4" font-size="8">56</text>
<text x="635" y="378.4" font-size="8">68</text>
<text x="495.2" y="376.5" font-size="8">17A</text>
<text x="530" y="378.4" font-size="8">17</text>
<text x="555.5" y="365.3" font-size="9.2" transform="rotate(-71.5 555.5 362)">улица Льва Толстого</text>
<text x="900.4" y="229.4" font-size="8">77</text>
<text x="940.5" y="243.2" font-size="8">71</text>
<text x="998.5" y="236.7" font-size="9.3" font-style="oblique">гск Ветеран</text>
<text x="1049.3" y="239.7" font-size="8">75</text>
<text x="910.2" y="334.4" font-size="8">69</text>
<text x="971" y="339.8" font-size="9.3" font-style="oblique">гск Энергия</text>
<text x="769" y="361.3" font-size="9.2" transform="rotate(-70 769 358)">улица Ломоносова</text>
<text x="772.2" y="392.5" font-size="9.2" transform="rotate(-71.5 772.2 389.2)">улица Ломоносова</text>
<text x="1112.8" y="235.1" font-size="8">65A</text>
<text x="1158" y="300.7" font-size="8">65</text>
<text x="1104.3" y="330.9" font-size="8">63</text>
<text x="1113.3" y="363" font-size="8">61</text>
<text x="1284" y="305" font-size="8">73</text>
<text x="1353" y="242.7" font-size="8">71</text>
<text x="1358" y="383.6" font-size="8">29A</text>
<text x="1195.3" y="373.7" font-size="9.3" font-style="oblique">гск Радуга-2</text>
<text x="485.3" y="407.7" font-size="8">51</text>
<text x="559.1" y="412.3" font-size="8">54</text>
<text x="577" y="438.6" font-size="8">53</text>
<text x="635" y="445.1" font-size="8">55</text>
<text x="684" y="473.7" font-size="8">57</text>
<text x="643.5" y="503.5" font-size="8">58</text>
<text x="713.4" y="462.7" font-size="8">58</text>
<text x="595.3" y="497.8" font-size="8">56</text>
<text x="731.2" y="410" font-size="8">60</text>
<text x="672.6" y="391.2" font-size="8">72</text>
<text x="564.4" y="451.2" font-size="9.2" transform="rotate(18 564.4 447.9)">улица Пятилетки</text>
<text x="496.3" y="458.1" font-size="9.3" font-style="oblique">ь и солод</text>
<text x="560.9" y="549.7" font-size="9.3" font-style="oblique">Культурно-деловой центр</text>
<text x="726.6" y="539.4" font-size="9.3" font-style="oblique">Сбербанк</text>
<text x="756.4" y="485.5" font-size="11" font-weight="bold" fill="#43801f">A</text>
<text x="756" y="492.9" font-size="8" font-style="oblique">пл.</text>
<text x="756" y="504.9" font-size="8" font-style="oblique">Первостроителей</text>
<text x="1006.9" y="413.4" font-size="9.3" font-style="oblique">Красное &amp;</text>
<text x="1006.9" y="425.5" font-size="9.3" font-style="oblique">Белое</text>
<text x="927" y="568.3" font-size="9.2" transform="rotate(18 927 565)">улица Пятилетки</text>
<text x="1130" y="416.9" font-size="8">59</text>
<text x="1244.1" y="441.6" font-size="8">67</text>
<text x="1330.1" y="459.9" font-size="8">75</text>
<text x="1345.4" y="498.9" font-size="8">75</text>
<text x="1067" y="399.2" font-size="8">57</text>
<text x="1296.2" y="504.6" font-size="8" transform="rotate(18 1296.2 501.7)">Советский проспект</text>
<text x="633.1" y="571.8" font-size="8">50A</text>
<text x="725.3" y="593.5" font-size="8">54</text>
<text x="695.5" y="629.5" font-size="8">11</text>
<text x="505.5" y="608.4" font-size="8">16</text>
<text x="488.1" y="636.4" font-size="8">44</text>
<text x="617.1" y="643.5" font-size="8">26</text>
<text x="654.5" y="657.7" font-size="8">30</text>
<text x="692.3" y="670.8" font-size="8">32</text>
<text x="552.2" y="652.4" font-size="8">20</text>
<text x="590.3" y="664.1" font-size="8">24</text>
<text x="628.1" y="677.7" font-size="8">28</text>
<text x="689.3" y="703.6" font-size="8">48</text>
<text x="759.2" y="697.4" font-size="8">31</text>
<text x="750" y="727.6" font-size="8">29</text>
<text x="492.9" y="704.7" font-size="8">47</text>
<text x="531.2" y="723" font-size="8">51</text>
<text x="569" y="728.8" font-size="8">53</text>
<text x="503.6" y="737.9" font-size="8">49</text>
<text x="577" y="608.4" font-size="8" transform="rotate(18 577 605.5)">улица Гагарина</text>
<text x="715.6" y="700.5" font-size="9.2" transform="rotate(-72 715.6 697.2)">улица Ломоносова</text>
<text x="467" y="631.8" font-size="9.2" transform="rotate(-72 467 628.5)">улица Льва Толстого</text>
<text x="801.4" y="575.7" font-size="8">39</text>
<text x="820.1" y="602.7" font-size="8">37</text>
<text x="788.1" y="614.6" font-size="8">35</text>
<text x="840.3" y="567.7" font-size="8">64</text>
<text x="862.1" y="600.4" font-size="8">66</text>
<text x="925.1" y="614.6" font-size="8">29</text>
<text x="894.2" y="625.6" font-size="8">27</text>
<text x="913" y="651.5" font-size="8">25</text>
<text x="900.4" y="691.6" font-size="8">23</text>
<text x="841" y="647.4" font-size="8">17</text>
<text x="802.5" y="668" font-size="8">15</text>
<text x="865.1" y="689.8" font-size="8">19</text>
<text x="971.4" y="624" font-size="8">18</text>
<text x="955.4" y="665.7" font-size="8">16</text>
<text x="944.6" y="704" font-size="8">14</text>
<text x="1019.1" y="626.3" font-size="8">76</text>
<text x="1003.5" y="658.9" font-size="8">74</text>
<text x="993.9" y="697.8" font-size="8">20</text>
<text x="1051.2" y="670.8" font-size="8">78</text>
<text x="1039" y="711.6" font-size="8">22</text>
<text x="999.1" y="733.4" font-size="8">24</text>
<text x="776.8" y="650.8" font-size="8">33</text>
<text x="812.8" y="738.4" font-size="8">29A</text>
<text x="885" y="737.9" font-size="8">21</text>
<text x="826.6" y="689.8" font-size="8" transform="rotate(18 826.6 686.9)">улица Гагарина</text>
<text x="923.5" y="677.2" font-size="8" transform="rotate(-72 923.5 674.3)">улица Менделеева</text>
<text x="1096.1" y="683.6" font-size="8">82</text>
<text x="1226.9" y="705.8" font-size="8">90</text>
<text x="1115.1" y="724.6" font-size="8">84</text>
<text x="1165.1" y="726.5" font-size="8">88</text>
<text x="1125.9" y="681.5" font-size="9.3" font-style="oblique">Пив&amp;Ко</text>
<text x="1269.8" y="723.4" font-size="9.3" font-style="oblique">Сбербанк</text>
<text x="1228.1" y="670.3" font-size="9.2" transform="rotate(18 1228.1 667)">улица Пятилетки</text>
<text x="1104.5" y="615.5" font-size="11" font-weight="bold" fill="#43801f">A</text>
<text x="1103.6" y="624.5" font-size="8" font-style="oblique">Комсомольский</text>
<text x="1102" y="636.6" font-size="8" font-style="oblique">парк</text>
<text x="1369.5" y="550.3" font-size="10.5" transform="rotate(-72 1369.5 546.5)">улица Юбилейная</text>
</g>
<g transform="translate(546 91.8)"><circle r="7" fill="#fff" stroke="#6f6f9a" stroke-width="0.9"/><path d="M-3.2,-1.5h5.6v3.2a2.6,2.6 0 0 1 -5.6,0z M2.4,-0.8h1.2v2h-1.2 M-3.6,4h6.6" fill="#55557a" stroke="#55557a" stroke-width="0.7"/><path d="M-1.8,-4v1.6M-0.4,-4v1.6M1,-4v1.6" stroke="#55557a" stroke-width="0.7"/></g>
<g transform="translate(944.6 43.2)"><circle r="7" fill="#fff" stroke="#6f6f9a" stroke-width="0.9"/><path d="M-3.2,-1.5h5.6v3.2a2.6,2.6 0 0 1 -5.6,0z M2.4,-0.8h1.2v2h-1.2 M-3.6,4h6.6" fill="#55557a" stroke="#55557a" stroke-width="0.7"/><path d="M-1.8,-4v1.6M-0.4,-4v1.6M1,-4v1.6" stroke="#55557a" stroke-width="0.7"/></g>
<g transform="translate(522.4 240.9)"><circle r="7" fill="#fff" stroke="#6f6f9a" stroke-width="0.9"/><path d="M-3.2,-1.5h5.6v3.2a2.6,2.6 0 0 1 -5.6,0z M2.4,-0.8h1.2v2h-1.2 M-3.6,4h6.6" fill="#55557a" stroke="#55557a" stroke-width="0.7"/><path d="M-1.8,-4v1.6M-0.4,-4v1.6M1,-4v1.6" stroke="#55557a" stroke-width="0.7"/></g>
<g transform="translate(997.3 219.2)"><circle r="7" fill="#fff" stroke="#6f6f9a" stroke-width="0.9"/><text y="3.6" font-family="'DejaVu Sans',sans-serif" font-weight="bold" font-size="10" text-anchor="middle" fill="#6a6a92">P</text></g>
<g transform="translate(971 322.3)"><circle r="7" fill="#fff" stroke="#6f6f9a" stroke-width="0.9"/><text y="3.6" font-family="'DejaVu Sans',sans-serif" font-weight="bold" font-size="10" text-anchor="middle" fill="#6a6a92">P</text></g>
<g transform="translate(932 367)"><circle r="7" fill="#fff" stroke="#f0806a" stroke-width="0.9"/><path d="M-4,0h8M0,-4v8" stroke="#ee5a40" stroke-width="1.6"/></g>
<g transform="translate(1194.6 356.2)"><circle r="7" fill="#fff" stroke="#6f6f9a" stroke-width="0.9"/><text y="3.6" font-family="'DejaVu Sans',sans-serif" font-weight="bold" font-size="10" text-anchor="middle" fill="#6a6a92">P</text></g>
<g transform="translate(483 441)"><circle r="7" fill="#fff" stroke="#6f6f9a" stroke-width="0.9"/><path d="M-3.2,-1.5h5.6v3.2a2.6,2.6 0 0 1 -5.6,0z M2.4,-0.8h1.2v2h-1.2 M-3.6,4h6.6" fill="#55557a" stroke="#55557a" stroke-width="0.7"/><path d="M-1.8,-4v1.6M-0.4,-4v1.6M1,-4v1.6" stroke="#55557a" stroke-width="0.7"/></g>
<g transform="translate(688.8 506.8)"><circle r="7" fill="#fff" stroke="#f0806a" stroke-width="0.9"/><path d="M-4,0h8M0,-4v8" stroke="#ee5a40" stroke-width="1.6"/></g>
<g transform="translate(727.1 521.7)"><circle r="7" fill="#fff" stroke="#4f7fd0" stroke-width="0.9"/><text y="4" font-family="'DejaVu Sans',sans-serif" font-weight="bold" font-size="11" text-anchor="middle" fill="#2f66c8">$</text></g>
<g transform="translate(1006.9 395.6)"><circle r="7" fill="#fff" stroke="#6f6f9a" stroke-width="0.9"/><path d="M-3.2,-1.5h5.6v3.2a2.6,2.6 0 0 1 -5.6,0z M2.4,-0.8h1.2v2h-1.2 M-3.6,4h6.6" fill="#55557a" stroke="#55557a" stroke-width="0.7"/><path d="M-1.8,-4v1.6M-0.4,-4v1.6M1,-4v1.6" stroke="#55557a" stroke-width="0.7"/></g>
<g transform="translate(1125.9 664)"><circle r="7" fill="#fff" stroke="#6f6f9a" stroke-width="0.9"/><path d="M-3.2,-1.5h5.6v3.2a2.6,2.6 0 0 1 -5.6,0z M2.4,-0.8h1.2v2h-1.2 M-3.6,4h6.6" fill="#55557a" stroke="#55557a" stroke-width="0.7"/><path d="M-1.8,-4v1.6M-0.4,-4v1.6M1,-4v1.6" stroke="#55557a" stroke-width="0.7"/></g>
<g transform="translate(1269.8 705.9)"><circle r="7" fill="#fff" stroke="#4f7fd0" stroke-width="0.9"/><text y="4" font-family="'DejaVu Sans',sans-serif" font-weight="bold" font-size="11" text-anchor="middle" fill="#2f66c8">$</text></g>
<circle cx="865.5" cy="80.3" r="41.5" fill="#00ced1" fill-opacity="0.6" stroke="#17c2c6" stroke-width="2"/>
<circle cx="642" cy="473.5" r="41.2" fill="#00ced1" fill-opacity="0.6" stroke="#17c2c6" stroke-width="2"/>
<circle cx="746" cy="488.3" r="50" fill="#00ced1" fill-opacity="0.6" stroke="#17c2c6" stroke-width="2"/>
<circle cx="1104" cy="621" r="29.3" fill="#00ced1" fill-opacity="0.6" stroke="#17c2c6" stroke-width="2"/>
<circle cx="1228.3" cy="670.4" r="28.7" fill="#00ced1" fill-opacity="0.6" stroke="#17c2c6" stroke-width="2"/>
</svg>
<div class="mbtn" style="top:15px;height:26px;"><svg width="26" height="26" viewBox="0 0 26 26"><circle cx="11.5" cy="11.5" r="4.6" fill="none" stroke="#707070" stroke-width="1.1"/><path d="M15 15l4.2 4.2" stroke="#707070" stroke-width="1.2"/></svg></div>
<div class="mbtn" style="top:55px;height:26px;"><svg width="26" height="26" viewBox="0 0 26 26"><path d="M5.5 13c2.5-4 5-5 7.5-5s5 1 7.5 5c-2.5 4-5 5-7.5 5s-5-1-7.5-5z" fill="none" stroke="#707070" stroke-width="1.1"/><circle cx="13" cy="13" r="2.2" fill="#707070"/></svg></div>
<div class="mbtn" style="top:95px;height:26px;"><svg width="26" height="26" viewBox="0 0 26 26"><path d="M5.5 8l4.5-1.8v12L5.5 20zM10.8 6.2l4.4 1.8v12l-4.4-1.8zM16 8l4.5-1.8v12L16 20z" fill="#666"/></svg></div>
<div class="mbtn" style="top:136px;height:53px;"><svg width="26" height="53" viewBox="0 0 26 53"><path d="M8 13.5h10M13 8.5v10" stroke="#555" stroke-width="1.6"/><path d="M0 26.5h26" stroke="#e4e4e4" stroke-width="1"/><path d="M8 40h10" stroke="#555" stroke-width="1.6"/></svg></div>
<div style="position:absolute;left:24px;top:198px;width:9px;height:178px;background:rgba(70,70,70,.55);border-radius:4px"></div>
<div style="position:absolute;left:20px;top:220px;width:16px;height:16px;background:#fff;border-radius:2px;box-shadow:0 0 2px rgba(0,0,0,.3)"></div>
<div style="position:absolute;left:840px;top:10px;width:38px;height:38px;border-radius:50%;background:radial-gradient(circle,#fff 55%,rgba(255,255,255,0) 72%)"></div>
<svg style="position:absolute;left:846px;top:16px" width="26" height="26" viewBox="37.5 5 26 26"><path d="M52.5 7.2C53.5 8.5 52.8 10.2 51 10.6C46 12 41.5 16.5 40 23C38.3 20 38.8 15 42 11.5C44.5 8.5 49.5 5.8 52.5 7.2Z" fill="#f5164e"/><path d="M40.2 22.8C41.5 21.8 43 22.3 44 23.5C47.5 27.5 54 28.8 60.5 27.5C57 30 50 30.8 45.5 28.6C42.5 27.2 40 25 40.2 22.8Z" fill="#f5164e"/><path d="M53.5 7.6C58 9.5 61.8 14 62 20C62 23 61.5 25.6 60 25.8C58.3 25.9 58 24 58.4 22C59.3 17 57.5 11.5 53.5 7.6Z" fill="#0f5ab8"/></svg>
<div id="dlg"><div class="h">Справка</div><svg style="position:absolute;left:269px;top:7px" width="12" height="13" viewBox="0 0 12 13"><path d="M2.5 6l3.5-3.5 3.5 3.5M2.5 10.5l3.5-3.5 3.5 3.5" fill="none" stroke="#555" stroke-width="1"/></svg><svg style="position:absolute;left:292px;top:7px" width="11" height="11" viewBox="0 0 11 11"><path d="M2 2l7 7M9 2l-7 7" stroke="#555" stroke-width="1"/></svg><div class="b">Для того чтобы увидеть всплывающую подсказку к геозоне, наведите курсор на на ее изображение на карте или на саму геозону, зажав при этом клавишу Ctrl. Чтобы открыть диалог свойств геозоны, щелкните по ней левой кнопкой мыши, удерживая клавишу Ctrl.</div></div>
<svg style="position:absolute;left:0;top:640px" width="400" height="62" viewBox="476 676 400 62"><g font-family="'DejaVu Sans',sans-serif" font-weight="bold" fill="#000" stroke="#fff" stroke-width="2" stroke-opacity=".6" style="paint-order:stroke"><text x="529" y="693" font-size="10" text-anchor="middle">100 m</text><text x="513" y="706.5" font-size="10" text-anchor="middle">200 ft</text><text x="485.3" y="719" font-size="9.8">© OpenStreetMap contributors</text></g><path d="M487 683.5v25M487 696h84.5M571.5 683.5v12.5M538.5 696v13" fill="none" stroke="#000" stroke-width="2"/></svg>
<div style="position:absolute;right:3px;top:672.5px;font-family:'DejaVu Sans',sans-serif;font-weight:bold;font-size:10.3px;color:#000;text-shadow:0 0 2px #fff,0 0 2px #fff">59.405298° : 56.828927°</div>
</div>
<div id="bot">
<div style="position:absolute;left:40px;top:0;width:1px;height:28px;background:#b9bbbe"></div><div style="position:absolute;left:74px;top:0;width:1px;height:28px;background:#b9bbbe"></div>
<svg style="position:absolute;left:11px;top:7px" width="18" height="14" viewBox="0 0 18 14"><rect x="1.5" y="0.8" width="15.5" height="12.4" fill="none" stroke="#fff" stroke-width="1.5"/><rect x="1" y="0" width="5.5" height="14" fill="#fff"/></svg>
<svg style="position:absolute;left:50px;top:7px" width="15" height="15" viewBox="0 0 15.5 15.5"><rect x="0" y="0" width="4.3" height="4.3" fill="#fff"/><rect x="5.3" y="0" width="4.3" height="4.3" fill="#fff"/><rect x="10.6" y="0" width="4.3" height="4.3" fill="#fff"/><rect x="0" y="5.3" width="4.3" height="4.3" fill="#fff"/><rect x="5.3" y="5.3" width="4.3" height="4.3" fill="#fff"/><rect x="10.6" y="5.3" width="4.3" height="4.3" fill="#fff"/><rect x="0" y="10.6" width="4.3" height="4.3" fill="#fff"/><rect x="5.3" y="10.6" width="4.3" height="4.3" fill="#fff"/><rect x="10.6" y="10.6" width="4.3" height="4.3" fill="#fff"/></svg>
<div style="position:absolute;left:510px;top:0;line-height:28px;font-size:12px;font-weight:bold;color:#fff">© Gurtam</div>
<svg style="position:absolute;left:1008px;top:6px" width="16" height="16" viewBox="0 0 16 16"><path d="M8 .8l2.2 4.9 5.3.5-4 3.6 1.2 5.2L8 12.3 3.3 15l1.2-5.2-4-3.6 5.3-.5z" fill="#ffe81a"/></svg>
<div style="position:absolute;left:1032px;top:2px;width:1px;height:25px;background:#b9bbbe"></div>
<div style="position:absolute;left:1201px;top:2px;width:1px;height:25px;background:#b9bbbe"></div>
<div style="position:absolute;left:1242px;top:2px;width:1px;height:25px;background:#b9bbbe"></div>
<svg style="position:absolute;left:1045px;top:7px" width="18" height="15" viewBox="0 0 18 15"><rect x="0" y="0" width="18" height="15" fill="#c9cacc"/><rect x="0" y="0" width="18" height="3.5" fill="#b9babd"/><path d="M3 7.5h12M3 10.5h8" stroke="#9fa1a5" stroke-width="1.4"/></svg>
<div style="position:absolute;left:1066px;top:5px;width:18px;height:16px;border-radius:8px;background:#7c7e82;color:#e4e4e4;font-size:12px;line-height:16px;text-align:center">0</div>
<svg style="position:absolute;left:1095px;top:6px" width="24" height="17" viewBox="0 0 24 17"><rect x="0" y="1" width="17" height="12" fill="#fff"/><path d="M0.5 1.5l8 6 8-6" fill="none" stroke="#9fa1a5" stroke-width="1.4"/><path d="M10.5 10.5h6v-3l6 4.5-6 4.5v-3h-6z" fill="#fff" stroke="#9fa1a5" stroke-width="1"/></svg>
<div style="position:absolute;left:1122px;top:5px;width:18px;height:16px;border-radius:8px;background:#f4144a;color:#fff;font-size:12px;line-height:16px;text-align:center">7</div>
<svg style="position:absolute;left:1152px;top:7px" width="18" height="15" viewBox="0 0 18 15"><rect width="18" height="15" fill="#c9cacc"/><path d="M2 13l4.5-6 3 3.5 2.5-2.5 4 5z" fill="#9fa1a5"/><circle cx="5" cy="4" r="1.6" fill="#9fa1a5"/></svg>
<div style="position:absolute;left:1172px;top:5px;width:18px;height:16px;border-radius:8px;background:#7c7e82;color:#e4e4e4;font-size:12px;line-height:16px;text-align:center">0</div>
<svg style="position:absolute;left:1212px;top:8px" width="20" height="13" viewBox="0 0 20 13"><rect x="0" y="0" width="7.5" height="13" fill="#c4c5c8"/><rect x="9" y="0" width="11" height="13" fill="#c4c5c8"/><path d="M1.5 3h4.5M1.5 6h4.5M1.5 9h4.5" stroke="#9fa1a5" stroke-width="1.2"/></svg>
<div style="position:absolute;left:1265px;top:0;line-height:28px;font-size:12px;color:#fff">10:31:29 (+03)</div>
</div>
</body>
</html>
